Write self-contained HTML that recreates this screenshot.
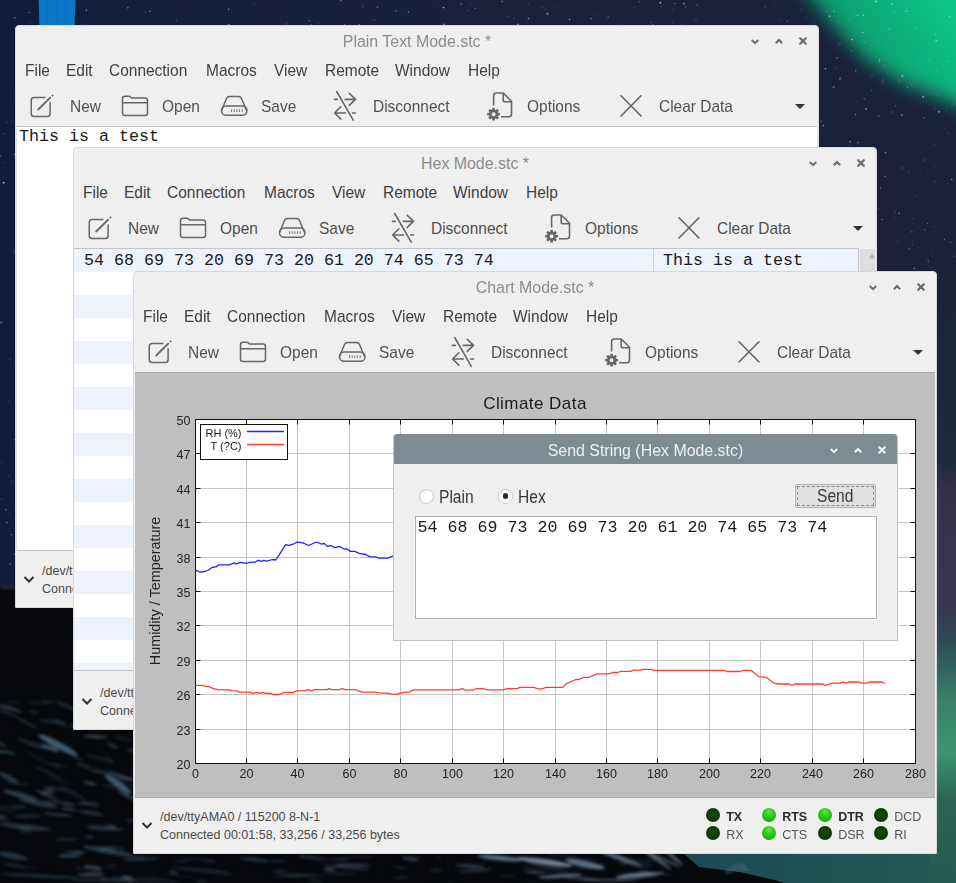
<!DOCTYPE html><html><head><meta charset="utf-8"><style>
*{margin:0;padding:0;box-sizing:border-box}
html,body{width:956px;height:883px;overflow:hidden}
body{position:relative;background:#151b33;font-family:"Liberation Sans",sans-serif}
.win{position:absolute;width:804px;height:583px;background:#efefef;border:1px solid #d8d8d8;border-radius:4px 4px 1px 1px;overflow:hidden}
.win .in{position:absolute;left:-1px;top:-1px;width:804px;height:583px}
.ov{position:absolute;left:0;top:0}
.title{position:absolute;left:0;width:804px;top:6.6px;text-align:center;font-size:16.7px;color:#8c8c8c;line-height:20px;transform:scaleX(.954)}
.menu{position:absolute;top:35.5px;font-size:17px;color:#404040;line-height:20px;white-space:pre;transform:scaleX(.91);transform-origin:0 0}
.tool{position:absolute;top:71.5px;margin-left:-1px;font-size:17px;color:#505050;line-height:20px;white-space:pre;transform:scaleX(.91);transform-origin:0 0}
.st{position:absolute;left:27px;font-size:12.5px;color:#4a4a4a;line-height:18px;white-space:pre;margin-top:1px}
.ledon,.ledoff{position:absolute;width:14px;height:14px;border-radius:50%}
.ledoff{background:radial-gradient(circle at 50% 40%,#124806 0%,#0d3c02 60%,#082a00 100%)}
.ledon{background:radial-gradient(circle at 50% 28%,#62e04c 0%,#2ccc18 38%,#1fb410 70%,#158a08 92%,#2a7a20 100%)}
.led{position:absolute;font-size:12.5px;line-height:16px;white-space:pre}
.dl{position:absolute;font-size:17.5px;line-height:20px;color:#383838;white-space:pre;transform:scaleX(.89);transform-origin:0 0;margin-top:1px}
.mono{font-family:"Liberation Mono",monospace;font-size:16.67px;color:#1a1a1a;white-space:pre}
</style></head><body><svg style="position:absolute;left:0;top:0" width="956" height="883" viewBox="0 0 956 883"><defs><linearGradient id="aur" gradientUnits="userSpaceOnUse" x1="806" y1="4" x2="847" y2="-64.5"><stop offset="0" stop-color="#1a2a40" stop-opacity="0"/><stop offset="0.1" stop-color="#17404a" stop-opacity="0.75"/><stop offset="0.3" stop-color="#0f7864"/><stop offset="0.6" stop-color="#0ea878"/><stop offset="1" stop-color="#0cc486"/></linearGradient><linearGradient id="rs" gradientUnits="userSpaceOnUse" x1="0" y1="260" x2="0" y2="883"><stop offset="0" stop-color="#1b2137"/><stop offset="0.32" stop-color="#1f2a3c"/><stop offset="0.37" stop-color="#35304a"/><stop offset="0.546" stop-color="#3a3450"/><stop offset="0.61" stop-color="#2e4a55"/><stop offset="0.706" stop-color="#3a8068"/><stop offset="0.787" stop-color="#3e9472"/><stop offset="0.867" stop-color="#2c6454"/><stop offset="1" stop-color="#235a50"/></linearGradient><linearGradient id="nav" gradientUnits="userSpaceOnUse" x1="0" y1="0" x2="500" y2="0"><stop offset="0" stop-color="#121a3b"/><stop offset="0.2" stop-color="#161d3b"/><stop offset="1" stop-color="#1b213b"/></linearGradient><linearGradient id="teal" gradientUnits="userSpaceOnUse" x1="700" y1="0" x2="956" y2="0"><stop offset="0" stop-color="#1e4a55"/><stop offset="1" stop-color="#225a55"/></linearGradient><linearGradient id="aur2" gradientUnits="userSpaceOnUse" x1="840" y1="60" x2="940" y2="-10"><stop offset="0" stop-color="#128a66"/><stop offset="0.35" stop-color="#0ea876"/><stop offset="1" stop-color="#0bc688"/></linearGradient><filter id="blr" x="-20%" y="-20%" width="140%" height="140%"><feGaussianBlur stdDeviation="9"/></filter><filter id="sb" x="-50%" y="-50%" width="200%" height="200%"><feGaussianBlur stdDeviation="1.8"/></filter></defs><rect width="956" height="883" fill="url(#nav)"/><path d="M790 -30 L812 0 L832 24 L860 55 L900 82 L956 104 L990 118 L990 -30 Z" fill="url(#aur2)" filter="url(#blr)"/><circle cx="309.6" cy="90.5" r="0.45" fill="#d0d8ff" fill-opacity="0.62"/><circle cx="785.1" cy="56.5" r="1.0" fill="#d0d8ff" fill-opacity="0.58"/><circle cx="205.3" cy="51.6" r="0.55" fill="#d0d8ff" fill-opacity="0.47"/><circle cx="86.7" cy="254.7" r="0.45" fill="#d0d8ff" fill-opacity="0.74"/><circle cx="905.8" cy="378.4" r="0.45" fill="#d0d8ff" fill-opacity="0.58"/><circle cx="551.7" cy="238.0" r="0.45" fill="#d0d8ff" fill-opacity="0.83"/><circle cx="532.2" cy="79.9" r="1.0" fill="#d0d8ff" fill-opacity="0.47"/><circle cx="112.6" cy="185.1" r="0.55" fill="#d0d8ff" fill-opacity="0.73"/><circle cx="98.5" cy="342.7" r="0.45" fill="#d0d8ff" fill-opacity="0.32"/><circle cx="523.6" cy="37.7" r="0.55" fill="#d0d8ff" fill-opacity="0.24"/><circle cx="474.6" cy="319.0" r="0.8" fill="#d0d8ff" fill-opacity="0.71"/><circle cx="559.8" cy="271.9" r="0.55" fill="#d0d8ff" fill-opacity="0.39"/><circle cx="668.2" cy="146.5" r="1.0" fill="#d0d8ff" fill-opacity="0.57"/><circle cx="473.3" cy="206.1" r="1.0" fill="#d0d8ff" fill-opacity="0.49"/><circle cx="937.0" cy="70.8" r="0.65" fill="#d0d8ff" fill-opacity="0.47"/><circle cx="145.3" cy="293.4" r="0.45" fill="#d0d8ff" fill-opacity="0.23"/><circle cx="730.9" cy="343.8" r="0.65" fill="#d0d8ff" fill-opacity="0.77"/><circle cx="325.2" cy="210.1" r="0.8" fill="#d0d8ff" fill-opacity="0.52"/><circle cx="65.7" cy="56.2" r="0.45" fill="#d0d8ff" fill-opacity="0.38"/><circle cx="58.0" cy="420.9" r="0.8" fill="#d0d8ff" fill-opacity="0.62"/><circle cx="272.1" cy="231.5" r="0.45" fill="#d0d8ff" fill-opacity="0.63"/><circle cx="899.3" cy="213.3" r="0.8" fill="#d0d8ff" fill-opacity="0.60"/><circle cx="56.4" cy="460.9" r="0.55" fill="#d0d8ff" fill-opacity="0.28"/><circle cx="380.4" cy="550.1" r="0.55" fill="#d0d8ff" fill-opacity="0.52"/><circle cx="429.4" cy="329.7" r="0.8" fill="#d0d8ff" fill-opacity="0.77"/><circle cx="826.0" cy="167.1" r="0.65" fill="#d0d8ff" fill-opacity="0.47"/><circle cx="652.7" cy="228.3" r="0.45" fill="#d0d8ff" fill-opacity="0.35"/><circle cx="168.5" cy="139.2" r="0.8" fill="#d0d8ff" fill-opacity="0.35"/><circle cx="794.5" cy="109.4" r="0.55" fill="#d0d8ff" fill-opacity="0.38"/><circle cx="400.5" cy="221.6" r="0.55" fill="#d0d8ff" fill-opacity="0.57"/><circle cx="660.1" cy="309.3" r="0.45" fill="#d0d8ff" fill-opacity="0.60"/><circle cx="436.6" cy="522.6" r="1.0" fill="#d0d8ff" fill-opacity="0.82"/><circle cx="375.1" cy="239.4" r="0.8" fill="#d0d8ff" fill-opacity="0.27"/><circle cx="59.5" cy="40.4" r="0.55" fill="#d0d8ff" fill-opacity="0.34"/><circle cx="105.1" cy="360.4" r="1.0" fill="#d0d8ff" fill-opacity="0.27"/><circle cx="144.6" cy="60.9" r="0.45" fill="#d0d8ff" fill-opacity="0.44"/><circle cx="67.2" cy="124.8" r="0.65" fill="#d0d8ff" fill-opacity="0.44"/><circle cx="913.4" cy="361.4" r="0.45" fill="#d0d8ff" fill-opacity="0.51"/><circle cx="811.6" cy="595.9" r="0.8" fill="#d0d8ff" fill-opacity="0.50"/><circle cx="298.1" cy="86.5" r="0.65" fill="#d0d8ff" fill-opacity="0.69"/><circle cx="457.6" cy="415.2" r="0.55" fill="#d0d8ff" fill-opacity="0.54"/><circle cx="909.1" cy="317.0" r="1.0" fill="#d0d8ff" fill-opacity="0.30"/><circle cx="873.9" cy="454.9" r="0.45" fill="#d0d8ff" fill-opacity="0.39"/><circle cx="665.6" cy="156.7" r="0.55" fill="#d0d8ff" fill-opacity="0.44"/><circle cx="340.0" cy="133.7" r="1.0" fill="#d0d8ff" fill-opacity="0.55"/><circle cx="315.2" cy="133.8" r="0.55" fill="#d0d8ff" fill-opacity="0.73"/><circle cx="770.6" cy="491.0" r="0.55" fill="#d0d8ff" fill-opacity="0.68"/><circle cx="191.1" cy="295.7" r="0.45" fill="#d0d8ff" fill-opacity="0.68"/><circle cx="755.3" cy="283.3" r="1.0" fill="#d0d8ff" fill-opacity="0.33"/><circle cx="914.4" cy="268.3" r="0.65" fill="#d0d8ff" fill-opacity="0.81"/><circle cx="913.0" cy="218.8" r="0.55" fill="#d0d8ff" fill-opacity="0.34"/><circle cx="449.4" cy="202.6" r="1.0" fill="#d0d8ff" fill-opacity="0.51"/><circle cx="803.5" cy="287.7" r="0.45" fill="#d0d8ff" fill-opacity="0.62"/><circle cx="797.9" cy="71.9" r="0.55" fill="#d0d8ff" fill-opacity="0.45"/><circle cx="457.0" cy="107.1" r="0.65" fill="#d0d8ff" fill-opacity="0.71"/><circle cx="82.9" cy="567.7" r="0.8" fill="#d0d8ff" fill-opacity="0.67"/><circle cx="383.7" cy="568.1" r="0.55" fill="#d0d8ff" fill-opacity="0.67"/><circle cx="949.4" cy="16.5" r="0.8" fill="#d0d8ff" fill-opacity="0.58"/><circle cx="771.0" cy="87.7" r="0.8" fill="#d0d8ff" fill-opacity="0.74"/><circle cx="628.3" cy="210.2" r="0.55" fill="#d0d8ff" fill-opacity="0.56"/><circle cx="20.5" cy="479.6" r="0.45" fill="#d0d8ff" fill-opacity="0.67"/><circle cx="503.4" cy="560.2" r="0.55" fill="#d0d8ff" fill-opacity="0.48"/><circle cx="789.8" cy="126.6" r="0.65" fill="#d0d8ff" fill-opacity="0.36"/><circle cx="479.1" cy="458.2" r="1.0" fill="#d0d8ff" fill-opacity="0.41"/><circle cx="400.6" cy="78.6" r="0.65" fill="#d0d8ff" fill-opacity="0.79"/><circle cx="858.2" cy="397.5" r="1.0" fill="#d0d8ff" fill-opacity="0.73"/><circle cx="402.1" cy="550.6" r="1.0" fill="#d0d8ff" fill-opacity="0.53"/><circle cx="145.2" cy="306.3" r="0.55" fill="#d0d8ff" fill-opacity="0.77"/><circle cx="581.8" cy="465.6" r="0.55" fill="#d0d8ff" fill-opacity="0.30"/><circle cx="452.7" cy="435.1" r="0.65" fill="#d0d8ff" fill-opacity="0.56"/><circle cx="652.3" cy="318.4" r="0.45" fill="#d0d8ff" fill-opacity="0.51"/><circle cx="844.4" cy="34.1" r="0.45" fill="#d0d8ff" fill-opacity="0.32"/><circle cx="738.3" cy="304.6" r="0.45" fill="#d0d8ff" fill-opacity="0.57"/><circle cx="423.7" cy="367.5" r="1.0" fill="#d0d8ff" fill-opacity="0.53"/><circle cx="190.6" cy="166.3" r="0.8" fill="#d0d8ff" fill-opacity="0.53"/><circle cx="485.4" cy="148.6" r="0.65" fill="#d0d8ff" fill-opacity="0.54"/><circle cx="882.2" cy="535.7" r="0.8" fill="#d0d8ff" fill-opacity="0.33"/><circle cx="131.1" cy="73.0" r="0.45" fill="#d0d8ff" fill-opacity="0.49"/><circle cx="641.6" cy="257.0" r="0.65" fill="#d0d8ff" fill-opacity="0.34"/><circle cx="749.4" cy="538.2" r="0.65" fill="#d0d8ff" fill-opacity="0.30"/><circle cx="136.7" cy="529.7" r="0.55" fill="#d0d8ff" fill-opacity="0.83"/><circle cx="713.8" cy="56.5" r="0.55" fill="#d0d8ff" fill-opacity="0.78"/><circle cx="946.3" cy="499.5" r="0.8" fill="#d0d8ff" fill-opacity="0.30"/><circle cx="950.3" cy="242.3" r="0.65" fill="#d0d8ff" fill-opacity="0.47"/><circle cx="304.5" cy="433.3" r="1.0" fill="#d0d8ff" fill-opacity="0.21"/><circle cx="438.5" cy="421.9" r="1.0" fill="#d0d8ff" fill-opacity="0.45"/><circle cx="596.5" cy="307.4" r="0.55" fill="#d0d8ff" fill-opacity="0.24"/><circle cx="928.9" cy="62.9" r="0.45" fill="#d0d8ff" fill-opacity="0.37"/><circle cx="866.0" cy="108.9" r="0.8" fill="#d0d8ff" fill-opacity="0.69"/><circle cx="812.2" cy="405.6" r="0.8" fill="#d0d8ff" fill-opacity="0.81"/><circle cx="142.8" cy="551.5" r="0.65" fill="#d0d8ff" fill-opacity="0.57"/><circle cx="85.5" cy="34.5" r="0.8" fill="#d0d8ff" fill-opacity="0.65"/><circle cx="855.9" cy="161.4" r="0.45" fill="#d0d8ff" fill-opacity="0.21"/><circle cx="766.4" cy="50.2" r="0.45" fill="#d0d8ff" fill-opacity="0.76"/><circle cx="252.8" cy="73.0" r="1.0" fill="#d0d8ff" fill-opacity="0.21"/><circle cx="399.4" cy="549.3" r="0.45" fill="#d0d8ff" fill-opacity="0.60"/><circle cx="503.7" cy="143.1" r="0.55" fill="#d0d8ff" fill-opacity="0.27"/><circle cx="250.4" cy="108.7" r="0.65" fill="#d0d8ff" fill-opacity="0.81"/><circle cx="507.7" cy="123.5" r="0.55" fill="#d0d8ff" fill-opacity="0.49"/><circle cx="258.6" cy="482.2" r="0.45" fill="#d0d8ff" fill-opacity="0.85"/><circle cx="14.7" cy="439.8" r="0.55" fill="#d0d8ff" fill-opacity="0.56"/><circle cx="491.6" cy="147.4" r="0.8" fill="#d0d8ff" fill-opacity="0.49"/><circle cx="627.6" cy="327.5" r="1.0" fill="#d0d8ff" fill-opacity="0.78"/><circle cx="294.2" cy="129.1" r="0.55" fill="#d0d8ff" fill-opacity="0.35"/><circle cx="795.7" cy="424.0" r="0.8" fill="#d0d8ff" fill-opacity="0.61"/><circle cx="945.9" cy="589.1" r="0.45" fill="#d0d8ff" fill-opacity="0.74"/><circle cx="67.6" cy="444.5" r="0.55" fill="#d0d8ff" fill-opacity="0.37"/><circle cx="53.0" cy="399.1" r="1.0" fill="#d0d8ff" fill-opacity="0.45"/><circle cx="641.0" cy="169.2" r="0.65" fill="#d0d8ff" fill-opacity="0.36"/><circle cx="43.2" cy="111.2" r="0.45" fill="#d0d8ff" fill-opacity="0.37"/><circle cx="251.7" cy="577.1" r="1.0" fill="#d0d8ff" fill-opacity="0.83"/><circle cx="309.3" cy="20.7" r="0.55" fill="#d0d8ff" fill-opacity="0.77"/><circle cx="340.9" cy="0.6" r="0.8" fill="#d0d8ff" fill-opacity="0.45"/><circle cx="266.7" cy="393.6" r="0.45" fill="#d0d8ff" fill-opacity="0.36"/><circle cx="86.9" cy="490.2" r="1.0" fill="#d0d8ff" fill-opacity="0.29"/><circle cx="39.8" cy="13.5" r="0.55" fill="#d0d8ff" fill-opacity="0.40"/><circle cx="80.8" cy="574.6" r="0.55" fill="#d0d8ff" fill-opacity="0.75"/><circle cx="628.6" cy="429.6" r="0.8" fill="#d0d8ff" fill-opacity="0.77"/><circle cx="730.7" cy="432.4" r="0.65" fill="#d0d8ff" fill-opacity="0.52"/><circle cx="692.3" cy="385.9" r="1.0" fill="#d0d8ff" fill-opacity="0.23"/><circle cx="599.7" cy="440.3" r="0.55" fill="#d0d8ff" fill-opacity="0.73"/><circle cx="869.9" cy="451.7" r="0.45" fill="#d0d8ff" fill-opacity="0.57"/><circle cx="790.0" cy="350.4" r="0.55" fill="#d0d8ff" fill-opacity="0.78"/><circle cx="81.3" cy="25.1" r="0.45" fill="#d0d8ff" fill-opacity="0.61"/><circle cx="360.0" cy="270.8" r="0.45" fill="#d0d8ff" fill-opacity="0.23"/><circle cx="598.7" cy="408.4" r="0.45" fill="#d0d8ff" fill-opacity="0.52"/><circle cx="436.8" cy="42.1" r="1.0" fill="#d0d8ff" fill-opacity="0.81"/><circle cx="87.9" cy="315.6" r="0.8" fill="#d0d8ff" fill-opacity="0.68"/><circle cx="241.1" cy="44.7" r="0.55" fill="#d0d8ff" fill-opacity="0.37"/><circle cx="220.6" cy="390.0" r="0.8" fill="#d0d8ff" fill-opacity="0.50"/><circle cx="73.4" cy="546.3" r="0.45" fill="#d0d8ff" fill-opacity="0.39"/><circle cx="589.8" cy="385.7" r="0.55" fill="#d0d8ff" fill-opacity="0.25"/><circle cx="317.2" cy="390.9" r="1.0" fill="#d0d8ff" fill-opacity="0.65"/><circle cx="542.8" cy="7.5" r="0.65" fill="#d0d8ff" fill-opacity="0.24"/><circle cx="929.7" cy="59.7" r="0.8" fill="#d0d8ff" fill-opacity="0.34"/><circle cx="278.1" cy="309.9" r="0.8" fill="#d0d8ff" fill-opacity="0.50"/><circle cx="733.4" cy="596.0" r="0.65" fill="#d0d8ff" fill-opacity="0.56"/><circle cx="935.1" cy="561.8" r="0.8" fill="#d0d8ff" fill-opacity="0.21"/><circle cx="73.1" cy="304.0" r="0.65" fill="#d0d8ff" fill-opacity="0.85"/><circle cx="369.8" cy="549.9" r="0.45" fill="#d0d8ff" fill-opacity="0.80"/><circle cx="555.9" cy="85.0" r="0.65" fill="#d0d8ff" fill-opacity="0.54"/><circle cx="126.8" cy="492.1" r="0.45" fill="#d0d8ff" fill-opacity="0.53"/><circle cx="672.4" cy="138.8" r="0.8" fill="#d0d8ff" fill-opacity="0.78"/><circle cx="376.7" cy="95.4" r="0.8" fill="#d0d8ff" fill-opacity="0.82"/><circle cx="387.6" cy="436.3" r="0.8" fill="#d0d8ff" fill-opacity="0.47"/><circle cx="302.2" cy="504.1" r="0.65" fill="#d0d8ff" fill-opacity="0.20"/><circle cx="802.2" cy="72.0" r="0.45" fill="#d0d8ff" fill-opacity="0.80"/><circle cx="861.9" cy="173.9" r="0.8" fill="#d0d8ff" fill-opacity="0.44"/><circle cx="373.0" cy="522.0" r="0.8" fill="#d0d8ff" fill-opacity="0.25"/><circle cx="722.4" cy="512.6" r="0.45" fill="#d0d8ff" fill-opacity="0.38"/><circle cx="798.0" cy="171.4" r="0.55" fill="#d0d8ff" fill-opacity="0.81"/><circle cx="928.3" cy="261.7" r="0.65" fill="#d0d8ff" fill-opacity="0.41"/><circle cx="750.6" cy="256.6" r="0.8" fill="#d0d8ff" fill-opacity="0.22"/><circle cx="873.2" cy="564.4" r="0.45" fill="#d0d8ff" fill-opacity="0.56"/><circle cx="47.3" cy="439.4" r="0.55" fill="#d0d8ff" fill-opacity="0.49"/><circle cx="616.1" cy="171.7" r="1.0" fill="#d0d8ff" fill-opacity="0.23"/><circle cx="121.7" cy="283.3" r="0.65" fill="#d0d8ff" fill-opacity="0.42"/><circle cx="244.5" cy="443.2" r="0.8" fill="#d0d8ff" fill-opacity="0.62"/><circle cx="627.1" cy="180.5" r="0.8" fill="#d0d8ff" fill-opacity="0.56"/><circle cx="114.5" cy="385.9" r="1.0" fill="#d0d8ff" fill-opacity="0.25"/><circle cx="866.1" cy="298.2" r="0.65" fill="#d0d8ff" fill-opacity="0.34"/><circle cx="952.6" cy="270.0" r="0.55" fill="#d0d8ff" fill-opacity="0.29"/><circle cx="233.3" cy="104.8" r="0.65" fill="#d0d8ff" fill-opacity="0.56"/><circle cx="228.6" cy="155.0" r="0.45" fill="#d0d8ff" fill-opacity="0.57"/><circle cx="716.7" cy="247.7" r="1.0" fill="#d0d8ff" fill-opacity="0.47"/><circle cx="200.8" cy="162.1" r="0.8" fill="#d0d8ff" fill-opacity="0.69"/><circle cx="265.3" cy="580.6" r="1.0" fill="#d0d8ff" fill-opacity="0.28"/><circle cx="505.9" cy="474.2" r="0.45" fill="#d0d8ff" fill-opacity="0.75"/><circle cx="259.1" cy="149.1" r="0.8" fill="#d0d8ff" fill-opacity="0.46"/><circle cx="412.8" cy="187.2" r="0.45" fill="#d0d8ff" fill-opacity="0.73"/><circle cx="121.6" cy="255.1" r="0.8" fill="#d0d8ff" fill-opacity="0.70"/><circle cx="925.7" cy="293.9" r="1.0" fill="#d0d8ff" fill-opacity="0.25"/><circle cx="817.8" cy="583.3" r="0.45" fill="#d0d8ff" fill-opacity="0.36"/><circle cx="214.0" cy="91.2" r="0.45" fill="#d0d8ff" fill-opacity="0.83"/><circle cx="900.1" cy="433.0" r="0.8" fill="#d0d8ff" fill-opacity="0.62"/><circle cx="81.3" cy="466.1" r="0.55" fill="#d0d8ff" fill-opacity="0.20"/><circle cx="222.3" cy="552.0" r="0.65" fill="#d0d8ff" fill-opacity="0.62"/><circle cx="920.1" cy="375.9" r="0.8" fill="#d0d8ff" fill-opacity="0.54"/><circle cx="667.8" cy="67.3" r="1.0" fill="#d0d8ff" fill-opacity="0.25"/><circle cx="902.0" cy="115.0" r="1.0" fill="#d0d8ff" fill-opacity="0.37"/><circle cx="1.1" cy="322.5" r="0.65" fill="#d0d8ff" fill-opacity="0.85"/><circle cx="916.7" cy="386.7" r="0.8" fill="#d0d8ff" fill-opacity="0.77"/><circle cx="503.1" cy="328.2" r="0.8" fill="#d0d8ff" fill-opacity="0.22"/><circle cx="673.6" cy="184.4" r="0.8" fill="#d0d8ff" fill-opacity="0.21"/><circle cx="845.9" cy="388.3" r="0.55" fill="#d0d8ff" fill-opacity="0.25"/><circle cx="638.0" cy="555.1" r="0.45" fill="#d0d8ff" fill-opacity="0.35"/><circle cx="665.2" cy="431.0" r="0.8" fill="#d0d8ff" fill-opacity="0.44"/><circle cx="189.4" cy="478.2" r="1.0" fill="#d0d8ff" fill-opacity="0.68"/><circle cx="64.5" cy="297.4" r="0.55" fill="#d0d8ff" fill-opacity="0.33"/><circle cx="220.7" cy="132.9" r="0.65" fill="#d0d8ff" fill-opacity="0.69"/><circle cx="104.2" cy="374.2" r="0.55" fill="#d0d8ff" fill-opacity="0.60"/><circle cx="463.7" cy="546.2" r="1.0" fill="#d0d8ff" fill-opacity="0.24"/><circle cx="139.9" cy="236.1" r="1.0" fill="#d0d8ff" fill-opacity="0.34"/><circle cx="135.7" cy="31.1" r="0.8" fill="#d0d8ff" fill-opacity="0.24"/><circle cx="429.9" cy="427.2" r="0.45" fill="#d0d8ff" fill-opacity="0.40"/><circle cx="953.6" cy="559.0" r="0.55" fill="#d0d8ff" fill-opacity="0.41"/><circle cx="623.8" cy="314.9" r="0.65" fill="#d0d8ff" fill-opacity="0.50"/><circle cx="635.2" cy="227.2" r="0.65" fill="#d0d8ff" fill-opacity="0.44"/><circle cx="423.0" cy="65.4" r="0.45" fill="#d0d8ff" fill-opacity="0.25"/><circle cx="336.0" cy="573.3" r="0.55" fill="#d0d8ff" fill-opacity="0.28"/><circle cx="363.4" cy="461.2" r="0.8" fill="#d0d8ff" fill-opacity="0.40"/><circle cx="83.9" cy="423.2" r="1.0" fill="#d0d8ff" fill-opacity="0.33"/><circle cx="879.0" cy="115.8" r="0.8" fill="#d0d8ff" fill-opacity="0.44"/><circle cx="28.9" cy="246.5" r="0.8" fill="#d0d8ff" fill-opacity="0.73"/><circle cx="38.9" cy="20.9" r="0.45" fill="#d0d8ff" fill-opacity="0.24"/><circle cx="245.7" cy="448.4" r="0.65" fill="#d0d8ff" fill-opacity="0.78"/><circle cx="347.0" cy="201.0" r="0.45" fill="#d0d8ff" fill-opacity="0.82"/><circle cx="250.6" cy="430.0" r="0.65" fill="#d0d8ff" fill-opacity="0.41"/><circle cx="284.3" cy="432.9" r="0.45" fill="#d0d8ff" fill-opacity="0.59"/><circle cx="23.2" cy="140.3" r="0.8" fill="#d0d8ff" fill-opacity="0.51"/><circle cx="911.9" cy="231.9" r="0.8" fill="#d0d8ff" fill-opacity="0.36"/><circle cx="778.9" cy="79.6" r="0.45" fill="#d0d8ff" fill-opacity="0.52"/><circle cx="767.3" cy="443.1" r="0.55" fill="#d0d8ff" fill-opacity="0.73"/><circle cx="580.5" cy="196.7" r="0.65" fill="#d0d8ff" fill-opacity="0.41"/><circle cx="749.3" cy="357.4" r="0.8" fill="#d0d8ff" fill-opacity="0.53"/><circle cx="719.8" cy="148.4" r="0.45" fill="#d0d8ff" fill-opacity="0.24"/><circle cx="460.5" cy="326.8" r="0.8" fill="#d0d8ff" fill-opacity="0.30"/><circle cx="844.6" cy="592.7" r="0.45" fill="#d0d8ff" fill-opacity="0.37"/><circle cx="199.2" cy="252.6" r="0.8" fill="#d0d8ff" fill-opacity="0.84"/><circle cx="165.6" cy="79.8" r="0.55" fill="#d0d8ff" fill-opacity="0.50"/><circle cx="715.1" cy="508.2" r="0.45" fill="#d0d8ff" fill-opacity="0.63"/><circle cx="745.4" cy="176.4" r="0.65" fill="#d0d8ff" fill-opacity="0.38"/><circle cx="356.6" cy="442.8" r="0.55" fill="#d0d8ff" fill-opacity="0.33"/><circle cx="177.6" cy="141.3" r="1.0" fill="#d0d8ff" fill-opacity="0.38"/><circle cx="180.0" cy="38.9" r="0.55" fill="#d0d8ff" fill-opacity="0.36"/><circle cx="485.0" cy="138.8" r="0.8" fill="#d0d8ff" fill-opacity="0.73"/><circle cx="947.4" cy="61.4" r="0.55" fill="#d0d8ff" fill-opacity="0.51"/><circle cx="803.6" cy="548.6" r="0.65" fill="#d0d8ff" fill-opacity="0.23"/><circle cx="222.6" cy="30.2" r="1.0" fill="#d0d8ff" fill-opacity="0.59"/><circle cx="185.6" cy="45.1" r="0.55" fill="#d0d8ff" fill-opacity="0.53"/><circle cx="429.4" cy="156.0" r="0.45" fill="#d0d8ff" fill-opacity="0.71"/><circle cx="101.1" cy="357.7" r="0.55" fill="#d0d8ff" fill-opacity="0.60"/><circle cx="35.8" cy="204.0" r="0.65" fill="#d0d8ff" fill-opacity="0.23"/><circle cx="36.6" cy="439.3" r="0.45" fill="#d0d8ff" fill-opacity="0.79"/><circle cx="782.8" cy="245.4" r="1.0" fill="#d0d8ff" fill-opacity="0.44"/><circle cx="298.5" cy="122.0" r="1.0" fill="#d0d8ff" fill-opacity="0.72"/><circle cx="462.2" cy="244.9" r="1.0" fill="#d0d8ff" fill-opacity="0.72"/><circle cx="147.8" cy="320.4" r="0.8" fill="#d0d8ff" fill-opacity="0.62"/><circle cx="664.8" cy="245.9" r="0.65" fill="#d0d8ff" fill-opacity="0.38"/><circle cx="399.5" cy="30.8" r="0.65" fill="#d0d8ff" fill-opacity="0.68"/><circle cx="395.9" cy="10.9" r="0.65" fill="#d0d8ff" fill-opacity="0.70"/><circle cx="616.1" cy="234.4" r="0.45" fill="#d0d8ff" fill-opacity="0.46"/><circle cx="415.1" cy="93.9" r="0.45" fill="#d0d8ff" fill-opacity="0.27"/><circle cx="388.3" cy="529.7" r="0.55" fill="#d0d8ff" fill-opacity="0.50"/><circle cx="124.3" cy="31.0" r="0.8" fill="#d0d8ff" fill-opacity="0.29"/><circle cx="85.1" cy="373.3" r="1.0" fill="#d0d8ff" fill-opacity="0.44"/><circle cx="164.1" cy="208.8" r="0.55" fill="#d0d8ff" fill-opacity="0.31"/><circle cx="884.8" cy="65.3" r="0.55" fill="#d0d8ff" fill-opacity="0.52"/><circle cx="288.3" cy="502.4" r="0.8" fill="#d0d8ff" fill-opacity="0.23"/><circle cx="300.7" cy="364.6" r="0.45" fill="#d0d8ff" fill-opacity="0.61"/><circle cx="864.4" cy="372.2" r="0.55" fill="#d0d8ff" fill-opacity="0.74"/><circle cx="612.2" cy="514.0" r="1.0" fill="#d0d8ff" fill-opacity="0.60"/><circle cx="809.1" cy="497.5" r="0.55" fill="#d0d8ff" fill-opacity="0.32"/><circle cx="39.9" cy="563.1" r="0.65" fill="#d0d8ff" fill-opacity="0.30"/><circle cx="117.6" cy="148.2" r="0.55" fill="#d0d8ff" fill-opacity="0.67"/><circle cx="39.3" cy="337.4" r="0.45" fill="#d0d8ff" fill-opacity="0.69"/><circle cx="638.5" cy="194.5" r="0.8" fill="#d0d8ff" fill-opacity="0.45"/><circle cx="525.8" cy="376.2" r="0.8" fill="#d0d8ff" fill-opacity="0.40"/><circle cx="294.7" cy="149.6" r="0.65" fill="#d0d8ff" fill-opacity="0.45"/><circle cx="427.1" cy="263.0" r="1.0" fill="#d0d8ff" fill-opacity="0.22"/><circle cx="942.7" cy="279.2" r="1.0" fill="#d0d8ff" fill-opacity="0.49"/><circle cx="745.7" cy="275.0" r="0.8" fill="#d0d8ff" fill-opacity="0.32"/><circle cx="382.7" cy="40.3" r="0.65" fill="#d0d8ff" fill-opacity="0.43"/><circle cx="87.7" cy="265.2" r="0.45" fill="#d0d8ff" fill-opacity="0.53"/><circle cx="38.9" cy="78.2" r="0.65" fill="#d0d8ff" fill-opacity="0.80"/><circle cx="743.4" cy="306.9" r="1.0" fill="#d0d8ff" fill-opacity="0.24"/><circle cx="855.5" cy="391.6" r="0.45" fill="#d0d8ff" fill-opacity="0.71"/><circle cx="819.4" cy="597.7" r="0.45" fill="#d0d8ff" fill-opacity="0.68"/><circle cx="185.2" cy="589.0" r="0.55" fill="#d0d8ff" fill-opacity="0.52"/><circle cx="655.9" cy="432.6" r="0.65" fill="#d0d8ff" fill-opacity="0.34"/><circle cx="583.6" cy="151.3" r="1.0" fill="#d0d8ff" fill-opacity="0.41"/><circle cx="262.9" cy="489.4" r="1.0" fill="#d0d8ff" fill-opacity="0.29"/><circle cx="921.9" cy="288.1" r="1.0" fill="#d0d8ff" fill-opacity="0.58"/><circle cx="483.7" cy="191.4" r="0.55" fill="#d0d8ff" fill-opacity="0.22"/><circle cx="385.7" cy="381.9" r="0.65" fill="#d0d8ff" fill-opacity="0.38"/><circle cx="856.0" cy="101.2" r="0.45" fill="#d0d8ff" fill-opacity="0.71"/><circle cx="734.5" cy="29.1" r="0.8" fill="#d0d8ff" fill-opacity="0.76"/><circle cx="530.8" cy="348.0" r="0.45" fill="#d0d8ff" fill-opacity="0.77"/><circle cx="240.9" cy="321.4" r="0.65" fill="#d0d8ff" fill-opacity="0.76"/><circle cx="253.1" cy="594.3" r="0.65" fill="#d0d8ff" fill-opacity="0.58"/><circle cx="316.3" cy="48.8" r="1.0" fill="#d0d8ff" fill-opacity="0.35"/><circle cx="710.9" cy="29.0" r="0.65" fill="#d0d8ff" fill-opacity="0.73"/><circle cx="296.4" cy="579.6" r="0.65" fill="#d0d8ff" fill-opacity="0.77"/><circle cx="700.8" cy="448.3" r="0.65" fill="#d0d8ff" fill-opacity="0.34"/><circle cx="588.9" cy="259.3" r="0.45" fill="#d0d8ff" fill-opacity="0.53"/><circle cx="126.2" cy="136.4" r="0.45" fill="#d0d8ff" fill-opacity="0.62"/><circle cx="52.0" cy="340.3" r="1.0" fill="#d0d8ff" fill-opacity="0.40"/><circle cx="341.4" cy="134.6" r="1.0" fill="#d0d8ff" fill-opacity="0.58"/><circle cx="127.8" cy="219.7" r="0.55" fill="#d0d8ff" fill-opacity="0.74"/><circle cx="128.8" cy="562.0" r="0.55" fill="#d0d8ff" fill-opacity="0.36"/><circle cx="431.0" cy="38.2" r="0.65" fill="#d0d8ff" fill-opacity="0.29"/><circle cx="384.3" cy="158.5" r="1.0" fill="#d0d8ff" fill-opacity="0.21"/><circle cx="853.4" cy="356.8" r="1.0" fill="#d0d8ff" fill-opacity="0.58"/><circle cx="895.9" cy="440.1" r="0.45" fill="#d0d8ff" fill-opacity="0.36"/><circle cx="42.1" cy="318.9" r="0.55" fill="#d0d8ff" fill-opacity="0.46"/><circle cx="152.2" cy="547.0" r="1.0" fill="#d0d8ff" fill-opacity="0.27"/><circle cx="526.7" cy="564.6" r="0.55" fill="#d0d8ff" fill-opacity="0.29"/><circle cx="495.5" cy="385.6" r="0.8" fill="#d0d8ff" fill-opacity="0.62"/><circle cx="777.6" cy="104.8" r="0.65" fill="#d0d8ff" fill-opacity="0.40"/><circle cx="598.4" cy="596.4" r="0.8" fill="#d0d8ff" fill-opacity="0.67"/><circle cx="683.9" cy="3.8" r="0.8" fill="#d0d8ff" fill-opacity="0.75"/><circle cx="76.9" cy="393.3" r="0.45" fill="#d0d8ff" fill-opacity="0.31"/><circle cx="249.9" cy="386.4" r="0.65" fill="#d0d8ff" fill-opacity="0.28"/><circle cx="680.4" cy="159.6" r="0.8" fill="#d0d8ff" fill-opacity="0.56"/><circle cx="655.6" cy="550.4" r="0.65" fill="#d0d8ff" fill-opacity="0.83"/><circle cx="613.8" cy="579.1" r="1.0" fill="#d0d8ff" fill-opacity="0.34"/><circle cx="14.6" cy="156.2" r="0.55" fill="#d0d8ff" fill-opacity="0.35"/><circle cx="903.1" cy="447.7" r="0.8" fill="#d0d8ff" fill-opacity="0.41"/><circle cx="314.1" cy="143.5" r="1.0" fill="#d0d8ff" fill-opacity="0.79"/><circle cx="448.8" cy="503.8" r="0.45" fill="#d0d8ff" fill-opacity="0.65"/><circle cx="418.0" cy="434.8" r="0.65" fill="#d0d8ff" fill-opacity="0.57"/><circle cx="754.5" cy="234.9" r="1.0" fill="#d0d8ff" fill-opacity="0.58"/><circle cx="870.7" cy="86.8" r="0.45" fill="#d0d8ff" fill-opacity="0.22"/><circle cx="594.6" cy="97.1" r="0.45" fill="#d0d8ff" fill-opacity="0.84"/><circle cx="29.5" cy="83.0" r="0.45" fill="#d0d8ff" fill-opacity="0.62"/><circle cx="666.3" cy="442.1" r="1.0" fill="#d0d8ff" fill-opacity="0.24"/><circle cx="728.3" cy="119.6" r="1.0" fill="#d0d8ff" fill-opacity="0.82"/><circle cx="852.1" cy="39.6" r="0.8" fill="#d0d8ff" fill-opacity="0.76"/><circle cx="102.4" cy="123.4" r="0.45" fill="#d0d8ff" fill-opacity="0.27"/><circle cx="907.5" cy="546.7" r="0.45" fill="#d0d8ff" fill-opacity="0.69"/><circle cx="788.8" cy="378.9" r="0.45" fill="#d0d8ff" fill-opacity="0.39"/><circle cx="126.8" cy="475.2" r="0.65" fill="#d0d8ff" fill-opacity="0.62"/><circle cx="305.1" cy="254.3" r="0.65" fill="#d0d8ff" fill-opacity="0.21"/><circle cx="889.2" cy="29.0" r="0.65" fill="#d0d8ff" fill-opacity="0.69"/><circle cx="735.4" cy="361.2" r="0.65" fill="#d0d8ff" fill-opacity="0.51"/><circle cx="591.1" cy="18.6" r="0.8" fill="#d0d8ff" fill-opacity="0.47"/><circle cx="495.8" cy="59.0" r="0.45" fill="#d0d8ff" fill-opacity="0.50"/><circle cx="514.2" cy="129.9" r="0.45" fill="#d0d8ff" fill-opacity="0.76"/><circle cx="549.3" cy="172.3" r="1.0" fill="#d0d8ff" fill-opacity="0.48"/><circle cx="193.1" cy="457.3" r="0.45" fill="#d0d8ff" fill-opacity="0.84"/><circle cx="332.5" cy="57.4" r="0.55" fill="#d0d8ff" fill-opacity="0.65"/><circle cx="924.6" cy="355.5" r="1.0" fill="#d0d8ff" fill-opacity="0.82"/><circle cx="249.1" cy="566.3" r="0.55" fill="#d0d8ff" fill-opacity="0.38"/><circle cx="897.0" cy="138.9" r="0.45" fill="#d0d8ff" fill-opacity="0.31"/><circle cx="468.7" cy="594.7" r="0.45" fill="#d0d8ff" fill-opacity="0.56"/><circle cx="600.3" cy="213.4" r="0.8" fill="#d0d8ff" fill-opacity="0.46"/><circle cx="852.6" cy="447.1" r="0.45" fill="#d0d8ff" fill-opacity="0.47"/><circle cx="355.6" cy="181.9" r="1.0" fill="#d0d8ff" fill-opacity="0.48"/><circle cx="479.1" cy="227.6" r="0.55" fill="#d0d8ff" fill-opacity="0.77"/><circle cx="902.4" cy="76.1" r="1.0" fill="#d0d8ff" fill-opacity="0.59"/><circle cx="617.9" cy="209.1" r="0.55" fill="#d0d8ff" fill-opacity="0.41"/><circle cx="829.8" cy="270.2" r="0.65" fill="#d0d8ff" fill-opacity="0.56"/><circle cx="162.1" cy="263.3" r="1.0" fill="#d0d8ff" fill-opacity="0.70"/><circle cx="220.9" cy="200.4" r="0.55" fill="#d0d8ff" fill-opacity="0.62"/><circle cx="485.4" cy="160.5" r="1.0" fill="#d0d8ff" fill-opacity="0.69"/><circle cx="147.8" cy="93.6" r="0.65" fill="#d0d8ff" fill-opacity="0.36"/><circle cx="576.4" cy="209.2" r="0.55" fill="#d0d8ff" fill-opacity="0.35"/><circle cx="247.3" cy="573.0" r="0.55" fill="#d0d8ff" fill-opacity="0.85"/><circle cx="920.0" cy="61.0" r="0.55" fill="#d0d8ff" fill-opacity="0.45"/><circle cx="759.9" cy="440.0" r="0.55" fill="#d0d8ff" fill-opacity="0.48"/><circle cx="104.5" cy="546.8" r="0.8" fill="#d0d8ff" fill-opacity="0.38"/><circle cx="443.5" cy="7.6" r="0.8" fill="#d0d8ff" fill-opacity="0.76"/><circle cx="662.9" cy="300.3" r="0.8" fill="#d0d8ff" fill-opacity="0.61"/><circle cx="21.1" cy="154.3" r="0.45" fill="#d0d8ff" fill-opacity="0.68"/><circle cx="708.3" cy="544.8" r="1.0" fill="#d0d8ff" fill-opacity="0.48"/><circle cx="561.6" cy="388.3" r="1.0" fill="#d0d8ff" fill-opacity="0.75"/><circle cx="814.9" cy="407.8" r="0.8" fill="#d0d8ff" fill-opacity="0.62"/><circle cx="413.5" cy="155.9" r="0.8" fill="#d0d8ff" fill-opacity="0.66"/><circle cx="231.7" cy="240.1" r="0.55" fill="#d0d8ff" fill-opacity="0.66"/><circle cx="239.1" cy="254.1" r="1.0" fill="#d0d8ff" fill-opacity="0.50"/><circle cx="820.8" cy="311.0" r="0.55" fill="#d0d8ff" fill-opacity="0.63"/><circle cx="855.1" cy="196.8" r="0.8" fill="#d0d8ff" fill-opacity="0.21"/><circle cx="868.2" cy="63.8" r="0.55" fill="#d0d8ff" fill-opacity="0.36"/><circle cx="153.8" cy="469.1" r="1.0" fill="#d0d8ff" fill-opacity="0.81"/><circle cx="332.9" cy="508.3" r="0.55" fill="#d0d8ff" fill-opacity="0.50"/><circle cx="685.7" cy="307.3" r="0.65" fill="#d0d8ff" fill-opacity="0.62"/><circle cx="498.7" cy="246.2" r="0.55" fill="#d0d8ff" fill-opacity="0.82"/><circle cx="946.7" cy="110.3" r="0.45" fill="#d0d8ff" fill-opacity="0.53"/><circle cx="697.0" cy="368.4" r="0.65" fill="#d0d8ff" fill-opacity="0.61"/><circle cx="262.3" cy="239.8" r="0.8" fill="#d0d8ff" fill-opacity="0.21"/><circle cx="875.2" cy="377.1" r="1.0" fill="#d0d8ff" fill-opacity="0.64"/><circle cx="253.5" cy="134.7" r="1.0" fill="#d0d8ff" fill-opacity="0.68"/><circle cx="928.8" cy="596.5" r="0.8" fill="#d0d8ff" fill-opacity="0.82"/><circle cx="202.7" cy="77.6" r="0.55" fill="#d0d8ff" fill-opacity="0.70"/><circle cx="448.5" cy="337.2" r="0.55" fill="#d0d8ff" fill-opacity="0.35"/><circle cx="337.6" cy="383.3" r="0.8" fill="#d0d8ff" fill-opacity="0.73"/><circle cx="447.5" cy="176.6" r="0.55" fill="#d0d8ff" fill-opacity="0.56"/><circle cx="745.5" cy="281.6" r="0.55" fill="#d0d8ff" fill-opacity="0.71"/><circle cx="255.7" cy="225.7" r="0.8" fill="#d0d8ff" fill-opacity="0.36"/><circle cx="649.0" cy="288.9" r="0.65" fill="#d0d8ff" fill-opacity="0.72"/><circle cx="342.2" cy="392.6" r="0.8" fill="#d0d8ff" fill-opacity="0.41"/><circle cx="409.6" cy="382.4" r="0.65" fill="#d0d8ff" fill-opacity="0.63"/><circle cx="146.0" cy="181.9" r="0.45" fill="#d0d8ff" fill-opacity="0.45"/><circle cx="791.5" cy="543.5" r="0.55" fill="#d0d8ff" fill-opacity="0.71"/><circle cx="507.3" cy="207.1" r="0.45" fill="#d0d8ff" fill-opacity="0.58"/><circle cx="200.5" cy="43.2" r="1.0" fill="#d0d8ff" fill-opacity="0.39"/><circle cx="97.0" cy="85.6" r="0.8" fill="#d0d8ff" fill-opacity="0.35"/><circle cx="331.2" cy="91.6" r="1.0" fill="#d0d8ff" fill-opacity="0.79"/><circle cx="160.5" cy="534.7" r="0.45" fill="#d0d8ff" fill-opacity="0.60"/><circle cx="639.0" cy="536.3" r="0.65" fill="#d0d8ff" fill-opacity="0.71"/><circle cx="188.7" cy="415.7" r="0.8" fill="#d0d8ff" fill-opacity="0.55"/><circle cx="641.7" cy="70.2" r="0.8" fill="#d0d8ff" fill-opacity="0.28"/><circle cx="223.9" cy="83.6" r="0.45" fill="#d0d8ff" fill-opacity="0.52"/><circle cx="463.1" cy="543.3" r="0.55" fill="#d0d8ff" fill-opacity="0.66"/><circle cx="476.3" cy="323.7" r="0.45" fill="#d0d8ff" fill-opacity="0.76"/><circle cx="153.3" cy="192.4" r="0.8" fill="#d0d8ff" fill-opacity="0.65"/><circle cx="636.0" cy="504.3" r="0.8" fill="#d0d8ff" fill-opacity="0.44"/><circle cx="956.0" cy="405.6" r="0.65" fill="#d0d8ff" fill-opacity="0.32"/><circle cx="608.1" cy="17.1" r="0.65" fill="#d0d8ff" fill-opacity="0.60"/><circle cx="773.0" cy="56.4" r="0.55" fill="#d0d8ff" fill-opacity="0.51"/><circle cx="32.4" cy="430.9" r="0.65" fill="#d0d8ff" fill-opacity="0.61"/><circle cx="90.3" cy="395.4" r="1.0" fill="#d0d8ff" fill-opacity="0.42"/><circle cx="529.7" cy="547.4" r="0.65" fill="#d0d8ff" fill-opacity="0.38"/><circle cx="403.8" cy="332.4" r="0.65" fill="#d0d8ff" fill-opacity="0.74"/><circle cx="339.6" cy="296.2" r="0.65" fill="#d0d8ff" fill-opacity="0.42"/><circle cx="834.6" cy="206.9" r="0.8" fill="#d0d8ff" fill-opacity="0.33"/><circle cx="757.1" cy="198.5" r="0.65" fill="#d0d8ff" fill-opacity="0.41"/><circle cx="122.0" cy="583.6" r="0.45" fill="#d0d8ff" fill-opacity="0.26"/><circle cx="381.3" cy="332.6" r="1.0" fill="#d0d8ff" fill-opacity="0.46"/><circle cx="47.5" cy="180.2" r="0.55" fill="#d0d8ff" fill-opacity="0.20"/><circle cx="785.8" cy="285.0" r="0.45" fill="#d0d8ff" fill-opacity="0.70"/><circle cx="754.3" cy="545.9" r="1.0" fill="#d0d8ff" fill-opacity="0.60"/><circle cx="140.6" cy="404.2" r="0.45" fill="#d0d8ff" fill-opacity="0.65"/><circle cx="203.2" cy="400.2" r="0.55" fill="#d0d8ff" fill-opacity="0.50"/><circle cx="96.9" cy="108.8" r="0.45" fill="#d0d8ff" fill-opacity="0.22"/><circle cx="873.9" cy="393.4" r="0.55" fill="#d0d8ff" fill-opacity="0.44"/><circle cx="751.9" cy="337.3" r="0.65" fill="#d0d8ff" fill-opacity="0.37"/><circle cx="176.6" cy="20.5" r="1.0" fill="#d0d8ff" fill-opacity="0.21"/><circle cx="613.5" cy="560.3" r="1.0" fill="#d0d8ff" fill-opacity="0.24"/><circle cx="499.2" cy="494.9" r="0.8" fill="#d0d8ff" fill-opacity="0.70"/><circle cx="550.0" cy="551.2" r="0.45" fill="#d0d8ff" fill-opacity="0.49"/><circle cx="650.0" cy="356.3" r="0.55" fill="#d0d8ff" fill-opacity="0.85"/><circle cx="454.5" cy="247.5" r="0.8" fill="#d0d8ff" fill-opacity="0.27"/><circle cx="202.9" cy="91.1" r="0.45" fill="#d0d8ff" fill-opacity="0.21"/><circle cx="8.9" cy="401.6" r="0.45" fill="#d0d8ff" fill-opacity="0.84"/><circle cx="208.6" cy="72.8" r="0.65" fill="#d0d8ff" fill-opacity="0.51"/><circle cx="687.7" cy="145.4" r="0.55" fill="#d0d8ff" fill-opacity="0.68"/><circle cx="882.2" cy="219.5" r="0.55" fill="#d0d8ff" fill-opacity="0.69"/><circle cx="697.6" cy="50.6" r="0.8" fill="#d0d8ff" fill-opacity="0.61"/><circle cx="440.3" cy="559.4" r="0.45" fill="#d0d8ff" fill-opacity="0.37"/><circle cx="685.7" cy="6.8" r="1.0" fill="#d0d8ff" fill-opacity="0.21"/><circle cx="76.2" cy="186.6" r="0.55" fill="#d0d8ff" fill-opacity="0.67"/><circle cx="915.6" cy="500.9" r="0.65" fill="#d0d8ff" fill-opacity="0.60"/><circle cx="351.4" cy="345.0" r="0.55" fill="#d0d8ff" fill-opacity="0.49"/><circle cx="138.5" cy="478.4" r="0.55" fill="#d0d8ff" fill-opacity="0.44"/><circle cx="602.0" cy="250.8" r="0.8" fill="#d0d8ff" fill-opacity="0.45"/><circle cx="903.3" cy="470.8" r="0.65" fill="#d0d8ff" fill-opacity="0.57"/><circle cx="267.6" cy="373.1" r="1.0" fill="#d0d8ff" fill-opacity="0.62"/><circle cx="317.4" cy="363.5" r="0.55" fill="#d0d8ff" fill-opacity="0.84"/><circle cx="574.7" cy="185.2" r="0.55" fill="#d0d8ff" fill-opacity="0.48"/><circle cx="360.1" cy="410.9" r="0.55" fill="#d0d8ff" fill-opacity="0.59"/><circle cx="772.0" cy="170.0" r="0.65" fill="#d0d8ff" fill-opacity="0.20"/><circle cx="256.2" cy="94.4" r="0.45" fill="#d0d8ff" fill-opacity="0.80"/><circle cx="275.8" cy="84.4" r="1.0" fill="#d0d8ff" fill-opacity="0.78"/><circle cx="140.5" cy="585.2" r="1.0" fill="#d0d8ff" fill-opacity="0.72"/><circle cx="654.5" cy="548.2" r="0.45" fill="#d0d8ff" fill-opacity="0.43"/><circle cx="516.2" cy="290.9" r="0.55" fill="#d0d8ff" fill-opacity="0.45"/><circle cx="295.9" cy="34.5" r="0.55" fill="#d0d8ff" fill-opacity="0.46"/><circle cx="885.3" cy="351.8" r="0.8" fill="#d0d8ff" fill-opacity="0.21"/><circle cx="439.5" cy="52.6" r="0.45" fill="#d0d8ff" fill-opacity="0.72"/><circle cx="222.6" cy="347.8" r="1.0" fill="#d0d8ff" fill-opacity="0.78"/><circle cx="306.9" cy="303.7" r="0.55" fill="#d0d8ff" fill-opacity="0.33"/><circle cx="183.9" cy="108.4" r="0.65" fill="#d0d8ff" fill-opacity="0.66"/><circle cx="552.4" cy="215.3" r="0.55" fill="#d0d8ff" fill-opacity="0.71"/><circle cx="235.5" cy="553.6" r="0.45" fill="#d0d8ff" fill-opacity="0.52"/><circle cx="355.3" cy="278.1" r="0.65" fill="#d0d8ff" fill-opacity="0.25"/><circle cx="570.9" cy="207.0" r="0.45" fill="#d0d8ff" fill-opacity="0.54"/><circle cx="89.9" cy="122.8" r="1.0" fill="#d0d8ff" fill-opacity="0.77"/><circle cx="464.9" cy="340.3" r="0.65" fill="#d0d8ff" fill-opacity="0.37"/><circle cx="407.2" cy="567.9" r="1.0" fill="#d0d8ff" fill-opacity="0.70"/><circle cx="921.1" cy="152.4" r="0.55" fill="#d0d8ff" fill-opacity="0.22"/><circle cx="950.9" cy="226.9" r="0.45" fill="#d0d8ff" fill-opacity="0.22"/><circle cx="532.9" cy="522.4" r="0.45" fill="#d0d8ff" fill-opacity="0.50"/><circle cx="825.0" cy="383.9" r="0.45" fill="#d0d8ff" fill-opacity="0.80"/><circle cx="245.9" cy="338.7" r="1.0" fill="#d0d8ff" fill-opacity="0.62"/><circle cx="375.8" cy="269.0" r="0.55" fill="#d0d8ff" fill-opacity="0.30"/><circle cx="948.1" cy="133.0" r="0.65" fill="#d0d8ff" fill-opacity="0.23"/><circle cx="899.8" cy="35.6" r="0.45" fill="#d0d8ff" fill-opacity="0.56"/><circle cx="800.4" cy="28.2" r="0.8" fill="#d0d8ff" fill-opacity="0.71"/><circle cx="53.3" cy="86.9" r="0.55" fill="#d0d8ff" fill-opacity="0.69"/><circle cx="647.1" cy="179.3" r="0.45" fill="#d0d8ff" fill-opacity="0.58"/><circle cx="450.0" cy="223.0" r="0.65" fill="#d0d8ff" fill-opacity="0.45"/><circle cx="460.1" cy="101.1" r="0.55" fill="#d0d8ff" fill-opacity="0.35"/><circle cx="874.1" cy="535.3" r="0.55" fill="#d0d8ff" fill-opacity="0.50"/><circle cx="763.7" cy="94.2" r="0.45" fill="#d0d8ff" fill-opacity="0.74"/><circle cx="892.9" cy="520.1" r="0.55" fill="#d0d8ff" fill-opacity="0.78"/><circle cx="744.1" cy="574.8" r="0.8" fill="#d0d8ff" fill-opacity="0.80"/><circle cx="805.2" cy="377.0" r="0.65" fill="#d0d8ff" fill-opacity="0.49"/><circle cx="308.4" cy="140.3" r="0.65" fill="#d0d8ff" fill-opacity="0.28"/><circle cx="136.5" cy="133.0" r="0.8" fill="#d0d8ff" fill-opacity="0.24"/><circle cx="529.0" cy="86.8" r="0.65" fill="#d0d8ff" fill-opacity="0.77"/><circle cx="399.9" cy="148.1" r="1.0" fill="#d0d8ff" fill-opacity="0.22"/><circle cx="802.6" cy="200.7" r="0.8" fill="#d0d8ff" fill-opacity="0.31"/><circle cx="104.4" cy="273.7" r="0.55" fill="#d0d8ff" fill-opacity="0.51"/><circle cx="935.6" cy="34.1" r="0.55" fill="#d0d8ff" fill-opacity="0.78"/><circle cx="535.3" cy="501.2" r="0.55" fill="#d0d8ff" fill-opacity="0.28"/><circle cx="928.0" cy="259.2" r="0.55" fill="#d0d8ff" fill-opacity="0.37"/><circle cx="884.4" cy="58.5" r="0.55" fill="#d0d8ff" fill-opacity="0.39"/><circle cx="55.0" cy="435.9" r="0.45" fill="#d0d8ff" fill-opacity="0.39"/><circle cx="422.7" cy="304.7" r="0.8" fill="#d0d8ff" fill-opacity="0.53"/><circle cx="1.8" cy="499.3" r="0.55" fill="#d0d8ff" fill-opacity="0.54"/><circle cx="344.3" cy="24.3" r="0.65" fill="#d0d8ff" fill-opacity="0.47"/><circle cx="546.2" cy="82.8" r="0.55" fill="#d0d8ff" fill-opacity="0.32"/><circle cx="680.3" cy="118.0" r="0.45" fill="#d0d8ff" fill-opacity="0.25"/><circle cx="850.2" cy="438.5" r="0.55" fill="#d0d8ff" fill-opacity="0.69"/><circle cx="197.0" cy="367.5" r="0.55" fill="#d0d8ff" fill-opacity="0.66"/><circle cx="557.3" cy="121.4" r="1.0" fill="#d0d8ff" fill-opacity="0.24"/><circle cx="390.2" cy="433.0" r="0.65" fill="#d0d8ff" fill-opacity="0.24"/><circle cx="320.5" cy="505.1" r="0.8" fill="#d0d8ff" fill-opacity="0.76"/><circle cx="86.4" cy="245.7" r="0.55" fill="#d0d8ff" fill-opacity="0.70"/><circle cx="833.6" cy="159.8" r="0.65" fill="#d0d8ff" fill-opacity="0.32"/><circle cx="35.1" cy="421.4" r="0.45" fill="#d0d8ff" fill-opacity="0.57"/><circle cx="340.5" cy="559.3" r="0.45" fill="#d0d8ff" fill-opacity="0.83"/><circle cx="115.5" cy="428.8" r="0.65" fill="#d0d8ff" fill-opacity="0.73"/><circle cx="744.8" cy="520.9" r="0.45" fill="#d0d8ff" fill-opacity="0.57"/><circle cx="278.7" cy="64.6" r="0.8" fill="#d0d8ff" fill-opacity="0.68"/><circle cx="490.7" cy="318.3" r="0.45" fill="#d0d8ff" fill-opacity="0.55"/><circle cx="232.8" cy="53.2" r="0.55" fill="#d0d8ff" fill-opacity="0.60"/><circle cx="98.2" cy="150.3" r="0.45" fill="#d0d8ff" fill-opacity="0.73"/><circle cx="18.6" cy="555.8" r="0.65" fill="#d0d8ff" fill-opacity="0.68"/><circle cx="16.9" cy="359.6" r="1.0" fill="#d0d8ff" fill-opacity="0.57"/><circle cx="227.9" cy="266.5" r="0.45" fill="#d0d8ff" fill-opacity="0.43"/><circle cx="685.5" cy="27.1" r="0.8" fill="#d0d8ff" fill-opacity="0.28"/><circle cx="560.1" cy="456.9" r="0.45" fill="#d0d8ff" fill-opacity="0.27"/><circle cx="387.8" cy="82.2" r="0.55" fill="#d0d8ff" fill-opacity="0.58"/><circle cx="140.7" cy="343.7" r="0.55" fill="#d0d8ff" fill-opacity="0.69"/><circle cx="906.5" cy="11.1" r="0.8" fill="#d0d8ff" fill-opacity="0.61"/><circle cx="570.8" cy="361.7" r="0.45" fill="#d0d8ff" fill-opacity="0.22"/><circle cx="742.7" cy="203.1" r="0.65" fill="#d0d8ff" fill-opacity="0.36"/><circle cx="684.0" cy="505.8" r="0.65" fill="#d0d8ff" fill-opacity="0.57"/><circle cx="779.2" cy="508.6" r="1.0" fill="#d0d8ff" fill-opacity="0.23"/><circle cx="140.2" cy="408.1" r="0.8" fill="#d0d8ff" fill-opacity="0.43"/><circle cx="633.9" cy="6.9" r="0.55" fill="#d0d8ff" fill-opacity="0.27"/><circle cx="66.2" cy="259.8" r="0.45" fill="#d0d8ff" fill-opacity="0.53"/><circle cx="215.6" cy="252.4" r="0.8" fill="#d0d8ff" fill-opacity="0.46"/><circle cx="605.4" cy="485.6" r="0.45" fill="#d0d8ff" fill-opacity="0.77"/><circle cx="32.9" cy="384.9" r="1.0" fill="#d0d8ff" fill-opacity="0.37"/><circle cx="261.4" cy="325.4" r="1.0" fill="#d0d8ff" fill-opacity="0.80"/><circle cx="96.1" cy="73.0" r="0.55" fill="#d0d8ff" fill-opacity="0.21"/><circle cx="909.0" cy="172.5" r="0.55" fill="#d0d8ff" fill-opacity="0.40"/><circle cx="115.1" cy="356.6" r="1.0" fill="#d0d8ff" fill-opacity="0.82"/><circle cx="861.8" cy="50.7" r="0.55" fill="#d0d8ff" fill-opacity="0.58"/><circle cx="420.6" cy="307.0" r="0.8" fill="#d0d8ff" fill-opacity="0.78"/><circle cx="551.9" cy="164.5" r="1.0" fill="#d0d8ff" fill-opacity="0.68"/><circle cx="274.5" cy="272.5" r="0.55" fill="#d0d8ff" fill-opacity="0.65"/><circle cx="621.7" cy="120.7" r="0.8" fill="#d0d8ff" fill-opacity="0.66"/><circle cx="852.6" cy="182.2" r="0.65" fill="#d0d8ff" fill-opacity="0.51"/><circle cx="29.6" cy="200.2" r="1.0" fill="#d0d8ff" fill-opacity="0.32"/><circle cx="366.3" cy="351.4" r="0.65" fill="#d0d8ff" fill-opacity="0.21"/><circle cx="155.2" cy="571.2" r="0.65" fill="#d0d8ff" fill-opacity="0.41"/><circle cx="469.8" cy="170.9" r="0.65" fill="#d0d8ff" fill-opacity="0.84"/><circle cx="54.4" cy="13.1" r="1.0" fill="#d0d8ff" fill-opacity="0.56"/><circle cx="832.9" cy="264.0" r="0.8" fill="#d0d8ff" fill-opacity="0.24"/><circle cx="797.6" cy="212.5" r="1.0" fill="#d0d8ff" fill-opacity="0.70"/><circle cx="215.3" cy="575.6" r="0.55" fill="#d0d8ff" fill-opacity="0.68"/><circle cx="398.4" cy="400.9" r="0.55" fill="#d0d8ff" fill-opacity="0.29"/><circle cx="589.2" cy="510.0" r="1.0" fill="#d0d8ff" fill-opacity="0.73"/><circle cx="90.9" cy="513.8" r="0.8" fill="#d0d8ff" fill-opacity="0.80"/><circle cx="256.9" cy="378.4" r="0.55" fill="#d0d8ff" fill-opacity="0.61"/><circle cx="394.9" cy="62.0" r="1.0" fill="#d0d8ff" fill-opacity="0.47"/><circle cx="560.1" cy="298.7" r="1.0" fill="#d0d8ff" fill-opacity="0.83"/><circle cx="143.0" cy="510.0" r="1.0" fill="#d0d8ff" fill-opacity="0.38"/><circle cx="580.6" cy="227.7" r="0.8" fill="#d0d8ff" fill-opacity="0.49"/><circle cx="275.4" cy="211.6" r="1.0" fill="#d0d8ff" fill-opacity="0.43"/><circle cx="530.9" cy="230.7" r="0.8" fill="#d0d8ff" fill-opacity="0.41"/><circle cx="363.9" cy="180.0" r="0.55" fill="#d0d8ff" fill-opacity="0.55"/><circle cx="416.5" cy="226.2" r="0.65" fill="#d0d8ff" fill-opacity="0.35"/><circle cx="309.6" cy="506.0" r="0.65" fill="#d0d8ff" fill-opacity="0.74"/><circle cx="195.3" cy="255.9" r="0.45" fill="#d0d8ff" fill-opacity="0.79"/><circle cx="24.4" cy="153.9" r="0.65" fill="#d0d8ff" fill-opacity="0.78"/><circle cx="879.8" cy="464.1" r="0.8" fill="#d0d8ff" fill-opacity="0.55"/><circle cx="494.7" cy="310.4" r="0.8" fill="#d0d8ff" fill-opacity="0.65"/><circle cx="443.8" cy="24.4" r="0.8" fill="#d0d8ff" fill-opacity="0.64"/><circle cx="906.2" cy="405.9" r="0.45" fill="#d0d8ff" fill-opacity="0.54"/><circle cx="391.5" cy="300.5" r="1.0" fill="#d0d8ff" fill-opacity="0.62"/><circle cx="147.4" cy="112.9" r="0.8" fill="#d0d8ff" fill-opacity="0.47"/><circle cx="420.8" cy="374.8" r="0.65" fill="#d0d8ff" fill-opacity="0.85"/><circle cx="661.1" cy="447.9" r="0.65" fill="#d0d8ff" fill-opacity="0.26"/><circle cx="304.1" cy="587.1" r="1.0" fill="#d0d8ff" fill-opacity="0.74"/><circle cx="167.9" cy="393.6" r="0.65" fill="#d0d8ff" fill-opacity="0.39"/><circle cx="784.5" cy="594.1" r="0.8" fill="#d0d8ff" fill-opacity="0.78"/><circle cx="603.3" cy="314.4" r="0.55" fill="#d0d8ff" fill-opacity="0.73"/><circle cx="482.7" cy="112.9" r="1.0" fill="#d0d8ff" fill-opacity="0.32"/><circle cx="576.6" cy="211.9" r="0.45" fill="#d0d8ff" fill-opacity="0.85"/><circle cx="661.3" cy="6.4" r="1.0" fill="#d0d8ff" fill-opacity="0.20"/><circle cx="3.7" cy="182.7" r="1.0" fill="#d0d8ff" fill-opacity="0.75"/><circle cx="14.8" cy="17.7" r="1.0" fill="#d0d8ff" fill-opacity="0.31"/><circle cx="542.1" cy="522.7" r="1.0" fill="#d0d8ff" fill-opacity="0.78"/><circle cx="953.2" cy="344.7" r="0.45" fill="#d0d8ff" fill-opacity="0.47"/><circle cx="139.0" cy="311.1" r="0.45" fill="#d0d8ff" fill-opacity="0.53"/><circle cx="95.7" cy="102.3" r="0.8" fill="#d0d8ff" fill-opacity="0.54"/><circle cx="586.0" cy="484.0" r="0.45" fill="#d0d8ff" fill-opacity="0.24"/><circle cx="654.4" cy="347.3" r="0.55" fill="#d0d8ff" fill-opacity="0.29"/><circle cx="338.3" cy="101.6" r="0.45" fill="#d0d8ff" fill-opacity="0.37"/><circle cx="821.5" cy="568.6" r="0.55" fill="#d0d8ff" fill-opacity="0.24"/><circle cx="430.0" cy="231.4" r="0.8" fill="#d0d8ff" fill-opacity="0.24"/><circle cx="557.0" cy="575.8" r="1.0" fill="#d0d8ff" fill-opacity="0.49"/><circle cx="227.8" cy="133.7" r="1.0" fill="#d0d8ff" fill-opacity="0.30"/><circle cx="817.1" cy="188.9" r="0.8" fill="#d0d8ff" fill-opacity="0.78"/><circle cx="290.3" cy="361.5" r="0.8" fill="#d0d8ff" fill-opacity="0.82"/><circle cx="936.4" cy="40.5" r="1.0" fill="#d0d8ff" fill-opacity="0.64"/><circle cx="211.7" cy="185.5" r="0.8" fill="#d0d8ff" fill-opacity="0.77"/><circle cx="21.4" cy="520.9" r="0.55" fill="#d0d8ff" fill-opacity="0.26"/><circle cx="342.6" cy="111.9" r="0.65" fill="#d0d8ff" fill-opacity="0.83"/><circle cx="378.6" cy="217.8" r="0.8" fill="#d0d8ff" fill-opacity="0.42"/><circle cx="321.1" cy="390.8" r="0.8" fill="#d0d8ff" fill-opacity="0.82"/><circle cx="789.5" cy="210.7" r="0.55" fill="#d0d8ff" fill-opacity="0.36"/><circle cx="446.5" cy="206.7" r="0.65" fill="#d0d8ff" fill-opacity="0.48"/><circle cx="635.0" cy="204.9" r="0.55" fill="#d0d8ff" fill-opacity="0.30"/><circle cx="88.6" cy="161.8" r="0.55" fill="#d0d8ff" fill-opacity="0.74"/><circle cx="530.6" cy="280.2" r="0.55" fill="#d0d8ff" fill-opacity="0.72"/><circle cx="152.2" cy="211.8" r="0.8" fill="#d0d8ff" fill-opacity="0.67"/><circle cx="601.7" cy="348.4" r="0.8" fill="#d0d8ff" fill-opacity="0.39"/><circle cx="482.6" cy="136.4" r="0.55" fill="#d0d8ff" fill-opacity="0.49"/><circle cx="900.6" cy="598.8" r="0.8" fill="#d0d8ff" fill-opacity="0.59"/><circle cx="561.7" cy="220.8" r="1.0" fill="#d0d8ff" fill-opacity="0.36"/><circle cx="487.7" cy="75.3" r="1.0" fill="#d0d8ff" fill-opacity="0.69"/><circle cx="87.4" cy="511.1" r="0.8" fill="#d0d8ff" fill-opacity="0.68"/><circle cx="27.5" cy="430.9" r="0.45" fill="#d0d8ff" fill-opacity="0.29"/><circle cx="372.8" cy="51.6" r="0.55" fill="#d0d8ff" fill-opacity="0.32"/><circle cx="306.9" cy="397.6" r="1.0" fill="#d0d8ff" fill-opacity="0.27"/><circle cx="873.6" cy="483.1" r="0.55" fill="#d0d8ff" fill-opacity="0.69"/><circle cx="63.0" cy="186.8" r="0.55" fill="#d0d8ff" fill-opacity="0.35"/><circle cx="780.9" cy="239.4" r="0.8" fill="#d0d8ff" fill-opacity="0.43"/><circle cx="740.9" cy="529.7" r="0.55" fill="#d0d8ff" fill-opacity="0.76"/><circle cx="895.5" cy="105.8" r="0.65" fill="#d0d8ff" fill-opacity="0.44"/><circle cx="857.5" cy="15.2" r="0.8" fill="#d0d8ff" fill-opacity="0.66"/><circle cx="237.5" cy="508.0" r="0.45" fill="#d0d8ff" fill-opacity="0.43"/><circle cx="173.7" cy="69.1" r="0.55" fill="#d0d8ff" fill-opacity="0.79"/><circle cx="681.2" cy="24.3" r="0.55" fill="#d0d8ff" fill-opacity="0.23"/><circle cx="411.8" cy="454.2" r="0.45" fill="#d0d8ff" fill-opacity="0.30"/><circle cx="528.0" cy="377.7" r="1.0" fill="#d0d8ff" fill-opacity="0.81"/><circle cx="802.5" cy="342.1" r="0.65" fill="#d0d8ff" fill-opacity="0.67"/><circle cx="885.0" cy="402.1" r="0.45" fill="#d0d8ff" fill-opacity="0.57"/><circle cx="106.9" cy="458.2" r="0.45" fill="#d0d8ff" fill-opacity="0.63"/><circle cx="836.6" cy="351.1" r="0.55" fill="#d0d8ff" fill-opacity="0.65"/><circle cx="651.1" cy="22.3" r="0.65" fill="#d0d8ff" fill-opacity="0.41"/><circle cx="716.5" cy="51.7" r="0.8" fill="#d0d8ff" fill-opacity="0.65"/><circle cx="954.2" cy="369.2" r="1.0" fill="#d0d8ff" fill-opacity="0.34"/><circle cx="86.0" cy="567.8" r="0.65" fill="#d0d8ff" fill-opacity="0.48"/><circle cx="661.2" cy="443.2" r="0.8" fill="#d0d8ff" fill-opacity="0.74"/><circle cx="486.3" cy="406.0" r="1.0" fill="#d0d8ff" fill-opacity="0.33"/><circle cx="809.3" cy="467.0" r="0.55" fill="#d0d8ff" fill-opacity="0.52"/><circle cx="41.8" cy="421.6" r="0.65" fill="#d0d8ff" fill-opacity="0.72"/><circle cx="166.9" cy="98.2" r="0.55" fill="#d0d8ff" fill-opacity="0.71"/><circle cx="520.0" cy="149.8" r="0.65" fill="#d0d8ff" fill-opacity="0.24"/><circle cx="332.0" cy="55.5" r="0.55" fill="#d0d8ff" fill-opacity="0.61"/><circle cx="130.5" cy="424.2" r="0.55" fill="#d0d8ff" fill-opacity="0.64"/><circle cx="674.6" cy="3.5" r="0.55" fill="#d0d8ff" fill-opacity="0.65"/><circle cx="894.7" cy="210.9" r="0.55" fill="#d0d8ff" fill-opacity="0.39"/><circle cx="561.7" cy="144.5" r="0.45" fill="#d0d8ff" fill-opacity="0.61"/><circle cx="524.1" cy="456.3" r="0.55" fill="#d0d8ff" fill-opacity="0.31"/><circle cx="572.3" cy="276.7" r="0.55" fill="#d0d8ff" fill-opacity="0.70"/><circle cx="109.4" cy="173.6" r="0.55" fill="#d0d8ff" fill-opacity="0.43"/><circle cx="41.5" cy="537.5" r="0.45" fill="#d0d8ff" fill-opacity="0.40"/><circle cx="670.8" cy="268.8" r="0.65" fill="#d0d8ff" fill-opacity="0.27"/><circle cx="425.5" cy="341.5" r="1.0" fill="#d0d8ff" fill-opacity="0.39"/><circle cx="68.7" cy="6.5" r="0.8" fill="#d0d8ff" fill-opacity="0.84"/><circle cx="80.3" cy="430.3" r="1.0" fill="#d0d8ff" fill-opacity="0.84"/><circle cx="252.8" cy="387.1" r="0.8" fill="#d0d8ff" fill-opacity="0.82"/><circle cx="181.5" cy="325.8" r="0.45" fill="#d0d8ff" fill-opacity="0.21"/><circle cx="616.1" cy="376.6" r="0.65" fill="#d0d8ff" fill-opacity="0.81"/><circle cx="624.3" cy="46.9" r="0.45" fill="#d0d8ff" fill-opacity="0.69"/><circle cx="740.4" cy="503.7" r="0.55" fill="#d0d8ff" fill-opacity="0.39"/><circle cx="919.7" cy="315.3" r="0.55" fill="#d0d8ff" fill-opacity="0.78"/><circle cx="97.7" cy="431.3" r="1.0" fill="#d0d8ff" fill-opacity="0.40"/><circle cx="312.3" cy="110.7" r="0.65" fill="#d0d8ff" fill-opacity="0.74"/><circle cx="220.1" cy="81.8" r="0.65" fill="#d0d8ff" fill-opacity="0.80"/><circle cx="228.8" cy="24.8" r="0.8" fill="#d0d8ff" fill-opacity="0.57"/><circle cx="865.4" cy="567.0" r="0.8" fill="#d0d8ff" fill-opacity="0.52"/><circle cx="698.6" cy="597.4" r="0.45" fill="#d0d8ff" fill-opacity="0.59"/><circle cx="135.6" cy="136.5" r="0.8" fill="#d0d8ff" fill-opacity="0.29"/><circle cx="85.7" cy="24.0" r="0.55" fill="#d0d8ff" fill-opacity="0.49"/><circle cx="208.7" cy="223.5" r="1.0" fill="#d0d8ff" fill-opacity="0.22"/><circle cx="817.7" cy="472.2" r="0.65" fill="#d0d8ff" fill-opacity="0.48"/><circle cx="68.8" cy="33.2" r="0.65" fill="#d0d8ff" fill-opacity="0.66"/><circle cx="60.0" cy="5.3" r="0.55" fill="#d0d8ff" fill-opacity="0.82"/><circle cx="864.2" cy="98.7" r="0.8" fill="#d0d8ff" fill-opacity="0.39"/><circle cx="768.8" cy="405.2" r="0.8" fill="#d0d8ff" fill-opacity="0.57"/><circle cx="81.3" cy="194.2" r="1.0" fill="#d0d8ff" fill-opacity="0.50"/><circle cx="868.7" cy="519.3" r="1.0" fill="#d0d8ff" fill-opacity="0.83"/><circle cx="592.6" cy="486.7" r="0.65" fill="#d0d8ff" fill-opacity="0.24"/><circle cx="582.3" cy="178.2" r="0.65" fill="#d0d8ff" fill-opacity="0.57"/><circle cx="459.6" cy="388.4" r="0.65" fill="#d0d8ff" fill-opacity="0.39"/><circle cx="507.1" cy="380.2" r="0.55" fill="#d0d8ff" fill-opacity="0.75"/><circle cx="648.8" cy="268.4" r="1.0" fill="#d0d8ff" fill-opacity="0.26"/><circle cx="355.6" cy="348.5" r="1.0" fill="#d0d8ff" fill-opacity="0.47"/><circle cx="229.7" cy="264.8" r="0.55" fill="#d0d8ff" fill-opacity="0.37"/><circle cx="172.6" cy="534.0" r="0.45" fill="#d0d8ff" fill-opacity="0.56"/><circle cx="211.5" cy="502.4" r="0.55" fill="#d0d8ff" fill-opacity="0.62"/><circle cx="507.4" cy="150.9" r="1.0" fill="#d0d8ff" fill-opacity="0.52"/><circle cx="438.0" cy="324.7" r="1.0" fill="#d0d8ff" fill-opacity="0.65"/><circle cx="869.2" cy="340.1" r="0.45" fill="#d0d8ff" fill-opacity="0.75"/><circle cx="765.1" cy="80.6" r="1.0" fill="#d0d8ff" fill-opacity="0.53"/><circle cx="683.2" cy="454.1" r="1.0" fill="#d0d8ff" fill-opacity="0.27"/><circle cx="97.6" cy="498.1" r="0.55" fill="#d0d8ff" fill-opacity="0.45"/><circle cx="925.4" cy="115.0" r="0.45" fill="#d0d8ff" fill-opacity="0.51"/><circle cx="130.8" cy="465.7" r="0.55" fill="#d0d8ff" fill-opacity="0.24"/><circle cx="45.1" cy="25.0" r="0.55" fill="#d0d8ff" fill-opacity="0.66"/><circle cx="439.5" cy="72.3" r="0.45" fill="#d0d8ff" fill-opacity="0.29"/><circle cx="593.8" cy="523.3" r="0.65" fill="#d0d8ff" fill-opacity="0.57"/><circle cx="160.6" cy="447.3" r="0.45" fill="#d0d8ff" fill-opacity="0.42"/><circle cx="789.3" cy="73.6" r="1.0" fill="#d0d8ff" fill-opacity="0.44"/><circle cx="906.3" cy="433.1" r="1.0" fill="#d0d8ff" fill-opacity="0.23"/><circle cx="337.9" cy="213.4" r="1.0" fill="#d0d8ff" fill-opacity="0.41"/><circle cx="108.0" cy="555.2" r="0.65" fill="#d0d8ff" fill-opacity="0.64"/><circle cx="338.8" cy="416.4" r="1.0" fill="#d0d8ff" fill-opacity="0.21"/><circle cx="420.5" cy="474.7" r="0.45" fill="#d0d8ff" fill-opacity="0.52"/><circle cx="765.5" cy="111.2" r="0.65" fill="#d0d8ff" fill-opacity="0.56"/><circle cx="835.3" cy="401.7" r="1.0" fill="#d0d8ff" fill-opacity="0.74"/><circle cx="836.9" cy="323.1" r="0.65" fill="#d0d8ff" fill-opacity="0.65"/><circle cx="907.0" cy="8.3" r="0.55" fill="#d0d8ff" fill-opacity="0.42"/><circle cx="465.7" cy="290.4" r="0.45" fill="#d0d8ff" fill-opacity="0.22"/><circle cx="71.3" cy="372.3" r="1.0" fill="#d0d8ff" fill-opacity="0.62"/><circle cx="375.3" cy="285.5" r="0.8" fill="#d0d8ff" fill-opacity="0.30"/><circle cx="376.1" cy="523.8" r="0.45" fill="#d0d8ff" fill-opacity="0.60"/><circle cx="345.1" cy="317.0" r="0.55" fill="#d0d8ff" fill-opacity="0.40"/><circle cx="563.3" cy="26.2" r="0.65" fill="#d0d8ff" fill-opacity="0.31"/><circle cx="695.2" cy="198.8" r="0.65" fill="#d0d8ff" fill-opacity="0.50"/><circle cx="300.5" cy="201.3" r="0.55" fill="#d0d8ff" fill-opacity="0.51"/><circle cx="19.6" cy="275.6" r="0.45" fill="#d0d8ff" fill-opacity="0.84"/><circle cx="603.1" cy="436.2" r="0.8" fill="#d0d8ff" fill-opacity="0.29"/><circle cx="261.3" cy="300.0" r="1.0" fill="#d0d8ff" fill-opacity="0.37"/><circle cx="548.3" cy="350.6" r="0.45" fill="#d0d8ff" fill-opacity="0.29"/><circle cx="874.8" cy="541.6" r="0.55" fill="#d0d8ff" fill-opacity="0.26"/><circle cx="740.2" cy="379.9" r="0.65" fill="#d0d8ff" fill-opacity="0.61"/><circle cx="757.1" cy="475.8" r="0.55" fill="#d0d8ff" fill-opacity="0.35"/><circle cx="651.4" cy="182.4" r="0.65" fill="#d0d8ff" fill-opacity="0.70"/><circle cx="486.5" cy="381.1" r="1.0" fill="#d0d8ff" fill-opacity="0.43"/><circle cx="684.2" cy="200.7" r="0.65" fill="#d0d8ff" fill-opacity="0.66"/><circle cx="844.8" cy="469.5" r="0.55" fill="#d0d8ff" fill-opacity="0.53"/><circle cx="773.6" cy="598.0" r="0.55" fill="#d0d8ff" fill-opacity="0.30"/><circle cx="6.9" cy="522.6" r="0.8" fill="#d0d8ff" fill-opacity="0.49"/><circle cx="378.6" cy="463.4" r="1.0" fill="#d0d8ff" fill-opacity="0.80"/><circle cx="63.4" cy="180.9" r="1.0" fill="#d0d8ff" fill-opacity="0.40"/><circle cx="527.0" cy="562.5" r="0.55" fill="#d0d8ff" fill-opacity="0.42"/><circle cx="557.7" cy="48.0" r="1.0" fill="#d0d8ff" fill-opacity="0.32"/><circle cx="337.9" cy="280.7" r="0.8" fill="#d0d8ff" fill-opacity="0.83"/><circle cx="689.5" cy="553.2" r="0.65" fill="#d0d8ff" fill-opacity="0.75"/><circle cx="859.5" cy="165.5" r="0.45" fill="#d0d8ff" fill-opacity="0.37"/><circle cx="725.1" cy="375.9" r="0.45" fill="#d0d8ff" fill-opacity="0.35"/><circle cx="208.7" cy="239.7" r="1.0" fill="#d0d8ff" fill-opacity="0.33"/><circle cx="270.2" cy="301.1" r="0.55" fill="#d0d8ff" fill-opacity="0.26"/><circle cx="701.6" cy="577.9" r="0.45" fill="#d0d8ff" fill-opacity="0.59"/><circle cx="70.2" cy="489.8" r="0.55" fill="#d0d8ff" fill-opacity="0.57"/><circle cx="4.8" cy="162.4" r="0.45" fill="#d0d8ff" fill-opacity="0.62"/><circle cx="611.7" cy="553.7" r="0.65" fill="#d0d8ff" fill-opacity="0.34"/><circle cx="829.6" cy="16.3" r="1.0" fill="#d0d8ff" fill-opacity="0.52"/><circle cx="649.1" cy="202.7" r="0.8" fill="#d0d8ff" fill-opacity="0.24"/><circle cx="761.2" cy="52.3" r="0.8" fill="#d0d8ff" fill-opacity="0.60"/><circle cx="944.4" cy="239.7" r="0.45" fill="#d0d8ff" fill-opacity="0.81"/><circle cx="24.6" cy="190.1" r="0.65" fill="#d0d8ff" fill-opacity="0.63"/><circle cx="53.6" cy="368.4" r="0.65" fill="#d0d8ff" fill-opacity="0.67"/><circle cx="149.8" cy="11.2" r="1.0" fill="#d0d8ff" fill-opacity="0.34"/><circle cx="733.4" cy="53.9" r="0.8" fill="#d0d8ff" fill-opacity="0.73"/><circle cx="329.0" cy="408.1" r="0.55" fill="#d0d8ff" fill-opacity="0.76"/><circle cx="628.4" cy="360.9" r="1.0" fill="#d0d8ff" fill-opacity="0.42"/><circle cx="246.5" cy="426.9" r="0.65" fill="#d0d8ff" fill-opacity="0.70"/><circle cx="623.0" cy="329.7" r="1.0" fill="#d0d8ff" fill-opacity="0.66"/><circle cx="266.0" cy="314.0" r="0.55" fill="#d0d8ff" fill-opacity="0.81"/><circle cx="241.8" cy="334.9" r="0.65" fill="#d0d8ff" fill-opacity="0.26"/><circle cx="144.0" cy="377.3" r="0.45" fill="#d0d8ff" fill-opacity="0.46"/><circle cx="895.7" cy="374.8" r="1.0" fill="#d0d8ff" fill-opacity="0.28"/><circle cx="479.8" cy="333.1" r="1.0" fill="#d0d8ff" fill-opacity="0.32"/><circle cx="349.5" cy="89.6" r="0.55" fill="#d0d8ff" fill-opacity="0.32"/><circle cx="505.2" cy="210.5" r="0.8" fill="#d0d8ff" fill-opacity="0.66"/><circle cx="939.1" cy="299.4" r="0.65" fill="#d0d8ff" fill-opacity="0.61"/><circle cx="861.4" cy="233.4" r="0.45" fill="#d0d8ff" fill-opacity="0.34"/><circle cx="103.1" cy="440.0" r="0.8" fill="#d0d8ff" fill-opacity="0.24"/><circle cx="644.5" cy="210.4" r="0.8" fill="#d0d8ff" fill-opacity="0.35"/><circle cx="391.9" cy="551.5" r="0.55" fill="#d0d8ff" fill-opacity="0.81"/><circle cx="29.4" cy="12.5" r="0.55" fill="#d0d8ff" fill-opacity="0.66"/><circle cx="221.2" cy="121.9" r="0.65" fill="#d0d8ff" fill-opacity="0.69"/><circle cx="285.3" cy="596.6" r="1.0" fill="#d0d8ff" fill-opacity="0.34"/><circle cx="756.0" cy="286.4" r="0.65" fill="#d0d8ff" fill-opacity="0.81"/><circle cx="912.3" cy="81.9" r="0.45" fill="#d0d8ff" fill-opacity="0.40"/><circle cx="316.9" cy="291.3" r="0.55" fill="#d0d8ff" fill-opacity="0.78"/><circle cx="305.7" cy="366.2" r="0.55" fill="#d0d8ff" fill-opacity="0.82"/><circle cx="553.7" cy="529.7" r="0.65" fill="#d0d8ff" fill-opacity="0.34"/><circle cx="44.2" cy="464.4" r="0.8" fill="#d0d8ff" fill-opacity="0.49"/><circle cx="826.0" cy="596.9" r="0.45" fill="#d0d8ff" fill-opacity="0.39"/><circle cx="769.6" cy="91.2" r="0.55" fill="#d0d8ff" fill-opacity="0.79"/><circle cx="871.5" cy="90.5" r="0.45" fill="#d0d8ff" fill-opacity="0.68"/><circle cx="718.2" cy="278.7" r="0.8" fill="#d0d8ff" fill-opacity="0.46"/><circle cx="324.6" cy="551.1" r="0.65" fill="#d0d8ff" fill-opacity="0.67"/><circle cx="936.5" cy="19.7" r="0.45" fill="#d0d8ff" fill-opacity="0.35"/><circle cx="36.2" cy="302.9" r="0.8" fill="#d0d8ff" fill-opacity="0.35"/><circle cx="667.7" cy="437.1" r="0.65" fill="#d0d8ff" fill-opacity="0.23"/><circle cx="61.7" cy="66.2" r="0.55" fill="#d0d8ff" fill-opacity="0.82"/><circle cx="502.3" cy="1.5" r="1.0" fill="#d0d8ff" fill-opacity="0.35"/><circle cx="141.4" cy="442.9" r="0.45" fill="#d0d8ff" fill-opacity="0.53"/><circle cx="506.6" cy="503.7" r="0.45" fill="#d0d8ff" fill-opacity="0.82"/><circle cx="334.1" cy="129.1" r="0.55" fill="#d0d8ff" fill-opacity="0.83"/><circle cx="699.2" cy="163.8" r="0.65" fill="#d0d8ff" fill-opacity="0.32"/><circle cx="257.2" cy="579.8" r="0.45" fill="#d0d8ff" fill-opacity="0.33"/><circle cx="390.2" cy="334.0" r="0.45" fill="#d0d8ff" fill-opacity="0.44"/><circle cx="311.4" cy="24.8" r="0.65" fill="#d0d8ff" fill-opacity="0.49"/><circle cx="524.7" cy="414.2" r="0.65" fill="#d0d8ff" fill-opacity="0.84"/><circle cx="381.7" cy="191.0" r="0.55" fill="#d0d8ff" fill-opacity="0.47"/><circle cx="370.0" cy="231.2" r="0.55" fill="#d0d8ff" fill-opacity="0.47"/><circle cx="858.6" cy="381.0" r="1.0" fill="#d0d8ff" fill-opacity="0.36"/><circle cx="885.5" cy="152.8" r="0.8" fill="#d0d8ff" fill-opacity="0.60"/><circle cx="947.4" cy="495.3" r="0.45" fill="#d0d8ff" fill-opacity="0.63"/><circle cx="806.0" cy="470.4" r="0.45" fill="#d0d8ff" fill-opacity="0.79"/><circle cx="388.0" cy="335.1" r="0.8" fill="#d0d8ff" fill-opacity="0.65"/><circle cx="524.8" cy="189.4" r="0.45" fill="#d0d8ff" fill-opacity="0.83"/><circle cx="452.6" cy="388.4" r="0.65" fill="#d0d8ff" fill-opacity="0.51"/><circle cx="566.2" cy="596.8" r="0.8" fill="#d0d8ff" fill-opacity="0.35"/><circle cx="339.6" cy="38.5" r="0.65" fill="#d0d8ff" fill-opacity="0.83"/><circle cx="585.8" cy="406.3" r="1.0" fill="#d0d8ff" fill-opacity="0.41"/><circle cx="635.0" cy="554.4" r="0.65" fill="#d0d8ff" fill-opacity="0.70"/><circle cx="868.8" cy="284.0" r="1.0" fill="#d0d8ff" fill-opacity="0.67"/><circle cx="563.6" cy="342.4" r="0.45" fill="#d0d8ff" fill-opacity="0.85"/><circle cx="886.5" cy="317.2" r="1.0" fill="#d0d8ff" fill-opacity="0.54"/><circle cx="161.7" cy="219.5" r="0.55" fill="#d0d8ff" fill-opacity="0.64"/><circle cx="785.7" cy="276.2" r="0.45" fill="#d0d8ff" fill-opacity="0.62"/><circle cx="307.8" cy="217.1" r="0.8" fill="#d0d8ff" fill-opacity="0.76"/><circle cx="117.6" cy="92.3" r="0.45" fill="#d0d8ff" fill-opacity="0.36"/><circle cx="348.7" cy="397.8" r="0.65" fill="#d0d8ff" fill-opacity="0.54"/><circle cx="432.9" cy="52.8" r="0.8" fill="#d0d8ff" fill-opacity="0.46"/><circle cx="664.4" cy="269.6" r="0.55" fill="#d0d8ff" fill-opacity="0.51"/><circle cx="725.4" cy="89.9" r="0.65" fill="#d0d8ff" fill-opacity="0.64"/><circle cx="467.3" cy="396.2" r="1.0" fill="#d0d8ff" fill-opacity="0.60"/><circle cx="325.1" cy="228.7" r="0.55" fill="#d0d8ff" fill-opacity="0.21"/><circle cx="0.8" cy="155.8" r="0.65" fill="#d0d8ff" fill-opacity="0.58"/><circle cx="686.6" cy="164.8" r="0.55" fill="#d0d8ff" fill-opacity="0.41"/><circle cx="253.7" cy="262.8" r="0.8" fill="#d0d8ff" fill-opacity="0.54"/><circle cx="821.1" cy="121.0" r="0.65" fill="#d0d8ff" fill-opacity="0.48"/><circle cx="590.7" cy="223.0" r="0.8" fill="#d0d8ff" fill-opacity="0.23"/><circle cx="359.2" cy="25.1" r="0.8" fill="#d0d8ff" fill-opacity="0.69"/><circle cx="412.0" cy="364.5" r="0.55" fill="#d0d8ff" fill-opacity="0.37"/><circle cx="368.4" cy="347.2" r="0.55" fill="#d0d8ff" fill-opacity="0.80"/><circle cx="934.7" cy="511.0" r="0.45" fill="#d0d8ff" fill-opacity="0.58"/><circle cx="636.3" cy="197.7" r="0.8" fill="#d0d8ff" fill-opacity="0.25"/><circle cx="362.7" cy="315.5" r="0.45" fill="#d0d8ff" fill-opacity="0.52"/><circle cx="103.1" cy="338.1" r="0.8" fill="#d0d8ff" fill-opacity="0.81"/><circle cx="396.6" cy="284.2" r="0.8" fill="#d0d8ff" fill-opacity="0.78"/><circle cx="380.1" cy="81.2" r="0.45" fill="#d0d8ff" fill-opacity="0.69"/><circle cx="640.9" cy="444.3" r="0.45" fill="#d0d8ff" fill-opacity="0.46"/><circle cx="885.0" cy="176.4" r="0.8" fill="#d0d8ff" fill-opacity="0.41"/><circle cx="736.0" cy="70.9" r="0.45" fill="#d0d8ff" fill-opacity="0.34"/><circle cx="545.9" cy="9.3" r="0.55" fill="#d0d8ff" fill-opacity="0.52"/><circle cx="539.6" cy="33.0" r="0.65" fill="#d0d8ff" fill-opacity="0.64"/><circle cx="461.5" cy="32.9" r="0.8" fill="#d0d8ff" fill-opacity="0.65"/><circle cx="806.5" cy="84.1" r="0.45" fill="#d0d8ff" fill-opacity="0.46"/><circle cx="833.6" cy="87.3" r="1.0" fill="#d0d8ff" fill-opacity="0.42"/><circle cx="939.0" cy="111.7" r="1.0" fill="#d0d8ff" fill-opacity="0.55"/><circle cx="250.8" cy="187.8" r="0.65" fill="#d0d8ff" fill-opacity="0.37"/><circle cx="531.2" cy="306.6" r="0.45" fill="#d0d8ff" fill-opacity="0.47"/><circle cx="293.3" cy="149.1" r="0.8" fill="#d0d8ff" fill-opacity="0.45"/><circle cx="818.9" cy="154.3" r="0.45" fill="#d0d8ff" fill-opacity="0.33"/><circle cx="198.4" cy="391.4" r="0.8" fill="#d0d8ff" fill-opacity="0.81"/><circle cx="678.6" cy="84.8" r="0.65" fill="#d0d8ff" fill-opacity="0.80"/><circle cx="191.5" cy="551.6" r="0.45" fill="#d0d8ff" fill-opacity="0.56"/><circle cx="697.2" cy="5.1" r="1.0" fill="#d0d8ff" fill-opacity="0.24"/><circle cx="787.2" cy="21.2" r="0.8" fill="#d0d8ff" fill-opacity="0.34"/><circle cx="278.7" cy="426.3" r="1.0" fill="#d0d8ff" fill-opacity="0.72"/><circle cx="583.9" cy="243.6" r="0.55" fill="#d0d8ff" fill-opacity="0.67"/><circle cx="839.4" cy="34.6" r="0.45" fill="#d0d8ff" fill-opacity="0.48"/><circle cx="46.8" cy="517.6" r="1.0" fill="#d0d8ff" fill-opacity="0.25"/><circle cx="475.3" cy="8.5" r="0.55" fill="#d0d8ff" fill-opacity="0.67"/><circle cx="476.3" cy="404.3" r="0.65" fill="#d0d8ff" fill-opacity="0.64"/><circle cx="766.6" cy="320.7" r="0.55" fill="#d0d8ff" fill-opacity="0.30"/><circle cx="493.5" cy="279.4" r="0.45" fill="#d0d8ff" fill-opacity="0.33"/><circle cx="909.0" cy="248.8" r="0.65" fill="#d0d8ff" fill-opacity="0.63"/><circle cx="675.1" cy="265.4" r="0.45" fill="#d0d8ff" fill-opacity="0.48"/><circle cx="883.2" cy="80.0" r="0.8" fill="#d0d8ff" fill-opacity="0.30"/><circle cx="280.7" cy="139.6" r="0.65" fill="#d0d8ff" fill-opacity="0.58"/><circle cx="675.8" cy="431.6" r="0.65" fill="#d0d8ff" fill-opacity="0.40"/><circle cx="310.1" cy="504.8" r="0.55" fill="#d0d8ff" fill-opacity="0.30"/><circle cx="374.3" cy="19.8" r="0.65" fill="#d0d8ff" fill-opacity="0.45"/><circle cx="213.5" cy="327.4" r="0.8" fill="#d0d8ff" fill-opacity="0.26"/><circle cx="142.4" cy="110.4" r="0.8" fill="#d0d8ff" fill-opacity="0.42"/><circle cx="109.3" cy="497.1" r="0.55" fill="#d0d8ff" fill-opacity="0.28"/><circle cx="952.3" cy="563.7" r="0.65" fill="#d0d8ff" fill-opacity="0.54"/><circle cx="468.4" cy="10.7" r="0.45" fill="#d0d8ff" fill-opacity="0.71"/><circle cx="191.7" cy="168.0" r="1.0" fill="#d0d8ff" fill-opacity="0.40"/><circle cx="516.9" cy="53.1" r="0.65" fill="#d0d8ff" fill-opacity="0.29"/><circle cx="734.0" cy="459.0" r="1.0" fill="#d0d8ff" fill-opacity="0.79"/><circle cx="883.9" cy="19.4" r="0.45" fill="#d0d8ff" fill-opacity="0.59"/><circle cx="329.1" cy="566.6" r="0.45" fill="#d0d8ff" fill-opacity="0.63"/><circle cx="164.4" cy="210.1" r="0.65" fill="#d0d8ff" fill-opacity="0.51"/><circle cx="709.7" cy="107.3" r="0.65" fill="#d0d8ff" fill-opacity="0.71"/><circle cx="773.4" cy="434.2" r="1.0" fill="#d0d8ff" fill-opacity="0.50"/><circle cx="108.0" cy="96.8" r="0.45" fill="#d0d8ff" fill-opacity="0.46"/><circle cx="32.2" cy="308.0" r="0.55" fill="#d0d8ff" fill-opacity="0.26"/><circle cx="397.1" cy="502.3" r="0.55" fill="#d0d8ff" fill-opacity="0.25"/><circle cx="343.6" cy="397.6" r="0.45" fill="#d0d8ff" fill-opacity="0.26"/><circle cx="805.2" cy="524.1" r="0.55" fill="#d0d8ff" fill-opacity="0.51"/><circle cx="249.8" cy="63.9" r="0.55" fill="#d0d8ff" fill-opacity="0.36"/><circle cx="474.3" cy="321.6" r="0.8" fill="#d0d8ff" fill-opacity="0.28"/><circle cx="235.1" cy="341.0" r="0.65" fill="#d0d8ff" fill-opacity="0.23"/><circle cx="350.8" cy="118.6" r="0.55" fill="#d0d8ff" fill-opacity="0.46"/><circle cx="944.6" cy="545.0" r="1.0" fill="#d0d8ff" fill-opacity="0.67"/><circle cx="479.7" cy="534.4" r="0.45" fill="#d0d8ff" fill-opacity="0.21"/><circle cx="466.9" cy="474.6" r="0.55" fill="#d0d8ff" fill-opacity="0.57"/><circle cx="83.2" cy="102.8" r="0.45" fill="#d0d8ff" fill-opacity="0.75"/><circle cx="405.3" cy="374.5" r="1.0" fill="#d0d8ff" fill-opacity="0.27"/><circle cx="851.3" cy="50.6" r="0.55" fill="#d0d8ff" fill-opacity="0.58"/><circle cx="232.8" cy="465.0" r="0.45" fill="#d0d8ff" fill-opacity="0.53"/><circle cx="785.2" cy="43.8" r="0.45" fill="#d0d8ff" fill-opacity="0.42"/><circle cx="39.4" cy="370.9" r="0.65" fill="#d0d8ff" fill-opacity="0.65"/><circle cx="327.0" cy="486.3" r="0.55" fill="#d0d8ff" fill-opacity="0.50"/><circle cx="10.3" cy="564.2" r="0.8" fill="#d0d8ff" fill-opacity="0.47"/><circle cx="30.8" cy="473.2" r="1.0" fill="#d0d8ff" fill-opacity="0.30"/><circle cx="648.9" cy="90.7" r="0.55" fill="#d0d8ff" fill-opacity="0.42"/><circle cx="194.8" cy="554.9" r="0.45" fill="#d0d8ff" fill-opacity="0.65"/><circle cx="953.4" cy="475.0" r="0.8" fill="#d0d8ff" fill-opacity="0.51"/><circle cx="502.4" cy="198.0" r="1.0" fill="#d0d8ff" fill-opacity="0.24"/><circle cx="608.4" cy="119.4" r="0.65" fill="#d0d8ff" fill-opacity="0.61"/><circle cx="752.0" cy="55.4" r="0.65" fill="#d0d8ff" fill-opacity="0.67"/><circle cx="557.1" cy="482.0" r="0.8" fill="#d0d8ff" fill-opacity="0.52"/><circle cx="129.0" cy="497.1" r="0.45" fill="#d0d8ff" fill-opacity="0.81"/><circle cx="712.2" cy="499.5" r="1.0" fill="#d0d8ff" fill-opacity="0.72"/><circle cx="157.5" cy="231.5" r="1.0" fill="#d0d8ff" fill-opacity="0.62"/><circle cx="285.8" cy="576.6" r="0.45" fill="#d0d8ff" fill-opacity="0.55"/><circle cx="65.0" cy="469.9" r="0.55" fill="#d0d8ff" fill-opacity="0.72"/><circle cx="229.5" cy="352.6" r="0.8" fill="#d0d8ff" fill-opacity="0.57"/><circle cx="549.7" cy="560.0" r="0.45" fill="#d0d8ff" fill-opacity="0.78"/><circle cx="374.8" cy="470.3" r="0.65" fill="#d0d8ff" fill-opacity="0.72"/><circle cx="789.4" cy="243.7" r="0.65" fill="#d0d8ff" fill-opacity="0.26"/><circle cx="634.1" cy="542.5" r="0.65" fill="#d0d8ff" fill-opacity="0.48"/><circle cx="4.3" cy="293.4" r="0.45" fill="#d0d8ff" fill-opacity="0.21"/><circle cx="839.6" cy="285.2" r="0.65" fill="#d0d8ff" fill-opacity="0.47"/><circle cx="437.4" cy="201.3" r="0.65" fill="#d0d8ff" fill-opacity="0.34"/><circle cx="376.5" cy="279.6" r="0.65" fill="#d0d8ff" fill-opacity="0.22"/><circle cx="84.1" cy="162.6" r="0.8" fill="#d0d8ff" fill-opacity="0.66"/><circle cx="389.5" cy="322.9" r="0.55" fill="#d0d8ff" fill-opacity="0.36"/><circle cx="652.9" cy="24.9" r="0.55" fill="#d0d8ff" fill-opacity="0.73"/><circle cx="372.5" cy="199.6" r="0.55" fill="#d0d8ff" fill-opacity="0.30"/><circle cx="214.3" cy="533.9" r="0.8" fill="#d0d8ff" fill-opacity="0.60"/><circle cx="295.0" cy="191.1" r="1.0" fill="#d0d8ff" fill-opacity="0.77"/><circle cx="181.1" cy="498.4" r="1.0" fill="#d0d8ff" fill-opacity="0.31"/><circle cx="8.7" cy="512.1" r="0.55" fill="#d0d8ff" fill-opacity="0.27"/><circle cx="434.6" cy="485.6" r="0.65" fill="#d0d8ff" fill-opacity="0.36"/><circle cx="646.5" cy="590.7" r="1.0" fill="#d0d8ff" fill-opacity="0.68"/><circle cx="636.8" cy="81.0" r="0.65" fill="#d0d8ff" fill-opacity="0.69"/><circle cx="637.0" cy="45.5" r="0.8" fill="#d0d8ff" fill-opacity="0.61"/><circle cx="254.6" cy="177.5" r="0.8" fill="#d0d8ff" fill-opacity="0.40"/><circle cx="896.6" cy="485.2" r="0.8" fill="#d0d8ff" fill-opacity="0.24"/><circle cx="471.6" cy="414.9" r="0.45" fill="#d0d8ff" fill-opacity="0.21"/><circle cx="532.9" cy="268.6" r="0.55" fill="#d0d8ff" fill-opacity="0.69"/><circle cx="696.8" cy="449.9" r="0.65" fill="#d0d8ff" fill-opacity="0.22"/><circle cx="461.2" cy="4.2" r="0.65" fill="#d0d8ff" fill-opacity="0.81"/><circle cx="138.2" cy="352.5" r="0.45" fill="#d0d8ff" fill-opacity="0.57"/><circle cx="953.8" cy="104.1" r="0.65" fill="#d0d8ff" fill-opacity="0.58"/><circle cx="599.7" cy="145.0" r="0.45" fill="#d0d8ff" fill-opacity="0.70"/><circle cx="402.2" cy="586.9" r="0.8" fill="#d0d8ff" fill-opacity="0.62"/><circle cx="471.3" cy="584.8" r="0.65" fill="#d0d8ff" fill-opacity="0.43"/><circle cx="309.9" cy="500.1" r="0.45" fill="#d0d8ff" fill-opacity="0.52"/><circle cx="758.7" cy="208.3" r="1.0" fill="#d0d8ff" fill-opacity="0.29"/><circle cx="771.9" cy="37.0" r="1.0" fill="#d0d8ff" fill-opacity="0.40"/><circle cx="163.2" cy="187.2" r="0.65" fill="#d0d8ff" fill-opacity="0.23"/><circle cx="928.7" cy="466.2" r="0.55" fill="#d0d8ff" fill-opacity="0.43"/><circle cx="260.4" cy="534.7" r="1.0" fill="#d0d8ff" fill-opacity="0.51"/><circle cx="306.8" cy="263.0" r="0.65" fill="#d0d8ff" fill-opacity="0.27"/><circle cx="345.9" cy="191.8" r="0.8" fill="#d0d8ff" fill-opacity="0.72"/><circle cx="255.1" cy="122.4" r="0.8" fill="#d0d8ff" fill-opacity="0.79"/><circle cx="479.2" cy="245.0" r="0.65" fill="#d0d8ff" fill-opacity="0.30"/><circle cx="42.0" cy="167.3" r="1.0" fill="#d0d8ff" fill-opacity="0.55"/><circle cx="810.8" cy="247.0" r="0.8" fill="#d0d8ff" fill-opacity="0.25"/><circle cx="346.8" cy="550.5" r="0.65" fill="#d0d8ff" fill-opacity="0.54"/><circle cx="814.0" cy="72.7" r="0.45" fill="#d0d8ff" fill-opacity="0.49"/><circle cx="39.5" cy="496.0" r="0.65" fill="#d0d8ff" fill-opacity="0.57"/><circle cx="575.7" cy="215.9" r="0.45" fill="#d0d8ff" fill-opacity="0.84"/><circle cx="837.1" cy="57.8" r="0.8" fill="#d0d8ff" fill-opacity="0.59"/><circle cx="797.7" cy="427.1" r="0.55" fill="#d0d8ff" fill-opacity="0.80"/><circle cx="616.4" cy="580.4" r="0.45" fill="#d0d8ff" fill-opacity="0.61"/><circle cx="740.5" cy="236.7" r="0.65" fill="#d0d8ff" fill-opacity="0.81"/><circle cx="382.4" cy="299.9" r="0.55" fill="#d0d8ff" fill-opacity="0.42"/><circle cx="680.8" cy="86.1" r="0.8" fill="#d0d8ff" fill-opacity="0.68"/><circle cx="640.0" cy="540.9" r="0.65" fill="#d0d8ff" fill-opacity="0.29"/><circle cx="651.9" cy="554.7" r="0.45" fill="#d0d8ff" fill-opacity="0.24"/><circle cx="814.4" cy="400.7" r="0.8" fill="#d0d8ff" fill-opacity="0.58"/><circle cx="204.5" cy="437.3" r="0.55" fill="#d0d8ff" fill-opacity="0.71"/><circle cx="144.5" cy="402.9" r="1.0" fill="#d0d8ff" fill-opacity="0.69"/><circle cx="119.4" cy="169.6" r="0.8" fill="#d0d8ff" fill-opacity="0.22"/><circle cx="840.0" cy="78.8" r="0.8" fill="#d0d8ff" fill-opacity="0.66"/><circle cx="585.4" cy="165.0" r="1.0" fill="#d0d8ff" fill-opacity="0.24"/><circle cx="578.2" cy="305.4" r="0.55" fill="#d0d8ff" fill-opacity="0.59"/><circle cx="295.6" cy="215.8" r="0.45" fill="#d0d8ff" fill-opacity="0.57"/><circle cx="343.9" cy="419.7" r="0.65" fill="#d0d8ff" fill-opacity="0.25"/><circle cx="208.8" cy="274.6" r="0.8" fill="#d0d8ff" fill-opacity="0.70"/><circle cx="263.0" cy="35.5" r="1.0" fill="#d0d8ff" fill-opacity="0.49"/><circle cx="569.5" cy="19.4" r="0.8" fill="#d0d8ff" fill-opacity="0.55"/><circle cx="105.7" cy="134.7" r="0.65" fill="#d0d8ff" fill-opacity="0.61"/><circle cx="922.3" cy="318.4" r="1.0" fill="#d0d8ff" fill-opacity="0.35"/><circle cx="758.6" cy="125.4" r="1.0" fill="#d0d8ff" fill-opacity="0.75"/><circle cx="513.4" cy="18.3" r="0.45" fill="#d0d8ff" fill-opacity="0.71"/><circle cx="775.1" cy="160.8" r="0.65" fill="#d0d8ff" fill-opacity="0.44"/><circle cx="692.7" cy="351.0" r="1.0" fill="#d0d8ff" fill-opacity="0.46"/><circle cx="912.5" cy="245.4" r="0.45" fill="#d0d8ff" fill-opacity="0.63"/><circle cx="768.8" cy="576.8" r="0.65" fill="#d0d8ff" fill-opacity="0.41"/><circle cx="68.2" cy="286.7" r="0.8" fill="#d0d8ff" fill-opacity="0.29"/><circle cx="926.5" cy="528.2" r="0.55" fill="#d0d8ff" fill-opacity="0.60"/><circle cx="326.6" cy="113.9" r="0.65" fill="#d0d8ff" fill-opacity="0.46"/><circle cx="726.1" cy="45.9" r="0.45" fill="#d0d8ff" fill-opacity="0.78"/><circle cx="419.3" cy="118.6" r="0.55" fill="#d0d8ff" fill-opacity="0.66"/><circle cx="739.3" cy="120.7" r="0.65" fill="#d0d8ff" fill-opacity="0.69"/><circle cx="714.8" cy="569.0" r="1.0" fill="#d0d8ff" fill-opacity="0.80"/><circle cx="687.9" cy="37.6" r="0.45" fill="#d0d8ff" fill-opacity="0.33"/><circle cx="798.7" cy="384.9" r="1.0" fill="#d0d8ff" fill-opacity="0.69"/><circle cx="252.2" cy="213.2" r="0.65" fill="#d0d8ff" fill-opacity="0.31"/><circle cx="947.8" cy="183.4" r="0.55" fill="#d0d8ff" fill-opacity="0.23"/><circle cx="660.9" cy="252.6" r="0.8" fill="#d0d8ff" fill-opacity="0.22"/><circle cx="738.7" cy="205.8" r="0.65" fill="#d0d8ff" fill-opacity="0.76"/><circle cx="743.3" cy="282.8" r="0.65" fill="#d0d8ff" fill-opacity="0.84"/><circle cx="759.8" cy="285.7" r="0.55" fill="#d0d8ff" fill-opacity="0.73"/><circle cx="812.6" cy="317.0" r="0.8" fill="#d0d8ff" fill-opacity="0.36"/><circle cx="200.1" cy="151.2" r="0.55" fill="#d0d8ff" fill-opacity="0.21"/><circle cx="679.0" cy="567.2" r="0.8" fill="#d0d8ff" fill-opacity="0.84"/><circle cx="740.3" cy="435.4" r="0.8" fill="#d0d8ff" fill-opacity="0.30"/><circle cx="127.9" cy="7.7" r="1.0" fill="#d0d8ff" fill-opacity="0.34"/><circle cx="507.9" cy="16.6" r="0.45" fill="#d0d8ff" fill-opacity="0.73"/><circle cx="443.3" cy="26.0" r="1.0" fill="#d0d8ff" fill-opacity="0.78"/><circle cx="873.7" cy="515.1" r="1.0" fill="#d0d8ff" fill-opacity="0.42"/><circle cx="846.4" cy="290.7" r="0.55" fill="#d0d8ff" fill-opacity="0.62"/><circle cx="7.0" cy="122.7" r="0.45" fill="#d0d8ff" fill-opacity="0.43"/><circle cx="93.7" cy="526.6" r="0.8" fill="#d0d8ff" fill-opacity="0.81"/><circle cx="436.3" cy="351.3" r="0.8" fill="#d0d8ff" fill-opacity="0.61"/><circle cx="728.2" cy="342.1" r="0.8" fill="#d0d8ff" fill-opacity="0.67"/><circle cx="161.5" cy="391.1" r="0.55" fill="#d0d8ff" fill-opacity="0.76"/><circle cx="685.3" cy="281.7" r="1.0" fill="#d0d8ff" fill-opacity="0.77"/><circle cx="135.5" cy="545.4" r="0.45" fill="#d0d8ff" fill-opacity="0.59"/><circle cx="668.9" cy="480.0" r="0.45" fill="#d0d8ff" fill-opacity="0.78"/><circle cx="375.0" cy="472.8" r="0.45" fill="#d0d8ff" fill-opacity="0.74"/><circle cx="231.9" cy="544.8" r="0.45" fill="#d0d8ff" fill-opacity="0.33"/><circle cx="36.4" cy="29.2" r="0.55" fill="#d0d8ff" fill-opacity="0.36"/><circle cx="741.2" cy="26.5" r="1.0" fill="#d0d8ff" fill-opacity="0.56"/><circle cx="878.8" cy="157.8" r="0.45" fill="#d0d8ff" fill-opacity="0.30"/><circle cx="457.8" cy="573.9" r="0.45" fill="#d0d8ff" fill-opacity="0.69"/><circle cx="178.7" cy="484.2" r="1.0" fill="#d0d8ff" fill-opacity="0.31"/><circle cx="309.0" cy="305.9" r="0.8" fill="#d0d8ff" fill-opacity="0.82"/><circle cx="876.0" cy="1.4" r="1.0" fill="#d0d8ff" fill-opacity="0.75"/><circle cx="619.7" cy="51.4" r="1.0" fill="#d0d8ff" fill-opacity="0.57"/><circle cx="568.4" cy="479.7" r="0.45" fill="#d0d8ff" fill-opacity="0.25"/><circle cx="632.3" cy="369.1" r="0.45" fill="#d0d8ff" fill-opacity="0.50"/><circle cx="535.3" cy="125.1" r="1.0" fill="#d0d8ff" fill-opacity="0.32"/><circle cx="775.8" cy="274.8" r="0.55" fill="#d0d8ff" fill-opacity="0.28"/><circle cx="642.2" cy="590.0" r="0.45" fill="#d0d8ff" fill-opacity="0.60"/><circle cx="522.1" cy="211.5" r="0.55" fill="#d0d8ff" fill-opacity="0.26"/><circle cx="812.3" cy="509.0" r="0.65" fill="#d0d8ff" fill-opacity="0.27"/><circle cx="261.9" cy="185.5" r="0.8" fill="#d0d8ff" fill-opacity="0.39"/><circle cx="579.7" cy="587.1" r="0.45" fill="#d0d8ff" fill-opacity="0.70"/><circle cx="75.4" cy="26.1" r="1.0" fill="#d0d8ff" fill-opacity="0.64"/><circle cx="204.5" cy="231.2" r="1.0" fill="#d0d8ff" fill-opacity="0.84"/><circle cx="549.2" cy="126.5" r="0.45" fill="#d0d8ff" fill-opacity="0.69"/><circle cx="872.7" cy="502.3" r="0.45" fill="#d0d8ff" fill-opacity="0.67"/><circle cx="640.6" cy="81.0" r="0.45" fill="#d0d8ff" fill-opacity="0.79"/><circle cx="171.9" cy="565.6" r="0.55" fill="#d0d8ff" fill-opacity="0.49"/><circle cx="241.5" cy="180.3" r="0.65" fill="#d0d8ff" fill-opacity="0.43"/><circle cx="365.5" cy="97.3" r="0.8" fill="#d0d8ff" fill-opacity="0.31"/><circle cx="728.8" cy="502.1" r="0.65" fill="#d0d8ff" fill-opacity="0.85"/><circle cx="262.1" cy="149.8" r="0.45" fill="#d0d8ff" fill-opacity="0.47"/><circle cx="325.7" cy="326.4" r="0.65" fill="#d0d8ff" fill-opacity="0.43"/><circle cx="1.7" cy="462.6" r="0.65" fill="#d0d8ff" fill-opacity="0.36"/><circle cx="759.6" cy="319.2" r="0.65" fill="#d0d8ff" fill-opacity="0.27"/><circle cx="406.3" cy="202.2" r="0.45" fill="#d0d8ff" fill-opacity="0.24"/><circle cx="923.2" cy="96.7" r="1.0" fill="#d0d8ff" fill-opacity="0.55"/><circle cx="234.2" cy="550.4" r="1.0" fill="#d0d8ff" fill-opacity="0.81"/><circle cx="659.4" cy="580.5" r="0.55" fill="#d0d8ff" fill-opacity="0.26"/><circle cx="208.5" cy="453.0" r="0.65" fill="#d0d8ff" fill-opacity="0.78"/><circle cx="412.4" cy="71.0" r="1.0" fill="#d0d8ff" fill-opacity="0.82"/><circle cx="418.7" cy="412.1" r="0.65" fill="#d0d8ff" fill-opacity="0.65"/><circle cx="720.0" cy="149.1" r="0.45" fill="#d0d8ff" fill-opacity="0.37"/><circle cx="87.7" cy="519.7" r="1.0" fill="#d0d8ff" fill-opacity="0.62"/><circle cx="921.9" cy="386.0" r="0.45" fill="#d0d8ff" fill-opacity="0.58"/><circle cx="571.6" cy="416.9" r="0.45" fill="#d0d8ff" fill-opacity="0.40"/><circle cx="697.5" cy="321.4" r="0.45" fill="#d0d8ff" fill-opacity="0.25"/><circle cx="136.0" cy="67.7" r="1.0" fill="#d0d8ff" fill-opacity="0.52"/><circle cx="657.3" cy="164.1" r="0.55" fill="#d0d8ff" fill-opacity="0.70"/><circle cx="860.3" cy="153.0" r="0.55" fill="#d0d8ff" fill-opacity="0.46"/><circle cx="425.4" cy="437.0" r="0.8" fill="#d0d8ff" fill-opacity="0.26"/><circle cx="327.3" cy="499.4" r="0.55" fill="#d0d8ff" fill-opacity="0.22"/><circle cx="101.9" cy="125.3" r="0.65" fill="#d0d8ff" fill-opacity="0.43"/><circle cx="265.4" cy="5.9" r="0.45" fill="#d0d8ff" fill-opacity="0.32"/><circle cx="151.1" cy="395.5" r="0.65" fill="#d0d8ff" fill-opacity="0.58"/><circle cx="172.7" cy="86.2" r="0.45" fill="#d0d8ff" fill-opacity="0.26"/><circle cx="366.2" cy="391.3" r="0.55" fill="#d0d8ff" fill-opacity="0.57"/><circle cx="59.3" cy="177.5" r="0.55" fill="#d0d8ff" fill-opacity="0.37"/><circle cx="894.9" cy="213.2" r="0.55" fill="#d0d8ff" fill-opacity="0.55"/><circle cx="132.3" cy="472.8" r="0.65" fill="#d0d8ff" fill-opacity="0.36"/><circle cx="158.9" cy="397.9" r="0.55" fill="#d0d8ff" fill-opacity="0.77"/><circle cx="272.7" cy="228.5" r="0.55" fill="#d0d8ff" fill-opacity="0.70"/><circle cx="620.1" cy="532.0" r="0.65" fill="#d0d8ff" fill-opacity="0.70"/><circle cx="230.3" cy="535.7" r="0.45" fill="#d0d8ff" fill-opacity="0.37"/><circle cx="48.3" cy="398.2" r="0.55" fill="#d0d8ff" fill-opacity="0.74"/><circle cx="269.4" cy="283.6" r="0.45" fill="#d0d8ff" fill-opacity="0.52"/><circle cx="439.7" cy="426.9" r="0.45" fill="#d0d8ff" fill-opacity="0.26"/><circle cx="463.6" cy="553.9" r="0.8" fill="#d0d8ff" fill-opacity="0.79"/><circle cx="420.9" cy="71.0" r="0.65" fill="#d0d8ff" fill-opacity="0.24"/><circle cx="424.4" cy="143.4" r="0.45" fill="#d0d8ff" fill-opacity="0.42"/><circle cx="68.4" cy="133.4" r="1.0" fill="#d0d8ff" fill-opacity="0.68"/><circle cx="584.3" cy="599.9" r="0.8" fill="#d0d8ff" fill-opacity="0.80"/><circle cx="105.2" cy="566.2" r="0.55" fill="#d0d8ff" fill-opacity="0.54"/><circle cx="498.6" cy="306.3" r="0.45" fill="#d0d8ff" fill-opacity="0.41"/><circle cx="79.4" cy="159.2" r="0.8" fill="#d0d8ff" fill-opacity="0.80"/><circle cx="750.5" cy="79.0" r="0.65" fill="#d0d8ff" fill-opacity="0.72"/><circle cx="93.6" cy="168.4" r="0.45" fill="#d0d8ff" fill-opacity="0.71"/><circle cx="114.4" cy="590.5" r="0.55" fill="#d0d8ff" fill-opacity="0.51"/><circle cx="487.1" cy="376.5" r="0.45" fill="#d0d8ff" fill-opacity="0.73"/><circle cx="615.2" cy="412.1" r="0.55" fill="#d0d8ff" fill-opacity="0.22"/><circle cx="738.6" cy="398.7" r="0.65" fill="#d0d8ff" fill-opacity="0.29"/><circle cx="138.7" cy="482.2" r="0.45" fill="#d0d8ff" fill-opacity="0.81"/><circle cx="819.6" cy="220.6" r="0.55" fill="#d0d8ff" fill-opacity="0.79"/><circle cx="669.0" cy="9.4" r="0.45" fill="#d0d8ff" fill-opacity="0.50"/><circle cx="429.6" cy="510.1" r="0.55" fill="#d0d8ff" fill-opacity="0.39"/><circle cx="802.3" cy="182.7" r="0.55" fill="#d0d8ff" fill-opacity="0.40"/><circle cx="898.1" cy="241.2" r="0.45" fill="#d0d8ff" fill-opacity="0.64"/><circle cx="344.1" cy="290.5" r="0.65" fill="#d0d8ff" fill-opacity="0.24"/><circle cx="489.1" cy="569.0" r="0.55" fill="#d0d8ff" fill-opacity="0.52"/><circle cx="593.9" cy="129.8" r="0.55" fill="#d0d8ff" fill-opacity="0.74"/><circle cx="296.3" cy="470.6" r="0.65" fill="#d0d8ff" fill-opacity="0.38"/><circle cx="30.4" cy="106.5" r="0.45" fill="#d0d8ff" fill-opacity="0.47"/><circle cx="543.6" cy="462.0" r="0.45" fill="#d0d8ff" fill-opacity="0.35"/><circle cx="148.0" cy="487.0" r="0.8" fill="#d0d8ff" fill-opacity="0.59"/><circle cx="537.2" cy="427.0" r="0.55" fill="#d0d8ff" fill-opacity="0.29"/><circle cx="537.4" cy="164.3" r="0.55" fill="#d0d8ff" fill-opacity="0.47"/><circle cx="954.5" cy="81.2" r="0.45" fill="#d0d8ff" fill-opacity="0.41"/><circle cx="160.4" cy="253.7" r="0.8" fill="#d0d8ff" fill-opacity="0.25"/><circle cx="755.3" cy="151.9" r="0.55" fill="#d0d8ff" fill-opacity="0.57"/><circle cx="822.4" cy="574.2" r="0.8" fill="#d0d8ff" fill-opacity="0.37"/><circle cx="90.7" cy="261.3" r="0.45" fill="#d0d8ff" fill-opacity="0.73"/><circle cx="864.2" cy="42.3" r="0.55" fill="#d0d8ff" fill-opacity="0.69"/><circle cx="832.2" cy="252.1" r="0.65" fill="#d0d8ff" fill-opacity="0.54"/><circle cx="771.5" cy="392.0" r="0.45" fill="#d0d8ff" fill-opacity="0.53"/><circle cx="426.6" cy="299.8" r="0.65" fill="#d0d8ff" fill-opacity="0.54"/><circle cx="859.2" cy="577.4" r="0.45" fill="#d0d8ff" fill-opacity="0.33"/><circle cx="566.1" cy="152.0" r="0.65" fill="#d0d8ff" fill-opacity="0.45"/><circle cx="615.2" cy="247.2" r="0.65" fill="#d0d8ff" fill-opacity="0.82"/><circle cx="647.6" cy="44.1" r="1.0" fill="#d0d8ff" fill-opacity="0.68"/><circle cx="652.4" cy="127.4" r="0.45" fill="#d0d8ff" fill-opacity="0.41"/><circle cx="425.3" cy="204.0" r="0.55" fill="#d0d8ff" fill-opacity="0.69"/><circle cx="445.0" cy="194.6" r="0.8" fill="#d0d8ff" fill-opacity="0.83"/><circle cx="85.0" cy="582.6" r="0.8" fill="#d0d8ff" fill-opacity="0.55"/><circle cx="919.3" cy="540.1" r="0.65" fill="#d0d8ff" fill-opacity="0.35"/><circle cx="363.4" cy="296.6" r="0.55" fill="#d0d8ff" fill-opacity="0.44"/><circle cx="611.6" cy="527.3" r="1.0" fill="#d0d8ff" fill-opacity="0.27"/><circle cx="130.0" cy="243.7" r="0.45" fill="#d0d8ff" fill-opacity="0.47"/><circle cx="448.9" cy="272.5" r="1.0" fill="#d0d8ff" fill-opacity="0.42"/><circle cx="340.0" cy="422.7" r="0.55" fill="#d0d8ff" fill-opacity="0.48"/><circle cx="775.7" cy="415.9" r="0.55" fill="#d0d8ff" fill-opacity="0.64"/><circle cx="376.7" cy="70.3" r="0.65" fill="#d0d8ff" fill-opacity="0.61"/><circle cx="798.8" cy="385.3" r="1.0" fill="#d0d8ff" fill-opacity="0.61"/><circle cx="923.8" cy="117.8" r="0.65" fill="#d0d8ff" fill-opacity="0.70"/><circle cx="620.2" cy="98.0" r="0.8" fill="#d0d8ff" fill-opacity="0.24"/><circle cx="812.3" cy="525.1" r="0.55" fill="#d0d8ff" fill-opacity="0.58"/><circle cx="857.6" cy="357.3" r="1.0" fill="#d0d8ff" fill-opacity="0.47"/><circle cx="260.5" cy="42.0" r="0.55" fill="#d0d8ff" fill-opacity="0.20"/><circle cx="82.0" cy="149.4" r="0.55" fill="#d0d8ff" fill-opacity="0.31"/><circle cx="253.5" cy="426.7" r="0.45" fill="#d0d8ff" fill-opacity="0.84"/><circle cx="22.9" cy="49.5" r="0.55" fill="#d0d8ff" fill-opacity="0.26"/><circle cx="142.1" cy="201.2" r="0.65" fill="#d0d8ff" fill-opacity="0.54"/><circle cx="278.9" cy="448.5" r="0.65" fill="#d0d8ff" fill-opacity="0.77"/><circle cx="52.6" cy="50.4" r="0.45" fill="#d0d8ff" fill-opacity="0.31"/><circle cx="60.6" cy="31.4" r="0.55" fill="#d0d8ff" fill-opacity="0.83"/><circle cx="756.9" cy="437.3" r="0.8" fill="#d0d8ff" fill-opacity="0.42"/><circle cx="134.9" cy="363.1" r="0.45" fill="#d0d8ff" fill-opacity="0.84"/><circle cx="718.2" cy="503.4" r="0.65" fill="#d0d8ff" fill-opacity="0.47"/><circle cx="685.5" cy="137.6" r="0.8" fill="#d0d8ff" fill-opacity="0.72"/><circle cx="90.1" cy="351.7" r="0.8" fill="#d0d8ff" fill-opacity="0.32"/><circle cx="768.6" cy="474.8" r="0.45" fill="#d0d8ff" fill-opacity="0.35"/><circle cx="788.6" cy="283.1" r="0.45" fill="#d0d8ff" fill-opacity="0.48"/><circle cx="184.2" cy="349.5" r="0.8" fill="#d0d8ff" fill-opacity="0.27"/><circle cx="230.3" cy="155.1" r="1.0" fill="#d0d8ff" fill-opacity="0.48"/><circle cx="317.2" cy="34.2" r="0.45" fill="#d0d8ff" fill-opacity="0.35"/><circle cx="211.3" cy="174.5" r="0.8" fill="#d0d8ff" fill-opacity="0.62"/><circle cx="587.7" cy="541.1" r="0.65" fill="#d0d8ff" fill-opacity="0.33"/><circle cx="951.5" cy="539.1" r="0.45" fill="#d0d8ff" fill-opacity="0.29"/><circle cx="216.4" cy="462.8" r="0.65" fill="#d0d8ff" fill-opacity="0.74"/><circle cx="379.1" cy="313.7" r="1.0" fill="#d0d8ff" fill-opacity="0.40"/><circle cx="301.6" cy="176.1" r="0.55" fill="#d0d8ff" fill-opacity="0.41"/><circle cx="144.6" cy="559.0" r="0.8" fill="#d0d8ff" fill-opacity="0.77"/><circle cx="28.9" cy="192.3" r="1.0" fill="#d0d8ff" fill-opacity="0.71"/><circle cx="831.6" cy="411.5" r="0.65" fill="#d0d8ff" fill-opacity="0.51"/><circle cx="741.3" cy="63.7" r="0.8" fill="#d0d8ff" fill-opacity="0.25"/><circle cx="418.1" cy="40.0" r="1.0" fill="#d0d8ff" fill-opacity="0.72"/><circle cx="212.1" cy="190.9" r="0.8" fill="#d0d8ff" fill-opacity="0.51"/><circle cx="736.4" cy="223.0" r="0.65" fill="#d0d8ff" fill-opacity="0.49"/><circle cx="591.5" cy="63.0" r="0.65" fill="#d0d8ff" fill-opacity="0.50"/><circle cx="127.2" cy="514.9" r="1.0" fill="#d0d8ff" fill-opacity="0.81"/><circle cx="123.3" cy="279.5" r="0.65" fill="#d0d8ff" fill-opacity="0.60"/><circle cx="628.7" cy="511.5" r="0.65" fill="#d0d8ff" fill-opacity="0.63"/><circle cx="418.1" cy="51.4" r="0.45" fill="#d0d8ff" fill-opacity="0.46"/><circle cx="684.4" cy="441.6" r="0.55" fill="#d0d8ff" fill-opacity="0.22"/><circle cx="506.7" cy="420.1" r="1.0" fill="#d0d8ff" fill-opacity="0.41"/><circle cx="577.1" cy="243.8" r="0.8" fill="#d0d8ff" fill-opacity="0.36"/><circle cx="731.3" cy="255.5" r="0.45" fill="#d0d8ff" fill-opacity="0.42"/><circle cx="851.9" cy="274.8" r="0.45" fill="#d0d8ff" fill-opacity="0.56"/><circle cx="248.1" cy="444.4" r="0.8" fill="#d0d8ff" fill-opacity="0.78"/><circle cx="452.0" cy="573.8" r="0.65" fill="#d0d8ff" fill-opacity="0.59"/><circle cx="725.4" cy="235.9" r="0.55" fill="#d0d8ff" fill-opacity="0.33"/><circle cx="716.0" cy="549.3" r="1.0" fill="#d0d8ff" fill-opacity="0.52"/><circle cx="323.9" cy="148.8" r="0.8" fill="#d0d8ff" fill-opacity="0.37"/><circle cx="778.3" cy="417.2" r="1.0" fill="#d0d8ff" fill-opacity="0.83"/><circle cx="307.1" cy="103.7" r="0.65" fill="#d0d8ff" fill-opacity="0.68"/><circle cx="652.6" cy="395.8" r="0.45" fill="#d0d8ff" fill-opacity="0.24"/><circle cx="825.1" cy="344.9" r="0.65" fill="#d0d8ff" fill-opacity="0.21"/><circle cx="579.8" cy="539.6" r="0.65" fill="#d0d8ff" fill-opacity="0.82"/><circle cx="217.9" cy="190.7" r="0.65" fill="#d0d8ff" fill-opacity="0.77"/><circle cx="288.3" cy="370.7" r="0.65" fill="#d0d8ff" fill-opacity="0.46"/><circle cx="105.4" cy="136.3" r="0.8" fill="#d0d8ff" fill-opacity="0.79"/><circle cx="723.0" cy="461.8" r="0.55" fill="#d0d8ff" fill-opacity="0.57"/><circle cx="781.0" cy="386.5" r="0.55" fill="#d0d8ff" fill-opacity="0.23"/><circle cx="721.6" cy="487.8" r="0.65" fill="#d0d8ff" fill-opacity="0.36"/><circle cx="363.9" cy="503.8" r="1.0" fill="#d0d8ff" fill-opacity="0.29"/><circle cx="681.9" cy="402.5" r="0.55" fill="#d0d8ff" fill-opacity="0.24"/><circle cx="810.6" cy="527.3" r="1.0" fill="#d0d8ff" fill-opacity="0.29"/><circle cx="623.7" cy="28.8" r="1.0" fill="#d0d8ff" fill-opacity="0.77"/><circle cx="936.1" cy="567.7" r="0.8" fill="#d0d8ff" fill-opacity="0.51"/><circle cx="747.8" cy="521.9" r="0.65" fill="#d0d8ff" fill-opacity="0.34"/><circle cx="345.0" cy="38.4" r="0.45" fill="#d0d8ff" fill-opacity="0.28"/><circle cx="863.3" cy="15.3" r="1.0" fill="#d0d8ff" fill-opacity="0.44"/><circle cx="64.7" cy="444.7" r="0.8" fill="#d0d8ff" fill-opacity="0.33"/><circle cx="611.9" cy="186.7" r="0.8" fill="#d0d8ff" fill-opacity="0.51"/><circle cx="296.2" cy="379.4" r="0.8" fill="#d0d8ff" fill-opacity="0.78"/><circle cx="304.5" cy="207.0" r="0.65" fill="#d0d8ff" fill-opacity="0.75"/><circle cx="548.0" cy="63.5" r="1.0" fill="#d0d8ff" fill-opacity="0.58"/><circle cx="65.4" cy="267.7" r="0.55" fill="#d0d8ff" fill-opacity="0.21"/><circle cx="198.8" cy="217.4" r="0.45" fill="#d0d8ff" fill-opacity="0.44"/><circle cx="626.0" cy="341.0" r="1.0" fill="#d0d8ff" fill-opacity="0.50"/><circle cx="413.3" cy="430.5" r="0.45" fill="#d0d8ff" fill-opacity="0.48"/><circle cx="175.7" cy="174.6" r="0.65" fill="#d0d8ff" fill-opacity="0.53"/><circle cx="97.1" cy="476.3" r="0.45" fill="#d0d8ff" fill-opacity="0.59"/><circle cx="209.4" cy="529.9" r="0.8" fill="#d0d8ff" fill-opacity="0.85"/><circle cx="150.8" cy="382.2" r="0.8" fill="#d0d8ff" fill-opacity="0.25"/><circle cx="192.8" cy="181.1" r="0.55" fill="#d0d8ff" fill-opacity="0.41"/><circle cx="469.7" cy="451.3" r="0.55" fill="#d0d8ff" fill-opacity="0.21"/><circle cx="578.2" cy="226.8" r="0.55" fill="#d0d8ff" fill-opacity="0.74"/><circle cx="175.3" cy="546.1" r="0.45" fill="#d0d8ff" fill-opacity="0.56"/><circle cx="830.3" cy="217.0" r="0.55" fill="#d0d8ff" fill-opacity="0.80"/><circle cx="482.7" cy="540.8" r="0.55" fill="#d0d8ff" fill-opacity="0.75"/><circle cx="488.3" cy="559.6" r="0.55" fill="#d0d8ff" fill-opacity="0.56"/><circle cx="146.5" cy="263.0" r="0.55" fill="#d0d8ff" fill-opacity="0.22"/><circle cx="575.6" cy="155.5" r="0.8" fill="#d0d8ff" fill-opacity="0.38"/><circle cx="206.9" cy="377.1" r="0.45" fill="#d0d8ff" fill-opacity="0.24"/><circle cx="767.4" cy="541.9" r="0.55" fill="#d0d8ff" fill-opacity="0.31"/><circle cx="514.9" cy="139.3" r="0.55" fill="#d0d8ff" fill-opacity="0.73"/><circle cx="576.4" cy="542.5" r="1.0" fill="#d0d8ff" fill-opacity="0.33"/><circle cx="689.8" cy="65.9" r="1.0" fill="#d0d8ff" fill-opacity="0.50"/><circle cx="679.3" cy="163.5" r="1.0" fill="#d0d8ff" fill-opacity="0.74"/><circle cx="50.2" cy="566.5" r="0.45" fill="#d0d8ff" fill-opacity="0.49"/><circle cx="830.3" cy="538.6" r="0.8" fill="#d0d8ff" fill-opacity="0.56"/><circle cx="135.9" cy="276.0" r="1.0" fill="#d0d8ff" fill-opacity="0.62"/><circle cx="321.3" cy="460.0" r="0.55" fill="#d0d8ff" fill-opacity="0.36"/><circle cx="217.7" cy="521.6" r="0.8" fill="#d0d8ff" fill-opacity="0.43"/><circle cx="289.8" cy="97.2" r="0.45" fill="#d0d8ff" fill-opacity="0.34"/><circle cx="136.3" cy="353.8" r="0.65" fill="#d0d8ff" fill-opacity="0.28"/><circle cx="175.5" cy="287.8" r="1.0" fill="#d0d8ff" fill-opacity="0.49"/><circle cx="464.9" cy="566.9" r="0.55" fill="#d0d8ff" fill-opacity="0.51"/><circle cx="451.1" cy="305.4" r="0.55" fill="#d0d8ff" fill-opacity="0.53"/><circle cx="70.1" cy="420.8" r="0.8" fill="#d0d8ff" fill-opacity="0.83"/><circle cx="96.0" cy="440.4" r="0.8" fill="#d0d8ff" fill-opacity="0.42"/><circle cx="617.1" cy="279.2" r="1.0" fill="#d0d8ff" fill-opacity="0.74"/><circle cx="6.1" cy="509.7" r="0.65" fill="#d0d8ff" fill-opacity="0.67"/><circle cx="486.5" cy="427.4" r="0.8" fill="#d0d8ff" fill-opacity="0.64"/><circle cx="592.5" cy="93.9" r="0.45" fill="#d0d8ff" fill-opacity="0.62"/><circle cx="907.5" cy="87.2" r="0.8" fill="#d0d8ff" fill-opacity="0.44"/><circle cx="756.2" cy="354.0" r="0.65" fill="#d0d8ff" fill-opacity="0.64"/><circle cx="765.8" cy="93.8" r="0.55" fill="#d0d8ff" fill-opacity="0.56"/><circle cx="273.1" cy="81.6" r="0.45" fill="#d0d8ff" fill-opacity="0.79"/><circle cx="589.3" cy="483.9" r="0.65" fill="#d0d8ff" fill-opacity="0.49"/><circle cx="347.5" cy="537.1" r="1.0" fill="#d0d8ff" fill-opacity="0.43"/><circle cx="756.9" cy="195.1" r="0.45" fill="#d0d8ff" fill-opacity="0.81"/><circle cx="318.0" cy="232.3" r="0.65" fill="#d0d8ff" fill-opacity="0.60"/><circle cx="16.0" cy="480.0" r="1.0" fill="#d0d8ff" fill-opacity="0.24"/><circle cx="11.5" cy="534.8" r="0.8" fill="#d0d8ff" fill-opacity="0.39"/><circle cx="153.2" cy="414.0" r="0.55" fill="#d0d8ff" fill-opacity="0.21"/><circle cx="200.5" cy="442.0" r="0.65" fill="#d0d8ff" fill-opacity="0.29"/><circle cx="218.0" cy="34.6" r="0.45" fill="#d0d8ff" fill-opacity="0.37"/><circle cx="905.3" cy="330.5" r="0.45" fill="#d0d8ff" fill-opacity="0.80"/><circle cx="738.9" cy="89.1" r="0.45" fill="#d0d8ff" fill-opacity="0.74"/><circle cx="715.1" cy="515.2" r="0.45" fill="#d0d8ff" fill-opacity="0.45"/><circle cx="601.9" cy="425.3" r="0.55" fill="#d0d8ff" fill-opacity="0.32"/><circle cx="933.8" cy="22.9" r="0.45" fill="#d0d8ff" fill-opacity="0.24"/><circle cx="37.3" cy="196.7" r="0.55" fill="#d0d8ff" fill-opacity="0.65"/><circle cx="107.4" cy="97.2" r="1.0" fill="#d0d8ff" fill-opacity="0.32"/><circle cx="342.2" cy="564.7" r="0.45" fill="#d0d8ff" fill-opacity="0.33"/><circle cx="935.9" cy="260.7" r="0.65" fill="#d0d8ff" fill-opacity="0.45"/><circle cx="426.5" cy="289.8" r="0.55" fill="#d0d8ff" fill-opacity="0.22"/><circle cx="158.3" cy="535.7" r="0.45" fill="#d0d8ff" fill-opacity="0.72"/><circle cx="425.9" cy="373.3" r="0.8" fill="#d0d8ff" fill-opacity="0.79"/><circle cx="523.2" cy="530.6" r="0.8" fill="#d0d8ff" fill-opacity="0.21"/><circle cx="842.6" cy="360.6" r="0.8" fill="#d0d8ff" fill-opacity="0.42"/><circle cx="488.9" cy="88.5" r="1.0" fill="#d0d8ff" fill-opacity="0.23"/><circle cx="493.8" cy="298.1" r="0.55" fill="#d0d8ff" fill-opacity="0.65"/><circle cx="660.3" cy="2.8" r="1.0" fill="#d0d8ff" fill-opacity="0.72"/><circle cx="897.4" cy="506.7" r="0.55" fill="#d0d8ff" fill-opacity="0.44"/><circle cx="544.8" cy="437.0" r="0.8" fill="#d0d8ff" fill-opacity="0.47"/><circle cx="913.5" cy="557.4" r="0.65" fill="#d0d8ff" fill-opacity="0.60"/><circle cx="855.7" cy="114.5" r="0.55" fill="#d0d8ff" fill-opacity="0.85"/><circle cx="757.3" cy="472.9" r="1.0" fill="#d0d8ff" fill-opacity="0.73"/><circle cx="657.7" cy="191.0" r="0.65" fill="#d0d8ff" fill-opacity="0.69"/><circle cx="765.8" cy="202.1" r="1.0" fill="#d0d8ff" fill-opacity="0.57"/><circle cx="467.2" cy="165.1" r="0.45" fill="#d0d8ff" fill-opacity="0.80"/><circle cx="470.4" cy="497.2" r="0.8" fill="#d0d8ff" fill-opacity="0.23"/><circle cx="727.6" cy="344.0" r="1.0" fill="#d0d8ff" fill-opacity="0.79"/><circle cx="485.3" cy="423.0" r="1.0" fill="#d0d8ff" fill-opacity="0.20"/><circle cx="742.9" cy="61.7" r="0.45" fill="#d0d8ff" fill-opacity="0.38"/><circle cx="579.5" cy="261.2" r="0.65" fill="#d0d8ff" fill-opacity="0.77"/><circle cx="77.8" cy="269.3" r="0.45" fill="#d0d8ff" fill-opacity="0.44"/><circle cx="472.1" cy="433.1" r="0.65" fill="#d0d8ff" fill-opacity="0.34"/><circle cx="265.7" cy="222.3" r="1.0" fill="#d0d8ff" fill-opacity="0.80"/><circle cx="954.0" cy="256.1" r="0.65" fill="#d0d8ff" fill-opacity="0.57"/><circle cx="436.1" cy="518.2" r="0.8" fill="#d0d8ff" fill-opacity="0.46"/><circle cx="916.1" cy="27.8" r="0.65" fill="#d0d8ff" fill-opacity="0.74"/><circle cx="51.2" cy="593.0" r="0.55" fill="#d0d8ff" fill-opacity="0.55"/><circle cx="336.2" cy="510.8" r="0.65" fill="#d0d8ff" fill-opacity="0.76"/><circle cx="779.1" cy="20.0" r="0.45" fill="#d0d8ff" fill-opacity="0.51"/><circle cx="78.2" cy="474.6" r="0.55" fill="#d0d8ff" fill-opacity="0.77"/><circle cx="444.1" cy="281.4" r="0.65" fill="#d0d8ff" fill-opacity="0.67"/><circle cx="328.1" cy="559.7" r="0.55" fill="#d0d8ff" fill-opacity="0.32"/><circle cx="616.8" cy="454.7" r="1.0" fill="#d0d8ff" fill-opacity="0.62"/><circle cx="248.8" cy="98.5" r="0.55" fill="#d0d8ff" fill-opacity="0.79"/><circle cx="453.0" cy="471.5" r="0.45" fill="#d0d8ff" fill-opacity="0.36"/><circle cx="211.4" cy="543.9" r="0.45" fill="#d0d8ff" fill-opacity="0.60"/><circle cx="603.1" cy="319.8" r="0.8" fill="#d0d8ff" fill-opacity="0.76"/><circle cx="202.9" cy="249.8" r="0.65" fill="#d0d8ff" fill-opacity="0.51"/><circle cx="652.0" cy="446.8" r="0.8" fill="#d0d8ff" fill-opacity="0.35"/><circle cx="459.7" cy="318.0" r="0.65" fill="#d0d8ff" fill-opacity="0.33"/><circle cx="153.4" cy="410.3" r="0.8" fill="#d0d8ff" fill-opacity="0.56"/><circle cx="850.3" cy="549.0" r="0.8" fill="#d0d8ff" fill-opacity="0.78"/><circle cx="471.5" cy="160.7" r="1.0" fill="#d0d8ff" fill-opacity="0.44"/><circle cx="475.6" cy="584.5" r="0.65" fill="#d0d8ff" fill-opacity="0.41"/><circle cx="847.1" cy="220.6" r="0.55" fill="#d0d8ff" fill-opacity="0.82"/><circle cx="476.7" cy="169.6" r="1.0" fill="#d0d8ff" fill-opacity="0.41"/><circle cx="523.4" cy="188.3" r="0.55" fill="#d0d8ff" fill-opacity="0.22"/><circle cx="438.1" cy="574.1" r="0.65" fill="#d0d8ff" fill-opacity="0.50"/><circle cx="538.2" cy="568.9" r="0.65" fill="#d0d8ff" fill-opacity="0.65"/><circle cx="459.6" cy="557.7" r="0.55" fill="#d0d8ff" fill-opacity="0.33"/><circle cx="344.5" cy="362.9" r="0.55" fill="#d0d8ff" fill-opacity="0.40"/><circle cx="678.1" cy="351.9" r="0.55" fill="#d0d8ff" fill-opacity="0.47"/><circle cx="528.8" cy="123.5" r="0.45" fill="#d0d8ff" fill-opacity="0.53"/><circle cx="720.1" cy="142.4" r="0.65" fill="#d0d8ff" fill-opacity="0.27"/><circle cx="885.9" cy="595.3" r="0.45" fill="#d0d8ff" fill-opacity="0.64"/><circle cx="254.8" cy="585.0" r="0.65" fill="#d0d8ff" fill-opacity="0.26"/><circle cx="299.2" cy="341.1" r="0.8" fill="#d0d8ff" fill-opacity="0.21"/><circle cx="334.6" cy="426.1" r="0.55" fill="#d0d8ff" fill-opacity="0.55"/><circle cx="12.5" cy="121.6" r="0.55" fill="#d0d8ff" fill-opacity="0.32"/><circle cx="97.2" cy="559.2" r="1.0" fill="#d0d8ff" fill-opacity="0.37"/><circle cx="914.3" cy="404.9" r="0.45" fill="#d0d8ff" fill-opacity="0.45"/><circle cx="64.3" cy="498.2" r="0.45" fill="#d0d8ff" fill-opacity="0.84"/><circle cx="793.1" cy="535.4" r="0.8" fill="#d0d8ff" fill-opacity="0.53"/><circle cx="348.2" cy="397.1" r="0.45" fill="#d0d8ff" fill-opacity="0.82"/><circle cx="949.9" cy="374.0" r="0.55" fill="#d0d8ff" fill-opacity="0.62"/><circle cx="355.4" cy="219.3" r="0.65" fill="#d0d8ff" fill-opacity="0.29"/><circle cx="243.8" cy="85.0" r="0.55" fill="#d0d8ff" fill-opacity="0.30"/><circle cx="105.5" cy="478.1" r="0.65" fill="#d0d8ff" fill-opacity="0.28"/><circle cx="480.7" cy="344.7" r="0.8" fill="#d0d8ff" fill-opacity="0.56"/><circle cx="442.9" cy="450.0" r="0.55" fill="#d0d8ff" fill-opacity="0.67"/><circle cx="404.1" cy="142.1" r="0.55" fill="#d0d8ff" fill-opacity="0.69"/><circle cx="856.0" cy="214.4" r="0.8" fill="#d0d8ff" fill-opacity="0.70"/><circle cx="563.1" cy="257.6" r="0.45" fill="#d0d8ff" fill-opacity="0.51"/><circle cx="212.5" cy="402.0" r="0.8" fill="#d0d8ff" fill-opacity="0.74"/><circle cx="944.3" cy="143.3" r="0.55" fill="#d0d8ff" fill-opacity="0.22"/><circle cx="189.5" cy="155.9" r="0.45" fill="#d0d8ff" fill-opacity="0.70"/><circle cx="323.9" cy="47.3" r="0.45" fill="#d0d8ff" fill-opacity="0.69"/><circle cx="489.6" cy="562.0" r="0.55" fill="#d0d8ff" fill-opacity="0.36"/><circle cx="164.5" cy="259.2" r="0.45" fill="#d0d8ff" fill-opacity="0.81"/><circle cx="675.1" cy="257.3" r="0.45" fill="#d0d8ff" fill-opacity="0.31"/><circle cx="475.9" cy="593.9" r="0.55" fill="#d0d8ff" fill-opacity="0.68"/><circle cx="782.7" cy="474.1" r="0.45" fill="#d0d8ff" fill-opacity="0.39"/><circle cx="320.6" cy="61.5" r="0.55" fill="#d0d8ff" fill-opacity="0.68"/><circle cx="488.2" cy="100.9" r="0.8" fill="#d0d8ff" fill-opacity="0.64"/><circle cx="247.6" cy="272.3" r="0.8" fill="#d0d8ff" fill-opacity="0.36"/><circle cx="3.4" cy="133.6" r="0.55" fill="#d0d8ff" fill-opacity="0.46"/><circle cx="390.0" cy="321.7" r="0.65" fill="#d0d8ff" fill-opacity="0.39"/><circle cx="320.2" cy="159.7" r="0.55" fill="#d0d8ff" fill-opacity="0.64"/><circle cx="36.2" cy="249.9" r="0.45" fill="#d0d8ff" fill-opacity="0.75"/><circle cx="148.9" cy="42.3" r="0.65" fill="#d0d8ff" fill-opacity="0.55"/><circle cx="879.5" cy="59.9" r="0.8" fill="#d0d8ff" fill-opacity="0.53"/><circle cx="241.9" cy="59.5" r="1.0" fill="#d0d8ff" fill-opacity="0.80"/><circle cx="773.2" cy="175.2" r="0.8" fill="#d0d8ff" fill-opacity="0.81"/><circle cx="121.3" cy="40.3" r="0.45" fill="#d0d8ff" fill-opacity="0.48"/><circle cx="666.8" cy="346.9" r="0.45" fill="#d0d8ff" fill-opacity="0.83"/><circle cx="754.7" cy="474.2" r="0.65" fill="#d0d8ff" fill-opacity="0.25"/><circle cx="229.5" cy="132.6" r="0.65" fill="#d0d8ff" fill-opacity="0.82"/><circle cx="332.7" cy="417.3" r="0.65" fill="#d0d8ff" fill-opacity="0.44"/><circle cx="154.7" cy="262.7" r="0.55" fill="#d0d8ff" fill-opacity="0.32"/><circle cx="87.4" cy="435.7" r="0.55" fill="#d0d8ff" fill-opacity="0.76"/><circle cx="630.0" cy="156.4" r="0.8" fill="#d0d8ff" fill-opacity="0.28"/><circle cx="87.9" cy="132.6" r="0.65" fill="#d0d8ff" fill-opacity="0.30"/><circle cx="80.5" cy="183.6" r="1.0" fill="#d0d8ff" fill-opacity="0.58"/><circle cx="827.0" cy="352.9" r="1.0" fill="#d0d8ff" fill-opacity="0.83"/><circle cx="509.7" cy="186.7" r="0.65" fill="#d0d8ff" fill-opacity="0.33"/><circle cx="120.8" cy="212.8" r="0.55" fill="#d0d8ff" fill-opacity="0.56"/><circle cx="592.3" cy="395.7" r="0.45" fill="#d0d8ff" fill-opacity="0.28"/><circle cx="400.4" cy="398.5" r="1.0" fill="#d0d8ff" fill-opacity="0.32"/><circle cx="280.3" cy="71.3" r="0.8" fill="#d0d8ff" fill-opacity="0.61"/><circle cx="746.7" cy="310.4" r="1.0" fill="#d0d8ff" fill-opacity="0.36"/><circle cx="518.7" cy="326.4" r="0.45" fill="#d0d8ff" fill-opacity="0.39"/><circle cx="782.5" cy="289.5" r="0.55" fill="#d0d8ff" fill-opacity="0.68"/><circle cx="697.2" cy="517.3" r="0.8" fill="#d0d8ff" fill-opacity="0.66"/><circle cx="343.6" cy="452.8" r="0.55" fill="#d0d8ff" fill-opacity="0.68"/><circle cx="789.7" cy="590.0" r="0.65" fill="#d0d8ff" fill-opacity="0.48"/><circle cx="607.3" cy="416.1" r="0.45" fill="#d0d8ff" fill-opacity="0.38"/><circle cx="326.7" cy="245.8" r="1.0" fill="#d0d8ff" fill-opacity="0.48"/><circle cx="501.7" cy="402.1" r="0.55" fill="#d0d8ff" fill-opacity="0.83"/><circle cx="325.4" cy="283.3" r="0.55" fill="#d0d8ff" fill-opacity="0.67"/><circle cx="466.2" cy="221.6" r="0.8" fill="#d0d8ff" fill-opacity="0.38"/><circle cx="41.3" cy="78.7" r="0.8" fill="#d0d8ff" fill-opacity="0.42"/><circle cx="829.5" cy="263.6" r="0.65" fill="#d0d8ff" fill-opacity="0.47"/><circle cx="147.1" cy="384.8" r="0.65" fill="#d0d8ff" fill-opacity="0.66"/><circle cx="268.6" cy="553.2" r="0.65" fill="#d0d8ff" fill-opacity="0.75"/><circle cx="35.1" cy="103.8" r="0.8" fill="#d0d8ff" fill-opacity="0.24"/><circle cx="183.8" cy="463.6" r="0.45" fill="#d0d8ff" fill-opacity="0.44"/><circle cx="106.5" cy="163.0" r="1.0" fill="#d0d8ff" fill-opacity="0.53"/><circle cx="944.9" cy="592.1" r="0.55" fill="#d0d8ff" fill-opacity="0.45"/><circle cx="362.6" cy="6.6" r="0.65" fill="#d0d8ff" fill-opacity="0.44"/><circle cx="318.3" cy="407.7" r="0.55" fill="#d0d8ff" fill-opacity="0.61"/><circle cx="197.8" cy="347.6" r="0.55" fill="#d0d8ff" fill-opacity="0.57"/><circle cx="280.9" cy="120.1" r="0.55" fill="#d0d8ff" fill-opacity="0.76"/><circle cx="223.1" cy="351.6" r="0.65" fill="#d0d8ff" fill-opacity="0.57"/><circle cx="115.9" cy="343.0" r="1.0" fill="#d0d8ff" fill-opacity="0.54"/><circle cx="86.0" cy="276.1" r="0.8" fill="#d0d8ff" fill-opacity="0.35"/><circle cx="297.6" cy="249.9" r="0.55" fill="#d0d8ff" fill-opacity="0.44"/><circle cx="110.9" cy="591.8" r="0.8" fill="#d0d8ff" fill-opacity="0.36"/><circle cx="232.9" cy="352.3" r="0.45" fill="#d0d8ff" fill-opacity="0.45"/><circle cx="496.8" cy="330.1" r="0.8" fill="#d0d8ff" fill-opacity="0.40"/><circle cx="742.0" cy="287.5" r="0.45" fill="#d0d8ff" fill-opacity="0.84"/><circle cx="634.2" cy="277.2" r="0.55" fill="#d0d8ff" fill-opacity="0.59"/><circle cx="743.7" cy="505.3" r="0.8" fill="#d0d8ff" fill-opacity="0.56"/><circle cx="152.8" cy="573.7" r="0.8" fill="#d0d8ff" fill-opacity="0.84"/><circle cx="897.5" cy="526.8" r="0.55" fill="#d0d8ff" fill-opacity="0.40"/><circle cx="662.7" cy="40.5" r="0.55" fill="#d0d8ff" fill-opacity="0.79"/><circle cx="352.7" cy="259.6" r="0.65" fill="#d0d8ff" fill-opacity="0.53"/><circle cx="878.7" cy="208.7" r="0.55" fill="#d0d8ff" fill-opacity="0.44"/><circle cx="95.8" cy="316.7" r="0.65" fill="#d0d8ff" fill-opacity="0.27"/><circle cx="823.3" cy="125.7" r="0.65" fill="#d0d8ff" fill-opacity="0.77"/><circle cx="810.6" cy="361.2" r="0.65" fill="#d0d8ff" fill-opacity="0.56"/><circle cx="271.5" cy="50.7" r="0.65" fill="#d0d8ff" fill-opacity="0.82"/><circle cx="806.3" cy="219.6" r="0.65" fill="#d0d8ff" fill-opacity="0.84"/><circle cx="131.5" cy="404.4" r="0.55" fill="#d0d8ff" fill-opacity="0.27"/><circle cx="399.0" cy="574.1" r="0.8" fill="#d0d8ff" fill-opacity="0.43"/><circle cx="3.5" cy="599.1" r="1.0" fill="#d0d8ff" fill-opacity="0.33"/><circle cx="426.7" cy="243.5" r="0.8" fill="#d0d8ff" fill-opacity="0.35"/><circle cx="157.4" cy="550.1" r="0.45" fill="#d0d8ff" fill-opacity="0.73"/><circle cx="27.5" cy="131.8" r="0.8" fill="#d0d8ff" fill-opacity="0.82"/><circle cx="646.0" cy="298.2" r="0.55" fill="#d0d8ff" fill-opacity="0.51"/><circle cx="517.7" cy="40.5" r="0.55" fill="#d0d8ff" fill-opacity="0.31"/><circle cx="247.3" cy="386.7" r="1.0" fill="#d0d8ff" fill-opacity="0.29"/><circle cx="736.5" cy="395.2" r="0.65" fill="#d0d8ff" fill-opacity="0.77"/><circle cx="526.4" cy="80.4" r="1.0" fill="#d0d8ff" fill-opacity="0.51"/><circle cx="106.4" cy="164.2" r="0.55" fill="#d0d8ff" fill-opacity="0.40"/><circle cx="522.2" cy="370.0" r="1.0" fill="#d0d8ff" fill-opacity="0.71"/><circle cx="796.8" cy="403.1" r="0.65" fill="#d0d8ff" fill-opacity="0.68"/><circle cx="541.8" cy="451.9" r="0.8" fill="#d0d8ff" fill-opacity="0.44"/><circle cx="525.6" cy="98.5" r="0.45" fill="#d0d8ff" fill-opacity="0.24"/><circle cx="77.2" cy="374.8" r="1.0" fill="#d0d8ff" fill-opacity="0.58"/><circle cx="696.1" cy="160.5" r="0.55" fill="#d0d8ff" fill-opacity="0.75"/><circle cx="865.9" cy="569.7" r="1.0" fill="#d0d8ff" fill-opacity="0.22"/><circle cx="851.1" cy="264.0" r="0.8" fill="#d0d8ff" fill-opacity="0.74"/><circle cx="509.3" cy="517.5" r="0.65" fill="#d0d8ff" fill-opacity="0.33"/><circle cx="576.7" cy="79.0" r="0.45" fill="#d0d8ff" fill-opacity="0.44"/><circle cx="21.5" cy="431.7" r="0.65" fill="#d0d8ff" fill-opacity="0.23"/><circle cx="642.0" cy="180.4" r="0.45" fill="#d0d8ff" fill-opacity="0.68"/><circle cx="831.8" cy="593.9" r="0.65" fill="#d0d8ff" fill-opacity="0.49"/><circle cx="528.7" cy="3.3" r="0.65" fill="#d0d8ff" fill-opacity="0.24"/><circle cx="217.6" cy="54.9" r="1.0" fill="#d0d8ff" fill-opacity="0.80"/><circle cx="462.7" cy="360.4" r="0.8" fill="#d0d8ff" fill-opacity="0.77"/><circle cx="668.5" cy="278.4" r="0.8" fill="#d0d8ff" fill-opacity="0.71"/><circle cx="793.0" cy="563.6" r="0.65" fill="#d0d8ff" fill-opacity="0.34"/><circle cx="712.1" cy="498.7" r="0.65" fill="#d0d8ff" fill-opacity="0.36"/><circle cx="378.7" cy="134.4" r="0.65" fill="#d0d8ff" fill-opacity="0.34"/><circle cx="441.2" cy="208.8" r="1.0" fill="#d0d8ff" fill-opacity="0.52"/><circle cx="720.4" cy="447.1" r="0.65" fill="#d0d8ff" fill-opacity="0.77"/><circle cx="383.6" cy="96.0" r="0.8" fill="#d0d8ff" fill-opacity="0.52"/><circle cx="149.4" cy="458.6" r="0.55" fill="#d0d8ff" fill-opacity="0.48"/><circle cx="451.1" cy="304.1" r="0.55" fill="#d0d8ff" fill-opacity="0.71"/><circle cx="624.9" cy="149.2" r="0.45" fill="#d0d8ff" fill-opacity="0.57"/><circle cx="252.1" cy="209.2" r="0.65" fill="#d0d8ff" fill-opacity="0.28"/><circle cx="360.3" cy="347.2" r="0.8" fill="#d0d8ff" fill-opacity="0.34"/><circle cx="772.0" cy="523.4" r="0.55" fill="#d0d8ff" fill-opacity="0.40"/><circle cx="527.9" cy="360.9" r="0.55" fill="#d0d8ff" fill-opacity="0.61"/><circle cx="669.9" cy="102.0" r="0.45" fill="#d0d8ff" fill-opacity="0.64"/><circle cx="751.8" cy="406.9" r="0.8" fill="#d0d8ff" fill-opacity="0.73"/><circle cx="797.7" cy="428.1" r="0.45" fill="#d0d8ff" fill-opacity="0.48"/><circle cx="149.3" cy="103.4" r="0.65" fill="#d0d8ff" fill-opacity="0.78"/><circle cx="211.5" cy="519.9" r="0.55" fill="#d0d8ff" fill-opacity="0.45"/><circle cx="95.4" cy="433.1" r="0.55" fill="#d0d8ff" fill-opacity="0.75"/><circle cx="454.1" cy="322.6" r="1.0" fill="#d0d8ff" fill-opacity="0.49"/><circle cx="464.8" cy="59.5" r="0.55" fill="#d0d8ff" fill-opacity="0.84"/><circle cx="424.8" cy="533.7" r="0.45" fill="#d0d8ff" fill-opacity="0.62"/><circle cx="514.2" cy="130.6" r="0.65" fill="#d0d8ff" fill-opacity="0.71"/><circle cx="602.7" cy="356.7" r="0.55" fill="#d0d8ff" fill-opacity="0.81"/><circle cx="619.7" cy="223.0" r="0.45" fill="#d0d8ff" fill-opacity="0.51"/><circle cx="937.7" cy="94.6" r="0.65" fill="#d0d8ff" fill-opacity="0.40"/><circle cx="526.5" cy="439.8" r="1.0" fill="#d0d8ff" fill-opacity="0.27"/><circle cx="832.1" cy="30.3" r="0.45" fill="#d0d8ff" fill-opacity="0.36"/><circle cx="244.4" cy="500.1" r="0.55" fill="#d0d8ff" fill-opacity="0.37"/><circle cx="239.4" cy="180.1" r="0.65" fill="#d0d8ff" fill-opacity="0.50"/><circle cx="232.0" cy="527.0" r="0.55" fill="#d0d8ff" fill-opacity="0.47"/><circle cx="825.4" cy="68.7" r="0.8" fill="#d0d8ff" fill-opacity="0.69"/><circle cx="666.5" cy="468.2" r="0.55" fill="#d0d8ff" fill-opacity="0.85"/><circle cx="335.3" cy="188.0" r="1.0" fill="#d0d8ff" fill-opacity="0.45"/><circle cx="375.2" cy="187.5" r="1.0" fill="#d0d8ff" fill-opacity="0.25"/><circle cx="715.2" cy="406.1" r="1.0" fill="#d0d8ff" fill-opacity="0.58"/><circle cx="794.3" cy="285.6" r="0.8" fill="#d0d8ff" fill-opacity="0.32"/><circle cx="865.8" cy="492.5" r="0.45" fill="#d0d8ff" fill-opacity="0.34"/><circle cx="535.1" cy="276.8" r="0.55" fill="#d0d8ff" fill-opacity="0.57"/><circle cx="951.5" cy="305.2" r="0.65" fill="#d0d8ff" fill-opacity="0.28"/><circle cx="859.6" cy="258.5" r="0.65" fill="#d0d8ff" fill-opacity="0.21"/><circle cx="599.4" cy="379.2" r="0.8" fill="#d0d8ff" fill-opacity="0.75"/><circle cx="781.9" cy="524.8" r="0.55" fill="#d0d8ff" fill-opacity="0.48"/><circle cx="136.4" cy="235.9" r="0.65" fill="#d0d8ff" fill-opacity="0.20"/><circle cx="20.9" cy="265.0" r="1.0" fill="#d0d8ff" fill-opacity="0.41"/><circle cx="221.3" cy="40.7" r="0.45" fill="#d0d8ff" fill-opacity="0.23"/><circle cx="274.3" cy="474.4" r="1.0" fill="#d0d8ff" fill-opacity="0.40"/><circle cx="658.1" cy="97.4" r="0.45" fill="#d0d8ff" fill-opacity="0.26"/><circle cx="951.8" cy="179.4" r="0.65" fill="#d0d8ff" fill-opacity="0.71"/><circle cx="673.8" cy="369.7" r="0.8" fill="#d0d8ff" fill-opacity="0.61"/><circle cx="855.8" cy="70.7" r="0.8" fill="#d0d8ff" fill-opacity="0.50"/><circle cx="924.7" cy="229.9" r="0.55" fill="#d0d8ff" fill-opacity="0.48"/><circle cx="363.3" cy="119.9" r="0.8" fill="#d0d8ff" fill-opacity="0.51"/><circle cx="375.9" cy="453.2" r="0.45" fill="#d0d8ff" fill-opacity="0.38"/><circle cx="560.5" cy="391.0" r="0.55" fill="#d0d8ff" fill-opacity="0.37"/><circle cx="146.7" cy="233.9" r="0.65" fill="#d0d8ff" fill-opacity="0.60"/><circle cx="145.9" cy="311.5" r="0.65" fill="#d0d8ff" fill-opacity="0.48"/><circle cx="857.9" cy="142.8" r="0.8" fill="#d0d8ff" fill-opacity="0.56"/><circle cx="78.1" cy="368.3" r="0.65" fill="#d0d8ff" fill-opacity="0.63"/><circle cx="870.8" cy="263.9" r="0.45" fill="#d0d8ff" fill-opacity="0.70"/><circle cx="883.5" cy="65.5" r="0.45" fill="#d0d8ff" fill-opacity="0.40"/><circle cx="774.9" cy="218.5" r="0.45" fill="#d0d8ff" fill-opacity="0.72"/><circle cx="15.1" cy="90.7" r="0.45" fill="#d0d8ff" fill-opacity="0.34"/><circle cx="779.2" cy="331.7" r="0.45" fill="#d0d8ff" fill-opacity="0.59"/><circle cx="130.9" cy="492.7" r="0.65" fill="#d0d8ff" fill-opacity="0.47"/><circle cx="560.2" cy="187.7" r="1.0" fill="#d0d8ff" fill-opacity="0.83"/><circle cx="709.5" cy="58.6" r="0.8" fill="#d0d8ff" fill-opacity="0.81"/><circle cx="291.9" cy="35.0" r="0.8" fill="#d0d8ff" fill-opacity="0.27"/><circle cx="61.2" cy="416.1" r="0.65" fill="#d0d8ff" fill-opacity="0.58"/><circle cx="647.8" cy="173.6" r="0.45" fill="#d0d8ff" fill-opacity="0.57"/><circle cx="269.2" cy="351.4" r="0.65" fill="#d0d8ff" fill-opacity="0.39"/><circle cx="610.4" cy="305.5" r="1.0" fill="#d0d8ff" fill-opacity="0.26"/><circle cx="473.9" cy="137.3" r="1.0" fill="#d0d8ff" fill-opacity="0.27"/><circle cx="795.9" cy="174.8" r="0.55" fill="#d0d8ff" fill-opacity="0.40"/><circle cx="394.1" cy="535.5" r="1.0" fill="#d0d8ff" fill-opacity="0.38"/><circle cx="853.3" cy="594.1" r="0.65" fill="#d0d8ff" fill-opacity="0.81"/><circle cx="904.5" cy="513.8" r="0.55" fill="#d0d8ff" fill-opacity="0.72"/><circle cx="953.6" cy="388.6" r="1.0" fill="#d0d8ff" fill-opacity="0.73"/><circle cx="14.6" cy="154.4" r="0.65" fill="#d0d8ff" fill-opacity="0.66"/><circle cx="247.7" cy="369.7" r="0.8" fill="#d0d8ff" fill-opacity="0.33"/><circle cx="166.3" cy="390.4" r="0.45" fill="#d0d8ff" fill-opacity="0.40"/><circle cx="176.3" cy="385.2" r="0.8" fill="#d0d8ff" fill-opacity="0.54"/><circle cx="41.2" cy="114.7" r="0.8" fill="#d0d8ff" fill-opacity="0.82"/><circle cx="655.0" cy="117.4" r="1.0" fill="#d0d8ff" fill-opacity="0.63"/><circle cx="707.9" cy="390.1" r="1.0" fill="#d0d8ff" fill-opacity="0.46"/><circle cx="382.2" cy="237.4" r="0.55" fill="#d0d8ff" fill-opacity="0.45"/><circle cx="922.4" cy="466.5" r="0.8" fill="#d0d8ff" fill-opacity="0.85"/><circle cx="35.0" cy="49.0" r="0.45" fill="#d0d8ff" fill-opacity="0.64"/><circle cx="683.5" cy="563.1" r="0.65" fill="#d0d8ff" fill-opacity="0.74"/><circle cx="852.9" cy="275.5" r="1.0" fill="#d0d8ff" fill-opacity="0.42"/><circle cx="352.2" cy="479.3" r="1.0" fill="#d0d8ff" fill-opacity="0.75"/><circle cx="640.0" cy="102.2" r="1.0" fill="#d0d8ff" fill-opacity="0.30"/><circle cx="506.8" cy="287.0" r="1.0" fill="#d0d8ff" fill-opacity="0.76"/><circle cx="148.0" cy="430.2" r="0.65" fill="#d0d8ff" fill-opacity="0.35"/><circle cx="927.6" cy="173.2" r="0.55" fill="#d0d8ff" fill-opacity="0.25"/><circle cx="377.5" cy="7.3" r="0.8" fill="#d0d8ff" fill-opacity="0.48"/><circle cx="445.8" cy="264.3" r="0.45" fill="#d0d8ff" fill-opacity="0.61"/><circle cx="89.8" cy="567.2" r="0.55" fill="#d0d8ff" fill-opacity="0.46"/><circle cx="23.2" cy="59.7" r="1.0" fill="#d0d8ff" fill-opacity="0.66"/><circle cx="637.4" cy="54.2" r="0.55" fill="#d0d8ff" fill-opacity="0.49"/><circle cx="927.4" cy="223.3" r="0.45" fill="#d0d8ff" fill-opacity="0.84"/><circle cx="731.0" cy="354.5" r="1.0" fill="#d0d8ff" fill-opacity="0.61"/><circle cx="774.0" cy="417.3" r="0.8" fill="#d0d8ff" fill-opacity="0.56"/><circle cx="147.6" cy="323.9" r="0.8" fill="#d0d8ff" fill-opacity="0.37"/><circle cx="153.7" cy="54.0" r="0.65" fill="#d0d8ff" fill-opacity="0.84"/><circle cx="572.8" cy="553.1" r="1.0" fill="#d0d8ff" fill-opacity="0.73"/><circle cx="652.8" cy="28.4" r="1.0" fill="#d0d8ff" fill-opacity="0.53"/><circle cx="97.6" cy="200.0" r="0.65" fill="#d0d8ff" fill-opacity="0.66"/><circle cx="633.4" cy="562.4" r="0.8" fill="#d0d8ff" fill-opacity="0.71"/><circle cx="429.7" cy="280.3" r="0.45" fill="#d0d8ff" fill-opacity="0.57"/><circle cx="658.4" cy="105.2" r="0.55" fill="#d0d8ff" fill-opacity="0.27"/><circle cx="200.3" cy="125.5" r="0.55" fill="#d0d8ff" fill-opacity="0.63"/><circle cx="907.6" cy="598.0" r="0.45" fill="#d0d8ff" fill-opacity="0.49"/><circle cx="603.9" cy="104.1" r="0.55" fill="#d0d8ff" fill-opacity="0.83"/><circle cx="426.4" cy="40.4" r="0.8" fill="#d0d8ff" fill-opacity="0.22"/><circle cx="710.6" cy="302.5" r="0.55" fill="#d0d8ff" fill-opacity="0.26"/><circle cx="812.4" cy="467.9" r="0.55" fill="#d0d8ff" fill-opacity="0.58"/><circle cx="324.5" cy="378.2" r="0.45" fill="#d0d8ff" fill-opacity="0.47"/><circle cx="617.2" cy="303.2" r="1.0" fill="#d0d8ff" fill-opacity="0.41"/><circle cx="753.2" cy="258.7" r="0.45" fill="#d0d8ff" fill-opacity="0.34"/><circle cx="25.7" cy="505.4" r="0.8" fill="#d0d8ff" fill-opacity="0.75"/><circle cx="667.0" cy="579.7" r="1.0" fill="#d0d8ff" fill-opacity="0.74"/><circle cx="361.9" cy="189.4" r="0.65" fill="#d0d8ff" fill-opacity="0.82"/><circle cx="391.4" cy="575.2" r="1.0" fill="#d0d8ff" fill-opacity="0.52"/><circle cx="359.0" cy="295.2" r="0.45" fill="#d0d8ff" fill-opacity="0.46"/><circle cx="476.1" cy="259.3" r="0.45" fill="#d0d8ff" fill-opacity="0.53"/><circle cx="110.7" cy="359.5" r="0.65" fill="#d0d8ff" fill-opacity="0.77"/><circle cx="43.8" cy="527.1" r="0.65" fill="#d0d8ff" fill-opacity="0.63"/><circle cx="639.0" cy="1.7" r="0.55" fill="#d0d8ff" fill-opacity="0.51"/><circle cx="335.9" cy="281.1" r="1.0" fill="#d0d8ff" fill-opacity="0.27"/><circle cx="589.4" cy="199.1" r="1.0" fill="#d0d8ff" fill-opacity="0.55"/><circle cx="381.9" cy="532.3" r="0.45" fill="#d0d8ff" fill-opacity="0.72"/><circle cx="411.5" cy="529.7" r="1.0" fill="#d0d8ff" fill-opacity="0.61"/><circle cx="926.1" cy="374.0" r="1.0" fill="#d0d8ff" fill-opacity="0.51"/><circle cx="43.1" cy="173.7" r="0.55" fill="#d0d8ff" fill-opacity="0.63"/><circle cx="306.3" cy="525.8" r="0.55" fill="#d0d8ff" fill-opacity="0.24"/><circle cx="29.5" cy="388.9" r="0.55" fill="#d0d8ff" fill-opacity="0.72"/><circle cx="700.5" cy="502.3" r="1.0" fill="#d0d8ff" fill-opacity="0.68"/><circle cx="936.4" cy="461.8" r="0.55" fill="#d0d8ff" fill-opacity="0.60"/><circle cx="912.5" cy="467.5" r="0.55" fill="#d0d8ff" fill-opacity="0.82"/><circle cx="420.0" cy="531.8" r="0.55" fill="#d0d8ff" fill-opacity="0.82"/><circle cx="768.1" cy="105.0" r="0.65" fill="#d0d8ff" fill-opacity="0.56"/><circle cx="894.3" cy="11.2" r="0.8" fill="#d0d8ff" fill-opacity="0.38"/><circle cx="50.1" cy="73.3" r="0.45" fill="#d0d8ff" fill-opacity="0.74"/><circle cx="379.7" cy="328.7" r="0.45" fill="#d0d8ff" fill-opacity="0.80"/><circle cx="312.0" cy="42.7" r="0.65" fill="#d0d8ff" fill-opacity="0.45"/><circle cx="517.9" cy="24.3" r="0.8" fill="#d0d8ff" fill-opacity="0.77"/><circle cx="485.0" cy="85.9" r="0.45" fill="#d0d8ff" fill-opacity="0.73"/><circle cx="207.2" cy="563.7" r="0.55" fill="#d0d8ff" fill-opacity="0.73"/><circle cx="862.7" cy="32.5" r="0.65" fill="#d0d8ff" fill-opacity="0.79"/><circle cx="93.3" cy="459.9" r="1.0" fill="#d0d8ff" fill-opacity="0.70"/><circle cx="795.9" cy="590.9" r="0.55" fill="#d0d8ff" fill-opacity="0.41"/><circle cx="880.5" cy="188.1" r="0.55" fill="#d0d8ff" fill-opacity="0.64"/><circle cx="811.5" cy="340.1" r="0.65" fill="#d0d8ff" fill-opacity="0.38"/><circle cx="578.2" cy="110.1" r="0.65" fill="#d0d8ff" fill-opacity="0.60"/><circle cx="850.1" cy="145.4" r="0.45" fill="#d0d8ff" fill-opacity="0.65"/><circle cx="192.8" cy="183.8" r="0.65" fill="#d0d8ff" fill-opacity="0.20"/><circle cx="93.8" cy="169.1" r="0.8" fill="#d0d8ff" fill-opacity="0.70"/><circle cx="770.9" cy="324.2" r="0.45" fill="#d0d8ff" fill-opacity="0.49"/><circle cx="333.6" cy="527.9" r="0.45" fill="#d0d8ff" fill-opacity="0.31"/><circle cx="891.7" cy="4.0" r="0.8" fill="#d0d8ff" fill-opacity="0.79"/><circle cx="79.8" cy="148.1" r="0.8" fill="#d0d8ff" fill-opacity="0.63"/><circle cx="598.3" cy="70.0" r="0.55" fill="#d0d8ff" fill-opacity="0.46"/><circle cx="231.4" cy="473.2" r="0.8" fill="#d0d8ff" fill-opacity="0.66"/><circle cx="508.3" cy="419.6" r="0.8" fill="#d0d8ff" fill-opacity="0.28"/><circle cx="64.1" cy="251.2" r="0.45" fill="#d0d8ff" fill-opacity="0.39"/><circle cx="204.7" cy="195.2" r="0.8" fill="#d0d8ff" fill-opacity="0.38"/><circle cx="290.3" cy="373.5" r="0.45" fill="#d0d8ff" fill-opacity="0.26"/><circle cx="429.9" cy="340.1" r="0.65" fill="#d0d8ff" fill-opacity="0.76"/><circle cx="472.7" cy="237.0" r="0.55" fill="#d0d8ff" fill-opacity="0.35"/><circle cx="488.7" cy="114.5" r="0.8" fill="#d0d8ff" fill-opacity="0.20"/><circle cx="799.1" cy="578.6" r="0.45" fill="#d0d8ff" fill-opacity="0.42"/><circle cx="532.6" cy="434.0" r="0.8" fill="#d0d8ff" fill-opacity="0.25"/><circle cx="631.0" cy="184.6" r="0.65" fill="#d0d8ff" fill-opacity="0.53"/><circle cx="310.2" cy="498.3" r="1.0" fill="#d0d8ff" fill-opacity="0.39"/><circle cx="457.0" cy="578.6" r="0.65" fill="#d0d8ff" fill-opacity="0.29"/><circle cx="612.1" cy="523.5" r="0.45" fill="#d0d8ff" fill-opacity="0.47"/><circle cx="262.5" cy="321.7" r="0.55" fill="#d0d8ff" fill-opacity="0.52"/><circle cx="408.3" cy="12.1" r="0.55" fill="#d0d8ff" fill-opacity="0.85"/><circle cx="667.2" cy="409.4" r="0.55" fill="#d0d8ff" fill-opacity="0.26"/><circle cx="296.5" cy="121.7" r="0.8" fill="#d0d8ff" fill-opacity="0.44"/><circle cx="605.4" cy="219.3" r="0.45" fill="#d0d8ff" fill-opacity="0.27"/><circle cx="294.9" cy="68.9" r="0.8" fill="#d0d8ff" fill-opacity="0.69"/><circle cx="632.1" cy="342.2" r="0.55" fill="#d0d8ff" fill-opacity="0.61"/><circle cx="897.8" cy="354.6" r="0.8" fill="#d0d8ff" fill-opacity="0.55"/><circle cx="315.0" cy="231.3" r="0.8" fill="#d0d8ff" fill-opacity="0.85"/><circle cx="35.5" cy="299.7" r="0.45" fill="#d0d8ff" fill-opacity="0.53"/><circle cx="777.4" cy="33.8" r="0.45" fill="#d0d8ff" fill-opacity="0.39"/><circle cx="850.1" cy="141.8" r="0.8" fill="#d0d8ff" fill-opacity="0.71"/><circle cx="860.6" cy="245.6" r="0.45" fill="#d0d8ff" fill-opacity="0.25"/><circle cx="165.2" cy="124.3" r="0.55" fill="#d0d8ff" fill-opacity="0.26"/><circle cx="878.6" cy="492.0" r="0.45" fill="#d0d8ff" fill-opacity="0.40"/><circle cx="135.4" cy="194.8" r="0.45" fill="#d0d8ff" fill-opacity="0.48"/><circle cx="41.9" cy="292.3" r="0.8" fill="#d0d8ff" fill-opacity="0.22"/><circle cx="598.0" cy="167.5" r="0.55" fill="#d0d8ff" fill-opacity="0.49"/><circle cx="255.2" cy="280.6" r="0.8" fill="#d0d8ff" fill-opacity="0.30"/><circle cx="904.2" cy="540.6" r="0.55" fill="#d0d8ff" fill-opacity="0.69"/><circle cx="569.6" cy="392.4" r="1.0" fill="#d0d8ff" fill-opacity="0.46"/><circle cx="62.3" cy="182.2" r="0.65" fill="#d0d8ff" fill-opacity="0.44"/><circle cx="509.0" cy="383.2" r="0.65" fill="#d0d8ff" fill-opacity="0.27"/><circle cx="367.0" cy="371.7" r="0.45" fill="#d0d8ff" fill-opacity="0.41"/><circle cx="425.1" cy="521.1" r="0.65" fill="#d0d8ff" fill-opacity="0.71"/><circle cx="288.2" cy="139.4" r="0.65" fill="#d0d8ff" fill-opacity="0.66"/><circle cx="199.3" cy="380.2" r="0.8" fill="#d0d8ff" fill-opacity="0.56"/><circle cx="547.8" cy="489.3" r="0.8" fill="#d0d8ff" fill-opacity="0.84"/><circle cx="79.3" cy="519.2" r="0.45" fill="#d0d8ff" fill-opacity="0.57"/><circle cx="563.3" cy="415.5" r="0.65" fill="#d0d8ff" fill-opacity="0.61"/><circle cx="476.0" cy="261.2" r="1.0" fill="#d0d8ff" fill-opacity="0.62"/><circle cx="722.4" cy="293.6" r="0.55" fill="#d0d8ff" fill-opacity="0.22"/><circle cx="311.8" cy="466.5" r="0.65" fill="#d0d8ff" fill-opacity="0.65"/><circle cx="636.3" cy="458.5" r="0.8" fill="#d0d8ff" fill-opacity="0.61"/><circle cx="766.4" cy="374.5" r="0.65" fill="#d0d8ff" fill-opacity="0.75"/><circle cx="511.6" cy="358.7" r="0.55" fill="#d0d8ff" fill-opacity="0.67"/><circle cx="944.4" cy="238.9" r="0.65" fill="#d0d8ff" fill-opacity="0.21"/><circle cx="333.1" cy="437.7" r="0.55" fill="#d0d8ff" fill-opacity="0.58"/><circle cx="395.7" cy="171.2" r="1.0" fill="#d0d8ff" fill-opacity="0.44"/><circle cx="141.2" cy="57.9" r="1.0" fill="#d0d8ff" fill-opacity="0.36"/><circle cx="395.3" cy="385.4" r="0.65" fill="#d0d8ff" fill-opacity="0.50"/><circle cx="731.2" cy="407.2" r="0.65" fill="#d0d8ff" fill-opacity="0.80"/><circle cx="243.7" cy="569.7" r="0.45" fill="#d0d8ff" fill-opacity="0.82"/><circle cx="212.5" cy="137.7" r="0.8" fill="#d0d8ff" fill-opacity="0.71"/><circle cx="251.4" cy="205.3" r="0.65" fill="#d0d8ff" fill-opacity="0.67"/><circle cx="269.5" cy="307.7" r="0.55" fill="#d0d8ff" fill-opacity="0.82"/><circle cx="202.8" cy="70.0" r="0.45" fill="#d0d8ff" fill-opacity="0.44"/><circle cx="485.8" cy="256.3" r="0.8" fill="#d0d8ff" fill-opacity="0.26"/><circle cx="476.9" cy="219.7" r="0.45" fill="#d0d8ff" fill-opacity="0.54"/><circle cx="328.4" cy="550.8" r="1.0" fill="#d0d8ff" fill-opacity="0.71"/><circle cx="173.6" cy="299.3" r="0.55" fill="#d0d8ff" fill-opacity="0.79"/><circle cx="846.6" cy="365.0" r="0.55" fill="#d0d8ff" fill-opacity="0.26"/><circle cx="848.1" cy="20.2" r="0.55" fill="#d0d8ff" fill-opacity="0.66"/><circle cx="125.0" cy="408.4" r="0.8" fill="#d0d8ff" fill-opacity="0.52"/><circle cx="357.0" cy="34.7" r="0.55" fill="#d0d8ff" fill-opacity="0.63"/><circle cx="406.5" cy="589.5" r="0.65" fill="#d0d8ff" fill-opacity="0.32"/><circle cx="39.4" cy="164.5" r="0.55" fill="#d0d8ff" fill-opacity="0.28"/><circle cx="490.5" cy="532.8" r="0.45" fill="#d0d8ff" fill-opacity="0.82"/><circle cx="494.1" cy="89.2" r="0.65" fill="#d0d8ff" fill-opacity="0.44"/><circle cx="207.9" cy="458.9" r="0.8" fill="#d0d8ff" fill-opacity="0.51"/><circle cx="323.1" cy="238.8" r="0.65" fill="#d0d8ff" fill-opacity="0.82"/><circle cx="19.1" cy="294.8" r="0.55" fill="#d0d8ff" fill-opacity="0.52"/><circle cx="521.8" cy="564.7" r="0.8" fill="#d0d8ff" fill-opacity="0.28"/><circle cx="740.1" cy="449.6" r="0.45" fill="#d0d8ff" fill-opacity="0.59"/><circle cx="322.2" cy="89.8" r="1.0" fill="#d0d8ff" fill-opacity="0.32"/><circle cx="691.4" cy="190.4" r="0.8" fill="#d0d8ff" fill-opacity="0.65"/><circle cx="99.7" cy="324.5" r="0.8" fill="#d0d8ff" fill-opacity="0.39"/><circle cx="770.1" cy="277.7" r="0.65" fill="#d0d8ff" fill-opacity="0.38"/><circle cx="287.9" cy="327.1" r="0.8" fill="#d0d8ff" fill-opacity="0.22"/><circle cx="169.8" cy="122.5" r="1.0" fill="#d0d8ff" fill-opacity="0.42"/><circle cx="406.4" cy="584.6" r="0.45" fill="#d0d8ff" fill-opacity="0.82"/><circle cx="505.3" cy="507.5" r="0.55" fill="#d0d8ff" fill-opacity="0.23"/><circle cx="15.1" cy="554.3" r="1.0" fill="#d0d8ff" fill-opacity="0.49"/><circle cx="631.6" cy="151.9" r="0.8" fill="#d0d8ff" fill-opacity="0.80"/><circle cx="882.7" cy="162.3" r="0.55" fill="#d0d8ff" fill-opacity="0.23"/><circle cx="441.0" cy="124.3" r="0.55" fill="#d0d8ff" fill-opacity="0.76"/><circle cx="140.1" cy="538.6" r="1.0" fill="#d0d8ff" fill-opacity="0.63"/><circle cx="257.8" cy="292.0" r="0.45" fill="#d0d8ff" fill-opacity="0.44"/><circle cx="415.6" cy="418.4" r="0.45" fill="#d0d8ff" fill-opacity="0.53"/><circle cx="476.5" cy="350.7" r="0.45" fill="#d0d8ff" fill-opacity="0.75"/><circle cx="387.4" cy="81.6" r="0.55" fill="#d0d8ff" fill-opacity="0.70"/><circle cx="138.8" cy="307.3" r="0.55" fill="#d0d8ff" fill-opacity="0.72"/><circle cx="481.4" cy="558.7" r="0.45" fill="#d0d8ff" fill-opacity="0.38"/><circle cx="228.7" cy="275.9" r="1.0" fill="#d0d8ff" fill-opacity="0.62"/><circle cx="93.6" cy="510.5" r="0.55" fill="#d0d8ff" fill-opacity="0.55"/><circle cx="945.4" cy="129.1" r="0.65" fill="#d0d8ff" fill-opacity="0.21"/><circle cx="221.2" cy="137.1" r="0.55" fill="#d0d8ff" fill-opacity="0.23"/><circle cx="33.1" cy="552.5" r="0.55" fill="#d0d8ff" fill-opacity="0.51"/><circle cx="725.2" cy="181.0" r="0.55" fill="#d0d8ff" fill-opacity="0.67"/><circle cx="136.9" cy="408.8" r="0.8" fill="#d0d8ff" fill-opacity="0.50"/><circle cx="160.4" cy="206.5" r="0.65" fill="#d0d8ff" fill-opacity="0.74"/><circle cx="934.9" cy="71.0" r="0.45" fill="#d0d8ff" fill-opacity="0.34"/><circle cx="112.1" cy="448.6" r="1.0" fill="#d0d8ff" fill-opacity="0.42"/><circle cx="745.2" cy="309.6" r="0.45" fill="#d0d8ff" fill-opacity="0.57"/><circle cx="627.1" cy="353.3" r="0.8" fill="#d0d8ff" fill-opacity="0.52"/><circle cx="547.4" cy="77.4" r="0.8" fill="#d0d8ff" fill-opacity="0.48"/><circle cx="64.0" cy="144.1" r="1.0" fill="#d0d8ff" fill-opacity="0.54"/><circle cx="373.9" cy="256.1" r="1.0" fill="#d0d8ff" fill-opacity="0.44"/><circle cx="86.4" cy="10.2" r="0.8" fill="#d0d8ff" fill-opacity="0.67"/><circle cx="473.9" cy="105.0" r="0.45" fill="#d0d8ff" fill-opacity="0.28"/><circle cx="228.7" cy="9.2" r="0.65" fill="#d0d8ff" fill-opacity="0.77"/><circle cx="831.9" cy="404.1" r="0.55" fill="#d0d8ff" fill-opacity="0.79"/><circle cx="799.7" cy="144.6" r="0.8" fill="#d0d8ff" fill-opacity="0.37"/><circle cx="424.8" cy="70.0" r="0.65" fill="#d0d8ff" fill-opacity="0.32"/><circle cx="109.3" cy="356.2" r="0.8" fill="#d0d8ff" fill-opacity="0.84"/><circle cx="874.7" cy="580.9" r="0.55" fill="#d0d8ff" fill-opacity="0.48"/><circle cx="65.6" cy="485.4" r="0.8" fill="#d0d8ff" fill-opacity="0.63"/><circle cx="753.5" cy="562.0" r="0.55" fill="#d0d8ff" fill-opacity="0.70"/><circle cx="95.3" cy="353.1" r="0.55" fill="#d0d8ff" fill-opacity="0.47"/><circle cx="481.2" cy="430.9" r="1.0" fill="#d0d8ff" fill-opacity="0.85"/><circle cx="218.9" cy="205.6" r="0.65" fill="#d0d8ff" fill-opacity="0.57"/><circle cx="86.3" cy="367.2" r="1.0" fill="#d0d8ff" fill-opacity="0.75"/><circle cx="316.1" cy="566.7" r="0.65" fill="#d0d8ff" fill-opacity="0.82"/><circle cx="833.7" cy="11.4" r="1.0" fill="#d0d8ff" fill-opacity="0.36"/><circle cx="167.5" cy="300.1" r="0.8" fill="#d0d8ff" fill-opacity="0.75"/><circle cx="118.8" cy="336.3" r="0.65" fill="#d0d8ff" fill-opacity="0.31"/><circle cx="512.2" cy="89.3" r="0.65" fill="#d0d8ff" fill-opacity="0.84"/><circle cx="243.5" cy="351.5" r="0.55" fill="#d0d8ff" fill-opacity="0.38"/><circle cx="280.3" cy="420.7" r="1.0" fill="#d0d8ff" fill-opacity="0.34"/><circle cx="158.1" cy="115.4" r="0.55" fill="#d0d8ff" fill-opacity="0.29"/><circle cx="693.3" cy="104.1" r="0.65" fill="#d0d8ff" fill-opacity="0.73"/><circle cx="386.0" cy="285.1" r="0.65" fill="#d0d8ff" fill-opacity="0.46"/><circle cx="863.4" cy="255.3" r="0.65" fill="#d0d8ff" fill-opacity="0.80"/><circle cx="168.5" cy="549.8" r="0.55" fill="#d0d8ff" fill-opacity="0.42"/><circle cx="364.5" cy="162.9" r="0.65" fill="#d0d8ff" fill-opacity="0.29"/><circle cx="954.6" cy="491.4" r="1.0" fill="#d0d8ff" fill-opacity="0.53"/><circle cx="197.8" cy="106.2" r="1.0" fill="#d0d8ff" fill-opacity="0.42"/><circle cx="253.5" cy="404.2" r="0.55" fill="#d0d8ff" fill-opacity="0.69"/><circle cx="65.9" cy="155.9" r="0.65" fill="#d0d8ff" fill-opacity="0.34"/><circle cx="525.8" cy="196.1" r="0.65" fill="#d0d8ff" fill-opacity="0.36"/><circle cx="788.5" cy="472.4" r="0.45" fill="#d0d8ff" fill-opacity="0.64"/><circle cx="667.4" cy="531.0" r="0.45" fill="#d0d8ff" fill-opacity="0.63"/><circle cx="547.5" cy="13.7" r="1.0" fill="#d0d8ff" fill-opacity="0.57"/><circle cx="74.7" cy="377.5" r="0.55" fill="#d0d8ff" fill-opacity="0.76"/><circle cx="231.5" cy="589.0" r="0.65" fill="#d0d8ff" fill-opacity="0.69"/><circle cx="434.4" cy="509.1" r="0.45" fill="#d0d8ff" fill-opacity="0.40"/><circle cx="380.1" cy="467.9" r="1.0" fill="#d0d8ff" fill-opacity="0.71"/><circle cx="284.0" cy="60.5" r="1.0" fill="#d0d8ff" fill-opacity="0.33"/><circle cx="614.7" cy="409.1" r="0.65" fill="#d0d8ff" fill-opacity="0.38"/><circle cx="583.2" cy="140.5" r="0.45" fill="#d0d8ff" fill-opacity="0.71"/><circle cx="585.4" cy="210.0" r="0.8" fill="#d0d8ff" fill-opacity="0.32"/><circle cx="324.8" cy="161.5" r="1.0" fill="#d0d8ff" fill-opacity="0.61"/><circle cx="488.2" cy="107.8" r="0.45" fill="#d0d8ff" fill-opacity="0.77"/><circle cx="528.5" cy="18.4" r="1.0" fill="#d0d8ff" fill-opacity="0.44"/><circle cx="455.4" cy="332.2" r="1.0" fill="#d0d8ff" fill-opacity="0.67"/><circle cx="447.7" cy="25.2" r="0.45" fill="#d0d8ff" fill-opacity="0.74"/><circle cx="621.6" cy="502.0" r="0.45" fill="#d0d8ff" fill-opacity="0.22"/><circle cx="747.5" cy="77.3" r="0.45" fill="#d0d8ff" fill-opacity="0.39"/><circle cx="484.2" cy="94.7" r="0.55" fill="#d0d8ff" fill-opacity="0.78"/><circle cx="518.7" cy="177.1" r="0.8" fill="#d0d8ff" fill-opacity="0.31"/><circle cx="157.5" cy="241.5" r="0.8" fill="#d0d8ff" fill-opacity="0.28"/><circle cx="129.6" cy="194.4" r="0.65" fill="#d0d8ff" fill-opacity="0.36"/><circle cx="765.0" cy="52.7" r="0.8" fill="#d0d8ff" fill-opacity="0.41"/><circle cx="826.3" cy="552.5" r="1.0" fill="#d0d8ff" fill-opacity="0.70"/><circle cx="529.7" cy="376.6" r="1.0" fill="#d0d8ff" fill-opacity="0.76"/><circle cx="244.1" cy="58.5" r="0.65" fill="#d0d8ff" fill-opacity="0.77"/><circle cx="826.0" cy="11.3" r="0.55" fill="#d0d8ff" fill-opacity="0.26"/><circle cx="674.7" cy="477.3" r="0.65" fill="#d0d8ff" fill-opacity="0.72"/><circle cx="303.4" cy="87.3" r="0.45" fill="#d0d8ff" fill-opacity="0.70"/><circle cx="355.2" cy="206.0" r="0.8" fill="#d0d8ff" fill-opacity="0.30"/><circle cx="440.4" cy="487.2" r="0.65" fill="#d0d8ff" fill-opacity="0.42"/><circle cx="677.8" cy="60.8" r="0.45" fill="#d0d8ff" fill-opacity="0.40"/><circle cx="337.7" cy="416.1" r="0.65" fill="#d0d8ff" fill-opacity="0.46"/><circle cx="726.6" cy="333.2" r="0.65" fill="#d0d8ff" fill-opacity="0.44"/><circle cx="131.9" cy="42.2" r="0.45" fill="#d0d8ff" fill-opacity="0.76"/><circle cx="663.3" cy="394.1" r="0.45" fill="#d0d8ff" fill-opacity="0.48"/><circle cx="774.4" cy="317.4" r="1.0" fill="#d0d8ff" fill-opacity="0.56"/><circle cx="172.6" cy="548.1" r="0.55" fill="#d0d8ff" fill-opacity="0.55"/><circle cx="879.4" cy="61.7" r="0.8" fill="#d0d8ff" fill-opacity="0.29"/><circle cx="612.6" cy="484.0" r="0.55" fill="#d0d8ff" fill-opacity="0.65"/><circle cx="49.4" cy="6.4" r="0.55" fill="#d0d8ff" fill-opacity="0.35"/><circle cx="360.8" cy="528.1" r="1.0" fill="#d0d8ff" fill-opacity="0.30"/><circle cx="820.3" cy="455.5" r="1.7" fill="#8090c0" fill-opacity="0.14"/><circle cx="773.3" cy="2.8" r="2.0" fill="#8090c0" fill-opacity="0.07"/><circle cx="302.1" cy="335.4" r="1.9" fill="#8090c0" fill-opacity="0.13"/><circle cx="33.3" cy="261.7" r="1.2" fill="#8090c0" fill-opacity="0.11"/><circle cx="123.5" cy="359.7" r="1.8" fill="#8090c0" fill-opacity="0.08"/><circle cx="622.5" cy="427.1" r="2.2" fill="#8090c0" fill-opacity="0.11"/><circle cx="527.6" cy="330.2" r="1.0" fill="#8090c0" fill-opacity="0.09"/><circle cx="791.7" cy="238.7" r="1.7" fill="#8090c0" fill-opacity="0.05"/><circle cx="471.7" cy="549.4" r="1.6" fill="#8090c0" fill-opacity="0.06"/><circle cx="382.6" cy="139.6" r="1.8" fill="#8090c0" fill-opacity="0.11"/><circle cx="425.2" cy="323.4" r="2.0" fill="#8090c0" fill-opacity="0.13"/><circle cx="554.5" cy="318.2" r="1.6" fill="#8090c0" fill-opacity="0.09"/><circle cx="811.1" cy="591.6" r="1.3" fill="#8090c0" fill-opacity="0.09"/><circle cx="395.2" cy="305.8" r="1.9" fill="#8090c0" fill-opacity="0.10"/><circle cx="879.0" cy="399.7" r="1.3" fill="#8090c0" fill-opacity="0.07"/><circle cx="229.7" cy="204.8" r="1.5" fill="#8090c0" fill-opacity="0.08"/><circle cx="14.5" cy="251.1" r="2.1" fill="#8090c0" fill-opacity="0.12"/><circle cx="372.5" cy="436.5" r="1.9" fill="#8090c0" fill-opacity="0.10"/><circle cx="603.3" cy="101.9" r="1.5" fill="#8090c0" fill-opacity="0.13"/><circle cx="383.6" cy="58.5" r="2.1" fill="#8090c0" fill-opacity="0.08"/><circle cx="608.3" cy="304.1" r="1.0" fill="#8090c0" fill-opacity="0.12"/><circle cx="891.9" cy="520.7" r="1.3" fill="#8090c0" fill-opacity="0.08"/><circle cx="584.3" cy="361.4" r="1.4" fill="#8090c0" fill-opacity="0.10"/><circle cx="874.7" cy="232.4" r="1.9" fill="#8090c0" fill-opacity="0.14"/><circle cx="845.1" cy="198.2" r="1.9" fill="#8090c0" fill-opacity="0.12"/><circle cx="135.9" cy="474.4" r="1.0" fill="#8090c0" fill-opacity="0.13"/><circle cx="821.9" cy="277.0" r="2.2" fill="#8090c0" fill-opacity="0.08"/><circle cx="210.1" cy="301.1" r="1.0" fill="#8090c0" fill-opacity="0.07"/><circle cx="391.1" cy="154.8" r="1.4" fill="#8090c0" fill-opacity="0.10"/><circle cx="71.7" cy="320.0" r="1.8" fill="#8090c0" fill-opacity="0.11"/><circle cx="69.7" cy="333.5" r="1.9" fill="#8090c0" fill-opacity="0.08"/><circle cx="550.3" cy="546.2" r="1.9" fill="#8090c0" fill-opacity="0.08"/><circle cx="23.4" cy="177.2" r="1.0" fill="#8090c0" fill-opacity="0.05"/><circle cx="56.1" cy="331.1" r="1.6" fill="#8090c0" fill-opacity="0.09"/><circle cx="568.2" cy="203.0" r="1.6" fill="#8090c0" fill-opacity="0.07"/><circle cx="93.8" cy="574.8" r="1.9" fill="#8090c0" fill-opacity="0.12"/><circle cx="810.8" cy="269.6" r="1.3" fill="#8090c0" fill-opacity="0.07"/><circle cx="684.0" cy="485.4" r="2.1" fill="#8090c0" fill-opacity="0.08"/><circle cx="783.6" cy="284.6" r="1.9" fill="#8090c0" fill-opacity="0.07"/><circle cx="592.0" cy="344.4" r="2.0" fill="#8090c0" fill-opacity="0.06"/><circle cx="936.4" cy="325.5" r="2.0" fill="#8090c0" fill-opacity="0.06"/><circle cx="762.9" cy="496.2" r="1.4" fill="#8090c0" fill-opacity="0.09"/><circle cx="809.4" cy="177.5" r="1.2" fill="#8090c0" fill-opacity="0.11"/><circle cx="788.0" cy="326.9" r="1.2" fill="#8090c0" fill-opacity="0.09"/><circle cx="566.4" cy="407.6" r="1.9" fill="#8090c0" fill-opacity="0.11"/><circle cx="941.2" cy="16.4" r="2.0" fill="#8090c0" fill-opacity="0.08"/><circle cx="57.6" cy="158.1" r="1.3" fill="#8090c0" fill-opacity="0.06"/><circle cx="431.3" cy="559.2" r="1.8" fill="#8090c0" fill-opacity="0.07"/><circle cx="220.1" cy="59.3" r="1.7" fill="#8090c0" fill-opacity="0.06"/><circle cx="415.7" cy="596.9" r="2.1" fill="#8090c0" fill-opacity="0.12"/><circle cx="450.3" cy="94.5" r="1.5" fill="#8090c0" fill-opacity="0.09"/><circle cx="511.7" cy="407.7" r="1.1" fill="#8090c0" fill-opacity="0.10"/><circle cx="472.3" cy="44.0" r="1.3" fill="#8090c0" fill-opacity="0.12"/><circle cx="815.3" cy="50.4" r="1.8" fill="#8090c0" fill-opacity="0.09"/><circle cx="933.7" cy="226.5" r="1.2" fill="#8090c0" fill-opacity="0.13"/><circle cx="474.3" cy="557.8" r="1.3" fill="#8090c0" fill-opacity="0.06"/><circle cx="573.6" cy="538.4" r="1.2" fill="#8090c0" fill-opacity="0.08"/><circle cx="569.9" cy="488.9" r="1.3" fill="#8090c0" fill-opacity="0.09"/><circle cx="781.5" cy="515.0" r="1.6" fill="#8090c0" fill-opacity="0.09"/><circle cx="515.2" cy="472.8" r="1.2" fill="#8090c0" fill-opacity="0.07"/><circle cx="797.5" cy="198.7" r="1.1" fill="#8090c0" fill-opacity="0.06"/><circle cx="172.3" cy="277.4" r="2.2" fill="#8090c0" fill-opacity="0.13"/><circle cx="448.0" cy="241.9" r="1.7" fill="#8090c0" fill-opacity="0.10"/><circle cx="179.7" cy="590.5" r="2.1" fill="#8090c0" fill-opacity="0.06"/><circle cx="722.4" cy="206.5" r="1.4" fill="#8090c0" fill-opacity="0.07"/><circle cx="620.9" cy="115.6" r="2.1" fill="#8090c0" fill-opacity="0.07"/><circle cx="862.9" cy="564.9" r="2.1" fill="#8090c0" fill-opacity="0.12"/><circle cx="808.2" cy="34.8" r="1.8" fill="#8090c0" fill-opacity="0.05"/><circle cx="676.2" cy="570.6" r="1.0" fill="#8090c0" fill-opacity="0.14"/><circle cx="931.1" cy="501.4" r="1.9" fill="#8090c0" fill-opacity="0.08"/><circle cx="801.6" cy="9.9" r="1.8" fill="#8090c0" fill-opacity="0.11"/><circle cx="431.6" cy="352.7" r="1.2" fill="#8090c0" fill-opacity="0.13"/><circle cx="682.8" cy="278.6" r="1.7" fill="#8090c0" fill-opacity="0.12"/><circle cx="826.1" cy="281.0" r="1.3" fill="#8090c0" fill-opacity="0.13"/><circle cx="17.2" cy="462.5" r="1.1" fill="#8090c0" fill-opacity="0.09"/><circle cx="751.1" cy="314.6" r="2.0" fill="#8090c0" fill-opacity="0.12"/><circle cx="458.5" cy="502.4" r="1.1" fill="#8090c0" fill-opacity="0.13"/><circle cx="257.1" cy="233.7" r="2.1" fill="#8090c0" fill-opacity="0.10"/><circle cx="601.2" cy="573.6" r="1.5" fill="#8090c0" fill-opacity="0.07"/><circle cx="656.1" cy="364.6" r="1.8" fill="#8090c0" fill-opacity="0.10"/><circle cx="663.6" cy="580.1" r="1.7" fill="#8090c0" fill-opacity="0.06"/><circle cx="506.2" cy="380.4" r="1.8" fill="#8090c0" fill-opacity="0.05"/><circle cx="168.5" cy="139.7" r="1.2" fill="#8090c0" fill-opacity="0.14"/><circle cx="374.2" cy="516.1" r="1.4" fill="#8090c0" fill-opacity="0.11"/><circle cx="478.4" cy="495.1" r="1.2" fill="#8090c0" fill-opacity="0.08"/><circle cx="6.8" cy="121.5" r="2.2" fill="#8090c0" fill-opacity="0.07"/><circle cx="430.6" cy="561.8" r="1.3" fill="#8090c0" fill-opacity="0.05"/><circle cx="323.9" cy="232.7" r="1.3" fill="#8090c0" fill-opacity="0.13"/><circle cx="368.0" cy="54.8" r="1.1" fill="#8090c0" fill-opacity="0.10"/><circle cx="464.9" cy="518.3" r="1.1" fill="#8090c0" fill-opacity="0.11"/><circle cx="30.6" cy="22.0" r="1.2" fill="#8090c0" fill-opacity="0.13"/><circle cx="506.0" cy="372.5" r="1.5" fill="#8090c0" fill-opacity="0.07"/><circle cx="330.2" cy="385.2" r="1.4" fill="#8090c0" fill-opacity="0.09"/><circle cx="954.8" cy="269.2" r="2.2" fill="#8090c0" fill-opacity="0.09"/><circle cx="818.5" cy="130.8" r="1.3" fill="#8090c0" fill-opacity="0.08"/><circle cx="864.9" cy="398.7" r="1.7" fill="#8090c0" fill-opacity="0.12"/><circle cx="528.3" cy="389.7" r="1.9" fill="#8090c0" fill-opacity="0.10"/><circle cx="698.2" cy="44.1" r="2.2" fill="#8090c0" fill-opacity="0.12"/><circle cx="612.0" cy="507.2" r="1.2" fill="#8090c0" fill-opacity="0.06"/><circle cx="518.3" cy="219.4" r="2.0" fill="#8090c0" fill-opacity="0.09"/><circle cx="778.6" cy="411.4" r="2.0" fill="#8090c0" fill-opacity="0.06"/><circle cx="251.7" cy="196.1" r="1.2" fill="#8090c0" fill-opacity="0.10"/><circle cx="295.0" cy="356.7" r="1.8" fill="#8090c0" fill-opacity="0.11"/><circle cx="76.7" cy="283.1" r="1.8" fill="#8090c0" fill-opacity="0.12"/><circle cx="462.9" cy="81.5" r="2.1" fill="#8090c0" fill-opacity="0.09"/><circle cx="944.9" cy="3.1" r="1.2" fill="#8090c0" fill-opacity="0.10"/><circle cx="181.4" cy="361.4" r="2.0" fill="#8090c0" fill-opacity="0.10"/><circle cx="628.9" cy="117.4" r="1.7" fill="#8090c0" fill-opacity="0.13"/><circle cx="284.3" cy="531.9" r="1.1" fill="#8090c0" fill-opacity="0.09"/><circle cx="111.0" cy="338.1" r="2.2" fill="#8090c0" fill-opacity="0.13"/><circle cx="934.8" cy="167.0" r="1.2" fill="#8090c0" fill-opacity="0.09"/><circle cx="110.9" cy="249.8" r="1.3" fill="#8090c0" fill-opacity="0.09"/><circle cx="406.0" cy="318.1" r="1.2" fill="#8090c0" fill-opacity="0.13"/><circle cx="143.5" cy="397.2" r="1.2" fill="#8090c0" fill-opacity="0.12"/><circle cx="665.1" cy="595.3" r="1.6" fill="#8090c0" fill-opacity="0.14"/><circle cx="197.7" cy="110.9" r="1.5" fill="#8090c0" fill-opacity="0.09"/><circle cx="663.8" cy="191.6" r="1.8" fill="#8090c0" fill-opacity="0.14"/><circle cx="61.0" cy="557.5" r="1.0" fill="#8090c0" fill-opacity="0.11"/><circle cx="549.3" cy="575.2" r="1.9" fill="#8090c0" fill-opacity="0.06"/><circle cx="353.7" cy="561.1" r="1.5" fill="#8090c0" fill-opacity="0.14"/><circle cx="357.7" cy="438.3" r="1.7" fill="#8090c0" fill-opacity="0.10"/><circle cx="953.6" cy="415.9" r="1.2" fill="#8090c0" fill-opacity="0.11"/><circle cx="869.7" cy="480.6" r="2.1" fill="#8090c0" fill-opacity="0.05"/><circle cx="286.0" cy="122.8" r="1.2" fill="#8090c0" fill-opacity="0.09"/><circle cx="868.5" cy="258.4" r="1.6" fill="#8090c0" fill-opacity="0.12"/><circle cx="68.9" cy="471.7" r="1.5" fill="#8090c0" fill-opacity="0.07"/><circle cx="288.4" cy="581.3" r="1.5" fill="#8090c0" fill-opacity="0.12"/><circle cx="678.9" cy="518.2" r="1.8" fill="#8090c0" fill-opacity="0.05"/><circle cx="475.6" cy="300.3" r="1.8" fill="#8090c0" fill-opacity="0.06"/><circle cx="797.4" cy="179.2" r="1.6" fill="#8090c0" fill-opacity="0.06"/><circle cx="843.0" cy="263.6" r="2.2" fill="#8090c0" fill-opacity="0.09"/><circle cx="264.9" cy="203.0" r="1.7" fill="#8090c0" fill-opacity="0.09"/><circle cx="598.5" cy="51.6" r="1.4" fill="#8090c0" fill-opacity="0.06"/><circle cx="744.7" cy="192.4" r="1.5" fill="#8090c0" fill-opacity="0.10"/><circle cx="784.4" cy="89.5" r="2.2" fill="#8090c0" fill-opacity="0.13"/><circle cx="215.0" cy="198.5" r="1.2" fill="#8090c0" fill-opacity="0.10"/><circle cx="558.3" cy="311.6" r="1.0" fill="#8090c0" fill-opacity="0.10"/><circle cx="799.3" cy="141.5" r="1.8" fill="#8090c0" fill-opacity="0.11"/><circle cx="136.6" cy="599.9" r="1.7" fill="#8090c0" fill-opacity="0.13"/><circle cx="294.8" cy="249.9" r="1.6" fill="#8090c0" fill-opacity="0.08"/><circle cx="482.5" cy="121.2" r="1.6" fill="#8090c0" fill-opacity="0.07"/><circle cx="463.2" cy="106.9" r="1.9" fill="#8090c0" fill-opacity="0.10"/><circle cx="905.6" cy="281.5" r="2.0" fill="#8090c0" fill-opacity="0.14"/><circle cx="483.3" cy="414.0" r="1.3" fill="#8090c0" fill-opacity="0.06"/><circle cx="732.4" cy="60.3" r="1.6" fill="#8090c0" fill-opacity="0.07"/><circle cx="75.0" cy="526.0" r="1.4" fill="#8090c0" fill-opacity="0.13"/><circle cx="872.0" cy="75.8" r="2.0" fill="#8090c0" fill-opacity="0.11"/><circle cx="192.6" cy="298.4" r="1.7" fill="#8090c0" fill-opacity="0.07"/><circle cx="254.4" cy="3.7" r="1.5" fill="#8090c0" fill-opacity="0.12"/><circle cx="694.6" cy="140.7" r="2.0" fill="#8090c0" fill-opacity="0.08"/><circle cx="101.6" cy="174.8" r="2.0" fill="#8090c0" fill-opacity="0.07"/><circle cx="608.6" cy="547.3" r="1.8" fill="#8090c0" fill-opacity="0.11"/><circle cx="874.3" cy="572.2" r="1.2" fill="#8090c0" fill-opacity="0.05"/><circle cx="200.3" cy="472.2" r="1.4" fill="#8090c0" fill-opacity="0.08"/><circle cx="889.7" cy="30.9" r="1.4" fill="#8090c0" fill-opacity="0.09"/><circle cx="220.2" cy="152.6" r="1.2" fill="#8090c0" fill-opacity="0.12"/><circle cx="835.1" cy="68.1" r="1.3" fill="#8090c0" fill-opacity="0.14"/><circle cx="207.0" cy="522.0" r="1.2" fill="#8090c0" fill-opacity="0.08"/><circle cx="309.6" cy="227.3" r="1.2" fill="#8090c0" fill-opacity="0.06"/><circle cx="912.5" cy="241.8" r="1.9" fill="#8090c0" fill-opacity="0.09"/><circle cx="62.3" cy="49.8" r="2.2" fill="#8090c0" fill-opacity="0.06"/><circle cx="707.8" cy="62.7" r="1.3" fill="#8090c0" fill-opacity="0.08"/><circle cx="623.9" cy="463.4" r="2.2" fill="#8090c0" fill-opacity="0.10"/><circle cx="93.6" cy="418.5" r="2.0" fill="#8090c0" fill-opacity="0.06"/><circle cx="486.2" cy="284.3" r="1.9" fill="#8090c0" fill-opacity="0.13"/><circle cx="89.6" cy="196.6" r="1.1" fill="#8090c0" fill-opacity="0.09"/><circle cx="322.6" cy="141.2" r="1.7" fill="#8090c0" fill-opacity="0.10"/><circle cx="44.8" cy="199.5" r="1.4" fill="#8090c0" fill-opacity="0.11"/><circle cx="767.5" cy="494.1" r="2.1" fill="#8090c0" fill-opacity="0.07"/><circle cx="467.5" cy="128.6" r="1.8" fill="#8090c0" fill-opacity="0.05"/><circle cx="128.2" cy="461.0" r="1.8" fill="#8090c0" fill-opacity="0.14"/><circle cx="73.9" cy="105.3" r="1.7" fill="#8090c0" fill-opacity="0.07"/><circle cx="876.7" cy="56.3" r="1.4" fill="#8090c0" fill-opacity="0.07"/><circle cx="938.2" cy="497.2" r="1.2" fill="#8090c0" fill-opacity="0.07"/><circle cx="402.8" cy="304.2" r="1.0" fill="#8090c0" fill-opacity="0.06"/><circle cx="170.6" cy="29.8" r="1.9" fill="#8090c0" fill-opacity="0.08"/><circle cx="699.9" cy="227.2" r="1.5" fill="#8090c0" fill-opacity="0.09"/><circle cx="31.0" cy="546.3" r="1.1" fill="#8090c0" fill-opacity="0.09"/><circle cx="55.3" cy="407.0" r="1.6" fill="#8090c0" fill-opacity="0.08"/><circle cx="576.0" cy="253.7" r="1.1" fill="#8090c0" fill-opacity="0.13"/><circle cx="557.1" cy="7.5" r="1.2" fill="#8090c0" fill-opacity="0.13"/><circle cx="249.6" cy="320.2" r="1.6" fill="#8090c0" fill-opacity="0.13"/><circle cx="871.9" cy="55.6" r="1.1" fill="#8090c0" fill-opacity="0.06"/><circle cx="27.8" cy="520.1" r="1.5" fill="#8090c0" fill-opacity="0.12"/><circle cx="229.1" cy="197.7" r="1.2" fill="#8090c0" fill-opacity="0.08"/><circle cx="649.6" cy="222.8" r="1.4" fill="#8090c0" fill-opacity="0.10"/><circle cx="595.0" cy="15.6" r="2.1" fill="#8090c0" fill-opacity="0.08"/><circle cx="589.9" cy="157.9" r="1.4" fill="#8090c0" fill-opacity="0.08"/><circle cx="219.5" cy="53.5" r="1.6" fill="#8090c0" fill-opacity="0.12"/><circle cx="111.9" cy="309.7" r="2.0" fill="#8090c0" fill-opacity="0.08"/><circle cx="618.0" cy="293.4" r="1.6" fill="#8090c0" fill-opacity="0.11"/><circle cx="402.5" cy="10.7" r="1.4" fill="#8090c0" fill-opacity="0.05"/><circle cx="51.2" cy="567.9" r="1.5" fill="#8090c0" fill-opacity="0.08"/><circle cx="918.0" cy="51.8" r="1.0" fill="#8090c0" fill-opacity="0.10"/><circle cx="341.9" cy="149.9" r="1.2" fill="#8090c0" fill-opacity="0.09"/><circle cx="357.0" cy="228.6" r="1.1" fill="#8090c0" fill-opacity="0.11"/><circle cx="41.4" cy="229.8" r="1.6" fill="#8090c0" fill-opacity="0.05"/><circle cx="140.3" cy="206.9" r="1.8" fill="#8090c0" fill-opacity="0.06"/><circle cx="741.4" cy="115.5" r="2.0" fill="#8090c0" fill-opacity="0.14"/><circle cx="872.8" cy="577.5" r="2.2" fill="#8090c0" fill-opacity="0.07"/><circle cx="918.1" cy="247.2" r="1.8" fill="#8090c0" fill-opacity="0.07"/><circle cx="554.8" cy="215.5" r="1.1" fill="#8090c0" fill-opacity="0.13"/><circle cx="809.0" cy="465.7" r="1.5" fill="#8090c0" fill-opacity="0.13"/><circle cx="581.5" cy="196.7" r="1.9" fill="#8090c0" fill-opacity="0.13"/><circle cx="859.6" cy="426.5" r="2.1" fill="#8090c0" fill-opacity="0.13"/><circle cx="206.6" cy="85.5" r="1.1" fill="#8090c0" fill-opacity="0.12"/><circle cx="556.2" cy="227.2" r="1.4" fill="#8090c0" fill-opacity="0.14"/><circle cx="307.1" cy="543.8" r="1.9" fill="#8090c0" fill-opacity="0.13"/><circle cx="698.3" cy="85.8" r="1.6" fill="#8090c0" fill-opacity="0.07"/><circle cx="286.0" cy="133.2" r="1.7" fill="#8090c0" fill-opacity="0.13"/><circle cx="293.6" cy="323.5" r="1.2" fill="#8090c0" fill-opacity="0.08"/><circle cx="347.4" cy="227.3" r="1.9" fill="#8090c0" fill-opacity="0.09"/><circle cx="56.8" cy="525.1" r="1.8" fill="#8090c0" fill-opacity="0.06"/><circle cx="90.8" cy="89.4" r="2.2" fill="#8090c0" fill-opacity="0.08"/><circle cx="955.4" cy="570.1" r="1.5" fill="#8090c0" fill-opacity="0.12"/><circle cx="198.8" cy="350.4" r="1.1" fill="#8090c0" fill-opacity="0.09"/><circle cx="633.9" cy="175.6" r="1.1" fill="#8090c0" fill-opacity="0.12"/><circle cx="798.2" cy="279.1" r="1.2" fill="#8090c0" fill-opacity="0.14"/><circle cx="627.1" cy="405.4" r="1.5" fill="#8090c0" fill-opacity="0.07"/><circle cx="486.5" cy="43.2" r="1.4" fill="#8090c0" fill-opacity="0.09"/><circle cx="231.5" cy="263.2" r="1.1" fill="#8090c0" fill-opacity="0.06"/><circle cx="940.9" cy="392.3" r="1.4" fill="#8090c0" fill-opacity="0.12"/><circle cx="797.4" cy="507.2" r="1.3" fill="#8090c0" fill-opacity="0.05"/><circle cx="353.1" cy="333.0" r="1.9" fill="#8090c0" fill-opacity="0.10"/><circle cx="254.8" cy="261.3" r="1.6" fill="#8090c0" fill-opacity="0.09"/><circle cx="50.6" cy="43.5" r="1.2" fill="#8090c0" fill-opacity="0.06"/><circle cx="641.3" cy="504.5" r="2.0" fill="#8090c0" fill-opacity="0.06"/><circle cx="21.6" cy="374.6" r="1.8" fill="#8090c0" fill-opacity="0.08"/><circle cx="577.2" cy="121.7" r="1.1" fill="#8090c0" fill-opacity="0.08"/><circle cx="516.6" cy="73.3" r="1.6" fill="#8090c0" fill-opacity="0.07"/><circle cx="912.3" cy="512.9" r="2.0" fill="#8090c0" fill-opacity="0.11"/><circle cx="574.6" cy="146.8" r="1.8" fill="#8090c0" fill-opacity="0.11"/><circle cx="204.0" cy="591.9" r="1.4" fill="#8090c0" fill-opacity="0.08"/><circle cx="752.8" cy="218.9" r="1.7" fill="#8090c0" fill-opacity="0.07"/><circle cx="752.2" cy="334.1" r="1.9" fill="#8090c0" fill-opacity="0.10"/><circle cx="470.5" cy="113.1" r="1.9" fill="#8090c0" fill-opacity="0.10"/><circle cx="953.2" cy="8.5" r="1.7" fill="#8090c0" fill-opacity="0.07"/><circle cx="304.5" cy="308.3" r="1.6" fill="#8090c0" fill-opacity="0.06"/><circle cx="828.0" cy="221.9" r="2.1" fill="#8090c0" fill-opacity="0.06"/><circle cx="338.2" cy="112.7" r="1.6" fill="#8090c0" fill-opacity="0.13"/><circle cx="926.0" cy="474.3" r="1.7" fill="#8090c0" fill-opacity="0.13"/><circle cx="66.0" cy="288.8" r="1.9" fill="#8090c0" fill-opacity="0.07"/><circle cx="460.2" cy="322.9" r="1.1" fill="#8090c0" fill-opacity="0.09"/><circle cx="696.6" cy="347.1" r="1.2" fill="#8090c0" fill-opacity="0.14"/><circle cx="349.3" cy="41.5" r="1.3" fill="#8090c0" fill-opacity="0.13"/><circle cx="523.0" cy="491.4" r="1.7" fill="#8090c0" fill-opacity="0.11"/><circle cx="660.1" cy="599.8" r="1.2" fill="#8090c0" fill-opacity="0.10"/><circle cx="81.6" cy="243.7" r="1.1" fill="#8090c0" fill-opacity="0.09"/><circle cx="865.8" cy="514.3" r="1.8" fill="#8090c0" fill-opacity="0.14"/><circle cx="525.7" cy="512.8" r="1.6" fill="#8090c0" fill-opacity="0.06"/><circle cx="442.6" cy="427.5" r="1.4" fill="#8090c0" fill-opacity="0.12"/><circle cx="816.0" cy="36.7" r="1.6" fill="#8090c0" fill-opacity="0.11"/><circle cx="746.7" cy="553.8" r="1.2" fill="#8090c0" fill-opacity="0.08"/><circle cx="331.7" cy="496.3" r="1.2" fill="#8090c0" fill-opacity="0.13"/><circle cx="878.1" cy="128.9" r="1.6" fill="#8090c0" fill-opacity="0.06"/><circle cx="856.3" cy="295.1" r="1.8" fill="#8090c0" fill-opacity="0.08"/><circle cx="213.9" cy="350.3" r="1.4" fill="#8090c0" fill-opacity="0.11"/><circle cx="931.2" cy="253.1" r="1.4" fill="#8090c0" fill-opacity="0.09"/><circle cx="333.9" cy="367.8" r="2.1" fill="#8090c0" fill-opacity="0.12"/><circle cx="223.5" cy="505.0" r="2.0" fill="#8090c0" fill-opacity="0.13"/><circle cx="442.8" cy="420.4" r="1.9" fill="#8090c0" fill-opacity="0.12"/><circle cx="80.1" cy="43.9" r="1.6" fill="#8090c0" fill-opacity="0.13"/><circle cx="731.8" cy="326.4" r="1.9" fill="#8090c0" fill-opacity="0.13"/><circle cx="454.7" cy="559.9" r="1.1" fill="#8090c0" fill-opacity="0.06"/><circle cx="382.0" cy="37.5" r="2.1" fill="#8090c0" fill-opacity="0.08"/><circle cx="949.3" cy="594.5" r="1.0" fill="#8090c0" fill-opacity="0.13"/><circle cx="61.7" cy="530.3" r="1.3" fill="#8090c0" fill-opacity="0.08"/><circle cx="925.3" cy="273.5" r="1.2" fill="#8090c0" fill-opacity="0.09"/><circle cx="818.6" cy="115.2" r="1.4" fill="#8090c0" fill-opacity="0.08"/><circle cx="257.2" cy="188.1" r="1.2" fill="#8090c0" fill-opacity="0.10"/><circle cx="638.3" cy="296.0" r="1.2" fill="#8090c0" fill-opacity="0.08"/><circle cx="409.8" cy="349.3" r="1.9" fill="#8090c0" fill-opacity="0.12"/><circle cx="623.1" cy="25.0" r="1.1" fill="#8090c0" fill-opacity="0.13"/><circle cx="149.1" cy="462.0" r="1.1" fill="#8090c0" fill-opacity="0.06"/><circle cx="892.9" cy="455.1" r="1.8" fill="#8090c0" fill-opacity="0.08"/><circle cx="489.9" cy="116.4" r="1.1" fill="#8090c0" fill-opacity="0.07"/><circle cx="132.2" cy="306.5" r="2.2" fill="#8090c0" fill-opacity="0.10"/><circle cx="342.8" cy="308.6" r="1.4" fill="#8090c0" fill-opacity="0.14"/><circle cx="672.7" cy="22.4" r="1.8" fill="#8090c0" fill-opacity="0.10"/><circle cx="369.3" cy="425.6" r="2.1" fill="#8090c0" fill-opacity="0.05"/><circle cx="898.6" cy="463.6" r="1.8" fill="#8090c0" fill-opacity="0.12"/><circle cx="889.2" cy="32.4" r="1.8" fill="#8090c0" fill-opacity="0.10"/><circle cx="128.3" cy="514.1" r="2.2" fill="#8090c0" fill-opacity="0.10"/><circle cx="371.7" cy="499.9" r="1.3" fill="#8090c0" fill-opacity="0.14"/><circle cx="107.7" cy="336.3" r="1.5" fill="#8090c0" fill-opacity="0.07"/><circle cx="391.6" cy="473.9" r="2.0" fill="#8090c0" fill-opacity="0.14"/><circle cx="204.6" cy="567.9" r="1.1" fill="#8090c0" fill-opacity="0.06"/><circle cx="758.3" cy="351.8" r="1.6" fill="#8090c0" fill-opacity="0.05"/><circle cx="435.4" cy="234.2" r="1.6" fill="#8090c0" fill-opacity="0.06"/><circle cx="408.0" cy="345.0" r="1.6" fill="#8090c0" fill-opacity="0.05"/><circle cx="352.9" cy="300.3" r="1.7" fill="#8090c0" fill-opacity="0.10"/><circle cx="227.8" cy="296.1" r="1.1" fill="#8090c0" fill-opacity="0.06"/><circle cx="139.9" cy="318.6" r="1.0" fill="#8090c0" fill-opacity="0.09"/><circle cx="594.6" cy="350.3" r="2.1" fill="#8090c0" fill-opacity="0.08"/><circle cx="413.2" cy="503.2" r="1.7" fill="#8090c0" fill-opacity="0.07"/><circle cx="934.4" cy="144.4" r="1.7" fill="#8090c0" fill-opacity="0.10"/><circle cx="121.9" cy="22.1" r="1.7" fill="#8090c0" fill-opacity="0.06"/><circle cx="357.6" cy="457.1" r="2.1" fill="#8090c0" fill-opacity="0.12"/><circle cx="24.6" cy="216.1" r="1.9" fill="#8090c0" fill-opacity="0.06"/><circle cx="398.6" cy="112.1" r="1.2" fill="#8090c0" fill-opacity="0.11"/><circle cx="745.2" cy="265.7" r="1.8" fill="#8090c0" fill-opacity="0.06"/><circle cx="463.0" cy="223.5" r="1.7" fill="#8090c0" fill-opacity="0.10"/><circle cx="721.0" cy="416.0" r="1.7" fill="#8090c0" fill-opacity="0.08"/><circle cx="446.4" cy="121.2" r="1.2" fill="#8090c0" fill-opacity="0.09"/><circle cx="197.8" cy="366.4" r="2.2" fill="#8090c0" fill-opacity="0.07"/><circle cx="396.7" cy="497.3" r="1.6" fill="#8090c0" fill-opacity="0.05"/><circle cx="381.6" cy="526.2" r="1.5" fill="#8090c0" fill-opacity="0.09"/><circle cx="819.8" cy="449.5" r="1.9" fill="#8090c0" fill-opacity="0.07"/><circle cx="333.1" cy="472.2" r="1.3" fill="#8090c0" fill-opacity="0.06"/><circle cx="889.3" cy="55.1" r="1.4" fill="#8090c0" fill-opacity="0.13"/><circle cx="86.4" cy="86.1" r="1.8" fill="#8090c0" fill-opacity="0.13"/><circle cx="309.7" cy="398.5" r="1.2" fill="#8090c0" fill-opacity="0.14"/><circle cx="534.1" cy="501.1" r="1.1" fill="#8090c0" fill-opacity="0.11"/><circle cx="9.8" cy="359.3" r="2.0" fill="#8090c0" fill-opacity="0.09"/><circle cx="525.8" cy="534.9" r="1.2" fill="#8090c0" fill-opacity="0.12"/><circle cx="505.1" cy="247.1" r="1.1" fill="#8090c0" fill-opacity="0.12"/><circle cx="144.1" cy="317.8" r="1.0" fill="#8090c0" fill-opacity="0.14"/><circle cx="730.8" cy="306.6" r="2.1" fill="#8090c0" fill-opacity="0.05"/><circle cx="504.9" cy="41.1" r="2.0" fill="#8090c0" fill-opacity="0.07"/><circle cx="71.9" cy="425.0" r="1.2" fill="#8090c0" fill-opacity="0.09"/><circle cx="765.1" cy="6.7" r="1.9" fill="#8090c0" fill-opacity="0.12"/><circle cx="606.5" cy="547.7" r="1.7" fill="#8090c0" fill-opacity="0.12"/><circle cx="123.3" cy="44.1" r="1.8" fill="#8090c0" fill-opacity="0.06"/><circle cx="185.0" cy="158.3" r="1.8" fill="#8090c0" fill-opacity="0.07"/><circle cx="300.0" cy="303.2" r="1.2" fill="#8090c0" fill-opacity="0.09"/><circle cx="106.6" cy="468.1" r="1.6" fill="#8090c0" fill-opacity="0.06"/><circle cx="472.8" cy="38.9" r="1.3" fill="#8090c0" fill-opacity="0.11"/><circle cx="150.2" cy="130.2" r="1.1" fill="#8090c0" fill-opacity="0.11"/><circle cx="319.3" cy="14.5" r="1.1" fill="#8090c0" fill-opacity="0.08"/><circle cx="895.1" cy="217.2" r="1.4" fill="#8090c0" fill-opacity="0.08"/><circle cx="336.7" cy="591.3" r="2.1" fill="#8090c0" fill-opacity="0.13"/><circle cx="566.4" cy="573.5" r="1.3" fill="#8090c0" fill-opacity="0.07"/><circle cx="779.5" cy="497.9" r="1.2" fill="#8090c0" fill-opacity="0.12"/><circle cx="255.1" cy="49.4" r="1.0" fill="#8090c0" fill-opacity="0.10"/><circle cx="533.8" cy="464.3" r="2.2" fill="#8090c0" fill-opacity="0.06"/><circle cx="870.5" cy="419.9" r="1.6" fill="#8090c0" fill-opacity="0.06"/><circle cx="445.7" cy="371.4" r="1.9" fill="#8090c0" fill-opacity="0.05"/><circle cx="924.6" cy="160.0" r="1.9" fill="#8090c0" fill-opacity="0.14"/><circle cx="698.1" cy="502.5" r="1.8" fill="#8090c0" fill-opacity="0.14"/><circle cx="449.4" cy="456.9" r="1.6" fill="#8090c0" fill-opacity="0.10"/><circle cx="426.3" cy="102.1" r="1.6" fill="#8090c0" fill-opacity="0.06"/><circle cx="252.5" cy="66.7" r="1.5" fill="#8090c0" fill-opacity="0.05"/><circle cx="769.2" cy="153.4" r="1.0" fill="#8090c0" fill-opacity="0.10"/><circle cx="186.4" cy="236.7" r="2.1" fill="#8090c0" fill-opacity="0.13"/><circle cx="919.5" cy="194.3" r="1.2" fill="#8090c0" fill-opacity="0.10"/><circle cx="925.3" cy="370.7" r="1.6" fill="#8090c0" fill-opacity="0.10"/><circle cx="910.5" cy="297.3" r="1.2" fill="#8090c0" fill-opacity="0.08"/><circle cx="263.7" cy="46.4" r="1.8" fill="#8090c0" fill-opacity="0.07"/><circle cx="495.7" cy="550.2" r="1.4" fill="#8090c0" fill-opacity="0.09"/><circle cx="334.7" cy="36.7" r="1.3" fill="#8090c0" fill-opacity="0.09"/><circle cx="143.4" cy="178.9" r="1.7" fill="#8090c0" fill-opacity="0.09"/><circle cx="122.0" cy="309.1" r="1.5" fill="#8090c0" fill-opacity="0.10"/><circle cx="635.7" cy="589.3" r="1.4" fill="#8090c0" fill-opacity="0.05"/><circle cx="83.6" cy="434.9" r="1.5" fill="#8090c0" fill-opacity="0.06"/><circle cx="772.6" cy="335.6" r="1.8" fill="#8090c0" fill-opacity="0.12"/><circle cx="720.4" cy="426.8" r="2.0" fill="#8090c0" fill-opacity="0.13"/><circle cx="694.3" cy="25.0" r="1.1" fill="#8090c0" fill-opacity="0.07"/><circle cx="818.3" cy="136.7" r="2.0" fill="#8090c0" fill-opacity="0.12"/><circle cx="419.2" cy="106.4" r="1.1" fill="#8090c0" fill-opacity="0.13"/><circle cx="76.5" cy="334.1" r="1.1" fill="#8090c0" fill-opacity="0.11"/><circle cx="254.4" cy="449.9" r="1.4" fill="#8090c0" fill-opacity="0.12"/><circle cx="817.0" cy="451.2" r="1.7" fill="#8090c0" fill-opacity="0.05"/><circle cx="512.4" cy="307.0" r="1.7" fill="#8090c0" fill-opacity="0.08"/><circle cx="955.3" cy="394.1" r="2.0" fill="#8090c0" fill-opacity="0.14"/><circle cx="851.6" cy="455.6" r="1.1" fill="#8090c0" fill-opacity="0.11"/><circle cx="885.1" cy="353.4" r="2.2" fill="#8090c0" fill-opacity="0.13"/><circle cx="275.6" cy="221.4" r="1.9" fill="#8090c0" fill-opacity="0.08"/><circle cx="736.1" cy="63.6" r="2.1" fill="#8090c0" fill-opacity="0.10"/><circle cx="915.5" cy="195.7" r="1.2" fill="#8090c0" fill-opacity="0.12"/><circle cx="654.5" cy="266.6" r="1.3" fill="#8090c0" fill-opacity="0.13"/><circle cx="608.5" cy="323.6" r="1.0" fill="#8090c0" fill-opacity="0.07"/><circle cx="673.4" cy="9.9" r="2.0" fill="#8090c0" fill-opacity="0.10"/><circle cx="305.8" cy="172.8" r="1.6" fill="#8090c0" fill-opacity="0.13"/><circle cx="207.4" cy="592.5" r="1.7" fill="#8090c0" fill-opacity="0.13"/><circle cx="539.5" cy="457.5" r="2.0" fill="#8090c0" fill-opacity="0.10"/><circle cx="882.6" cy="82.4" r="1.8" fill="#8090c0" fill-opacity="0.13"/><circle cx="850.6" cy="357.3" r="1.7" fill="#8090c0" fill-opacity="0.09"/><circle cx="226.3" cy="366.8" r="1.1" fill="#8090c0" fill-opacity="0.09"/><circle cx="450.9" cy="72.6" r="1.4" fill="#8090c0" fill-opacity="0.06"/><circle cx="774.9" cy="421.7" r="1.7" fill="#8090c0" fill-opacity="0.09"/><circle cx="759.0" cy="450.4" r="1.4" fill="#8090c0" fill-opacity="0.09"/><circle cx="382.2" cy="579.2" r="1.5" fill="#8090c0" fill-opacity="0.14"/><circle cx="624.0" cy="491.0" r="1.2" fill="#8090c0" fill-opacity="0.08"/><circle cx="592.6" cy="584.1" r="1.2" fill="#8090c0" fill-opacity="0.10"/><circle cx="709.7" cy="331.0" r="1.3" fill="#8090c0" fill-opacity="0.07"/><circle cx="769.9" cy="274.6" r="1.5" fill="#8090c0" fill-opacity="0.11"/><circle cx="783.5" cy="90.2" r="1.6" fill="#8090c0" fill-opacity="0.11"/><circle cx="677.9" cy="36.9" r="2.1" fill="#8090c0" fill-opacity="0.14"/><circle cx="437.1" cy="4.2" r="1.0" fill="#8090c0" fill-opacity="0.05"/><circle cx="409.8" cy="446.5" r="1.5" fill="#8090c0" fill-opacity="0.08"/><circle cx="205.6" cy="576.2" r="1.6" fill="#8090c0" fill-opacity="0.07"/><circle cx="297.2" cy="321.1" r="1.6" fill="#8090c0" fill-opacity="0.08"/><circle cx="736.3" cy="175.5" r="2.0" fill="#8090c0" fill-opacity="0.10"/><circle cx="105.0" cy="509.1" r="1.8" fill="#8090c0" fill-opacity="0.09"/><circle cx="574.0" cy="263.2" r="1.4" fill="#8090c0" fill-opacity="0.12"/><circle cx="396.0" cy="234.6" r="1.6" fill="#8090c0" fill-opacity="0.08"/><circle cx="859.7" cy="84.0" r="1.1" fill="#8090c0" fill-opacity="0.08"/><circle cx="874.2" cy="399.2" r="1.6" fill="#8090c0" fill-opacity="0.11"/><circle cx="629.1" cy="135.3" r="1.4" fill="#8090c0" fill-opacity="0.05"/><circle cx="264.3" cy="499.0" r="1.3" fill="#8090c0" fill-opacity="0.11"/><circle cx="721.1" cy="539.7" r="1.3" fill="#8090c0" fill-opacity="0.09"/><circle cx="1.6" cy="532.2" r="1.0" fill="#8090c0" fill-opacity="0.07"/><circle cx="77.6" cy="519.5" r="1.8" fill="#8090c0" fill-opacity="0.12"/><circle cx="591.2" cy="386.7" r="1.9" fill="#8090c0" fill-opacity="0.07"/><circle cx="752.3" cy="591.3" r="1.2" fill="#8090c0" fill-opacity="0.07"/><circle cx="70.8" cy="509.6" r="1.9" fill="#8090c0" fill-opacity="0.07"/><circle cx="814.5" cy="22.8" r="2.2" fill="#8090c0" fill-opacity="0.06"/><circle cx="146.2" cy="40.2" r="1.8" fill="#8090c0" fill-opacity="0.06"/><circle cx="594.2" cy="181.1" r="2.0" fill="#8090c0" fill-opacity="0.05"/><circle cx="274.3" cy="533.2" r="1.9" fill="#8090c0" fill-opacity="0.05"/><circle cx="525.9" cy="75.6" r="1.9" fill="#8090c0" fill-opacity="0.14"/><circle cx="360.2" cy="413.3" r="2.0" fill="#8090c0" fill-opacity="0.11"/><circle cx="109.3" cy="75.4" r="1.9" fill="#8090c0" fill-opacity="0.10"/><circle cx="697.8" cy="95.2" r="1.6" fill="#8090c0" fill-opacity="0.13"/><circle cx="22.9" cy="152.3" r="1.6" fill="#8090c0" fill-opacity="0.08"/><circle cx="433.1" cy="98.3" r="2.0" fill="#8090c0" fill-opacity="0.10"/><circle cx="840.9" cy="77.5" r="1.5" fill="#8090c0" fill-opacity="0.14"/><circle cx="710.7" cy="274.6" r="2.2" fill="#8090c0" fill-opacity="0.14"/><circle cx="179.8" cy="297.7" r="1.2" fill="#8090c0" fill-opacity="0.12"/><circle cx="28.1" cy="514.9" r="2.0" fill="#8090c0" fill-opacity="0.07"/><circle cx="648.9" cy="134.7" r="1.6" fill="#8090c0" fill-opacity="0.06"/><circle cx="207.0" cy="59.1" r="2.1" fill="#8090c0" fill-opacity="0.09"/><circle cx="876.7" cy="422.9" r="1.6" fill="#8090c0" fill-opacity="0.06"/><circle cx="806.8" cy="18.2" r="1.2" fill="#8090c0" fill-opacity="0.13"/><circle cx="290.8" cy="87.6" r="1.7" fill="#8090c0" fill-opacity="0.10"/><circle cx="570.6" cy="486.8" r="1.2" fill="#8090c0" fill-opacity="0.10"/><circle cx="126.8" cy="559.3" r="1.3" fill="#8090c0" fill-opacity="0.12"/><circle cx="736.3" cy="359.4" r="2.1" fill="#8090c0" fill-opacity="0.14"/><circle cx="290.9" cy="240.4" r="2.2" fill="#8090c0" fill-opacity="0.08"/><circle cx="53.1" cy="575.1" r="1.4" fill="#8090c0" fill-opacity="0.13"/><circle cx="269.6" cy="433.8" r="1.1" fill="#8090c0" fill-opacity="0.12"/><circle cx="858.8" cy="355.1" r="2.1" fill="#8090c0" fill-opacity="0.11"/><circle cx="721.8" cy="327.0" r="1.6" fill="#8090c0" fill-opacity="0.12"/><circle cx="169.3" cy="524.0" r="1.2" fill="#8090c0" fill-opacity="0.08"/><circle cx="934.6" cy="108.8" r="1.5" fill="#8090c0" fill-opacity="0.12"/><circle cx="749.7" cy="47.4" r="1.1" fill="#8090c0" fill-opacity="0.06"/><circle cx="892.2" cy="112.0" r="2.2" fill="#8090c0" fill-opacity="0.10"/><circle cx="309.5" cy="143.8" r="1.6" fill="#8090c0" fill-opacity="0.07"/><circle cx="185.0" cy="24.6" r="1.7" fill="#8090c0" fill-opacity="0.11"/><circle cx="762.0" cy="476.5" r="1.7" fill="#8090c0" fill-opacity="0.06"/><circle cx="563.5" cy="331.0" r="1.0" fill="#8090c0" fill-opacity="0.09"/><circle cx="229.9" cy="309.3" r="2.1" fill="#8090c0" fill-opacity="0.07"/><circle cx="23.6" cy="281.0" r="1.8" fill="#8090c0" fill-opacity="0.08"/><circle cx="528.1" cy="33.5" r="1.5" fill="#8090c0" fill-opacity="0.12"/><circle cx="125.3" cy="63.3" r="2.0" fill="#8090c0" fill-opacity="0.10"/><circle cx="267.5" cy="238.4" r="1.0" fill="#8090c0" fill-opacity="0.06"/><circle cx="698.6" cy="146.3" r="1.3" fill="#8090c0" fill-opacity="0.10"/><circle cx="919.7" cy="185.5" r="2.1" fill="#8090c0" fill-opacity="0.06"/><circle cx="839.3" cy="585.2" r="1.1" fill="#8090c0" fill-opacity="0.08"/><circle cx="910.7" cy="582.6" r="1.1" fill="#8090c0" fill-opacity="0.10"/><circle cx="804.8" cy="17.1" r="1.2" fill="#8090c0" fill-opacity="0.11"/><circle cx="312.7" cy="191.7" r="1.0" fill="#8090c0" fill-opacity="0.05"/><circle cx="379.0" cy="314.6" r="1.5" fill="#8090c0" fill-opacity="0.14"/><circle cx="333.5" cy="129.8" r="1.2" fill="#8090c0" fill-opacity="0.08"/><circle cx="720.3" cy="540.5" r="2.1" fill="#8090c0" fill-opacity="0.14"/><circle cx="595.8" cy="140.6" r="1.7" fill="#8090c0" fill-opacity="0.12"/><circle cx="885.7" cy="286.7" r="1.7" fill="#8090c0" fill-opacity="0.09"/><circle cx="678.5" cy="497.8" r="2.1" fill="#8090c0" fill-opacity="0.13"/><circle cx="470.9" cy="3.0" r="2.1" fill="#8090c0" fill-opacity="0.07"/><circle cx="818.6" cy="240.7" r="2.1" fill="#8090c0" fill-opacity="0.07"/><circle cx="703.2" cy="88.6" r="2.0" fill="#8090c0" fill-opacity="0.10"/><circle cx="401.0" cy="317.2" r="1.2" fill="#8090c0" fill-opacity="0.13"/><circle cx="343.0" cy="570.7" r="1.9" fill="#8090c0" fill-opacity="0.08"/><circle cx="721.5" cy="248.0" r="1.4" fill="#8090c0" fill-opacity="0.05"/><circle cx="202.8" cy="352.8" r="1.8" fill="#8090c0" fill-opacity="0.06"/><circle cx="886.2" cy="558.0" r="1.9" fill="#8090c0" fill-opacity="0.13"/><circle cx="346.1" cy="492.2" r="1.3" fill="#8090c0" fill-opacity="0.10"/><circle cx="224.1" cy="194.9" r="2.0" fill="#8090c0" fill-opacity="0.10"/><circle cx="764.8" cy="62.9" r="1.9" fill="#8090c0" fill-opacity="0.08"/><circle cx="668.0" cy="244.1" r="1.6" fill="#8090c0" fill-opacity="0.07"/><circle cx="840.2" cy="415.1" r="1.2" fill="#8090c0" fill-opacity="0.07"/><circle cx="306.3" cy="217.0" r="2.2" fill="#8090c0" fill-opacity="0.13"/><circle cx="400.2" cy="492.7" r="1.8" fill="#8090c0" fill-opacity="0.06"/><circle cx="608.5" cy="358.8" r="1.9" fill="#8090c0" fill-opacity="0.10"/><circle cx="68.8" cy="418.1" r="1.4" fill="#8090c0" fill-opacity="0.10"/><circle cx="588.0" cy="560.6" r="1.5" fill="#8090c0" fill-opacity="0.07"/><circle cx="351.0" cy="105.9" r="1.9" fill="#8090c0" fill-opacity="0.12"/><circle cx="302.3" cy="359.5" r="1.4" fill="#8090c0" fill-opacity="0.14"/><circle cx="84.0" cy="407.3" r="1.4" fill="#8090c0" fill-opacity="0.07"/><circle cx="546.8" cy="460.6" r="1.3" fill="#8090c0" fill-opacity="0.12"/><circle cx="727.4" cy="252.8" r="1.2" fill="#8090c0" fill-opacity="0.09"/><circle cx="401.0" cy="508.6" r="1.7" fill="#8090c0" fill-opacity="0.06"/><circle cx="128.1" cy="433.3" r="2.1" fill="#8090c0" fill-opacity="0.12"/><circle cx="23.5" cy="91.2" r="1.5" fill="#8090c0" fill-opacity="0.11"/><circle cx="934.5" cy="181.9" r="1.6" fill="#8090c0" fill-opacity="0.14"/><circle cx="813.7" cy="118.9" r="1.1" fill="#8090c0" fill-opacity="0.13"/><circle cx="904.9" cy="2.8" r="2.1" fill="#8090c0" fill-opacity="0.06"/><circle cx="590.7" cy="106.4" r="1.0" fill="#8090c0" fill-opacity="0.06"/><circle cx="241.0" cy="117.1" r="2.1" fill="#8090c0" fill-opacity="0.09"/><circle cx="954.8" cy="553.4" r="1.4" fill="#8090c0" fill-opacity="0.07"/><circle cx="326.4" cy="322.5" r="1.9" fill="#8090c0" fill-opacity="0.06"/><circle cx="676.9" cy="307.2" r="1.3" fill="#8090c0" fill-opacity="0.06"/><circle cx="341.8" cy="91.0" r="1.7" fill="#8090c0" fill-opacity="0.08"/><circle cx="448.6" cy="5.6" r="1.1" fill="#8090c0" fill-opacity="0.09"/><circle cx="325.5" cy="214.7" r="1.8" fill="#8090c0" fill-opacity="0.12"/><circle cx="525.5" cy="152.7" r="1.9" fill="#8090c0" fill-opacity="0.07"/><circle cx="321.3" cy="37.1" r="1.5" fill="#8090c0" fill-opacity="0.12"/><circle cx="639.4" cy="120.8" r="1.2" fill="#8090c0" fill-opacity="0.07"/><circle cx="147.8" cy="276.2" r="1.1" fill="#8090c0" fill-opacity="0.11"/><circle cx="620.5" cy="433.1" r="2.1" fill="#8090c0" fill-opacity="0.09"/><circle cx="124.4" cy="587.1" r="1.8" fill="#8090c0" fill-opacity="0.11"/><circle cx="144.5" cy="312.0" r="1.1" fill="#8090c0" fill-opacity="0.12"/><circle cx="533.9" cy="548.3" r="1.1" fill="#8090c0" fill-opacity="0.13"/><circle cx="428.4" cy="84.5" r="2.1" fill="#8090c0" fill-opacity="0.07"/><circle cx="259.1" cy="101.6" r="2.2" fill="#8090c0" fill-opacity="0.09"/><circle cx="465.8" cy="291.7" r="1.7" fill="#8090c0" fill-opacity="0.12"/><circle cx="382.4" cy="332.3" r="1.4" fill="#8090c0" fill-opacity="0.07"/><circle cx="763.6" cy="472.1" r="1.2" fill="#8090c0" fill-opacity="0.12"/><circle cx="413.6" cy="92.4" r="1.1" fill="#8090c0" fill-opacity="0.07"/><circle cx="397.1" cy="591.1" r="1.8" fill="#8090c0" fill-opacity="0.12"/><circle cx="52.7" cy="133.1" r="1.8" fill="#8090c0" fill-opacity="0.08"/><circle cx="695.5" cy="19.8" r="2.0" fill="#8090c0" fill-opacity="0.10"/><circle cx="674.7" cy="190.5" r="1.4" fill="#8090c0" fill-opacity="0.11"/><circle cx="14.4" cy="98.1" r="1.8" fill="#8090c0" fill-opacity="0.08"/><circle cx="736.6" cy="451.3" r="1.5" fill="#8090c0" fill-opacity="0.11"/><circle cx="450.4" cy="205.9" r="1.3" fill="#8090c0" fill-opacity="0.06"/><circle cx="144.9" cy="564.1" r="1.3" fill="#8090c0" fill-opacity="0.11"/><circle cx="781.8" cy="174.6" r="1.2" fill="#8090c0" fill-opacity="0.13"/><circle cx="303.3" cy="41.5" r="1.8" fill="#8090c0" fill-opacity="0.13"/><circle cx="141.7" cy="136.7" r="1.2" fill="#8090c0" fill-opacity="0.13"/><circle cx="308.2" cy="191.5" r="1.2" fill="#8090c0" fill-opacity="0.07"/><circle cx="640.3" cy="250.4" r="1.8" fill="#8090c0" fill-opacity="0.10"/><circle cx="296.8" cy="231.3" r="1.8" fill="#8090c0" fill-opacity="0.05"/><circle cx="469.7" cy="368.3" r="1.6" fill="#8090c0" fill-opacity="0.06"/><circle cx="561.8" cy="433.2" r="2.2" fill="#8090c0" fill-opacity="0.06"/><circle cx="442.3" cy="128.1" r="1.4" fill="#8090c0" fill-opacity="0.08"/><circle cx="373.7" cy="372.2" r="1.6" fill="#8090c0" fill-opacity="0.06"/><circle cx="43.4" cy="353.5" r="1.2" fill="#8090c0" fill-opacity="0.09"/><circle cx="349.4" cy="227.0" r="1.6" fill="#8090c0" fill-opacity="0.13"/><circle cx="558.8" cy="316.9" r="2.2" fill="#8090c0" fill-opacity="0.11"/><circle cx="18.3" cy="261.6" r="1.6" fill="#8090c0" fill-opacity="0.06"/><circle cx="221.3" cy="277.8" r="1.8" fill="#8090c0" fill-opacity="0.11"/><circle cx="67.6" cy="419.7" r="2.1" fill="#8090c0" fill-opacity="0.09"/><circle cx="144.9" cy="12.6" r="1.3" fill="#8090c0" fill-opacity="0.13"/><circle cx="144.9" cy="598.9" r="1.1" fill="#8090c0" fill-opacity="0.13"/><circle cx="707.4" cy="177.1" r="1.1" fill="#8090c0" fill-opacity="0.08"/><circle cx="932.5" cy="190.1" r="1.4" fill="#8090c0" fill-opacity="0.06"/><circle cx="670.2" cy="177.2" r="1.7" fill="#8090c0" fill-opacity="0.07"/><circle cx="773.1" cy="235.8" r="1.9" fill="#8090c0" fill-opacity="0.07"/><circle cx="684.6" cy="355.2" r="1.6" fill="#8090c0" fill-opacity="0.12"/><circle cx="143.9" cy="503.8" r="1.3" fill="#8090c0" fill-opacity="0.06"/><circle cx="251.6" cy="431.9" r="2.0" fill="#8090c0" fill-opacity="0.08"/><circle cx="357.4" cy="498.0" r="1.2" fill="#8090c0" fill-opacity="0.14"/><circle cx="696.6" cy="575.3" r="1.2" fill="#8090c0" fill-opacity="0.08"/><circle cx="296.4" cy="466.2" r="1.2" fill="#8090c0" fill-opacity="0.05"/><circle cx="437.0" cy="174.0" r="1.8" fill="#8090c0" fill-opacity="0.12"/><circle cx="8.4" cy="476.5" r="1.4" fill="#8090c0" fill-opacity="0.12"/><circle cx="148.7" cy="340.6" r="1.8" fill="#8090c0" fill-opacity="0.12"/><circle cx="153.3" cy="254.6" r="1.4" fill="#8090c0" fill-opacity="0.10"/><circle cx="649.4" cy="536.6" r="1.6" fill="#8090c0" fill-opacity="0.10"/><circle cx="201.1" cy="408.5" r="2.0" fill="#8090c0" fill-opacity="0.05"/><circle cx="664.7" cy="446.3" r="1.1" fill="#8090c0" fill-opacity="0.14"/><circle cx="821.2" cy="535.8" r="1.7" fill="#8090c0" fill-opacity="0.12"/><circle cx="271.4" cy="310.8" r="2.1" fill="#8090c0" fill-opacity="0.12"/><circle cx="204.7" cy="217.0" r="1.5" fill="#8090c0" fill-opacity="0.05"/><circle cx="428.9" cy="371.2" r="1.2" fill="#8090c0" fill-opacity="0.10"/><circle cx="149.0" cy="519.2" r="1.7" fill="#8090c0" fill-opacity="0.09"/><circle cx="931.9" cy="472.6" r="2.0" fill="#8090c0" fill-opacity="0.09"/><circle cx="465.1" cy="142.6" r="1.9" fill="#8090c0" fill-opacity="0.13"/><circle cx="227.8" cy="24.9" r="1.7" fill="#8090c0" fill-opacity="0.12"/><circle cx="621.6" cy="196.1" r="1.7" fill="#8090c0" fill-opacity="0.07"/><circle cx="800.3" cy="507.5" r="1.7" fill="#8090c0" fill-opacity="0.12"/><circle cx="100.4" cy="137.9" r="1.4" fill="#8090c0" fill-opacity="0.05"/><circle cx="72.6" cy="134.0" r="1.9" fill="#8090c0" fill-opacity="0.11"/><circle cx="466.1" cy="234.0" r="1.5" fill="#8090c0" fill-opacity="0.13"/><circle cx="234.0" cy="484.0" r="1.3" fill="#8090c0" fill-opacity="0.13"/><circle cx="147.0" cy="122.8" r="1.8" fill="#8090c0" fill-opacity="0.07"/><circle cx="76.3" cy="475.7" r="1.6" fill="#8090c0" fill-opacity="0.10"/><circle cx="899.0" cy="80.9" r="2.0" fill="#8090c0" fill-opacity="0.13"/><circle cx="753.1" cy="458.4" r="1.1" fill="#8090c0" fill-opacity="0.10"/><circle cx="478.6" cy="439.2" r="1.8" fill="#8090c0" fill-opacity="0.14"/><circle cx="724.0" cy="422.4" r="1.3" fill="#8090c0" fill-opacity="0.05"/><circle cx="49.8" cy="432.5" r="1.7" fill="#8090c0" fill-opacity="0.14"/><circle cx="901.1" cy="114.1" r="1.8" fill="#8090c0" fill-opacity="0.07"/><circle cx="559.8" cy="45.8" r="1.8" fill="#8090c0" fill-opacity="0.09"/><circle cx="734.6" cy="404.9" r="1.5" fill="#8090c0" fill-opacity="0.10"/><circle cx="401.1" cy="344.1" r="1.4" fill="#8090c0" fill-opacity="0.07"/><circle cx="390.4" cy="105.3" r="2.0" fill="#8090c0" fill-opacity="0.06"/><circle cx="951.4" cy="473.0" r="2.0" fill="#8090c0" fill-opacity="0.09"/><circle cx="204.6" cy="117.1" r="1.1" fill="#8090c0" fill-opacity="0.12"/><circle cx="289.8" cy="190.2" r="2.0" fill="#8090c0" fill-opacity="0.11"/><circle cx="432.4" cy="38.2" r="1.1" fill="#8090c0" fill-opacity="0.08"/><circle cx="752.5" cy="321.0" r="1.3" fill="#8090c0" fill-opacity="0.09"/><circle cx="476.2" cy="63.0" r="2.0" fill="#8090c0" fill-opacity="0.08"/><circle cx="320.8" cy="164.5" r="1.2" fill="#8090c0" fill-opacity="0.06"/><circle cx="384.8" cy="427.8" r="2.1" fill="#8090c0" fill-opacity="0.13"/><circle cx="839.0" cy="20.8" r="2.1" fill="#8090c0" fill-opacity="0.14"/><circle cx="433.4" cy="189.4" r="1.6" fill="#8090c0" fill-opacity="0.13"/><circle cx="947.0" cy="557.2" r="2.0" fill="#8090c0" fill-opacity="0.13"/><circle cx="538.4" cy="321.0" r="1.4" fill="#8090c0" fill-opacity="0.08"/><circle cx="831.7" cy="540.9" r="1.1" fill="#8090c0" fill-opacity="0.13"/><circle cx="693.3" cy="389.6" r="1.3" fill="#8090c0" fill-opacity="0.06"/><circle cx="569.9" cy="146.1" r="1.7" fill="#8090c0" fill-opacity="0.11"/><circle cx="228.9" cy="380.3" r="2.0" fill="#8090c0" fill-opacity="0.09"/><circle cx="535.6" cy="557.6" r="2.1" fill="#8090c0" fill-opacity="0.13"/><circle cx="902.3" cy="167.7" r="2.1" fill="#8090c0" fill-opacity="0.11"/><circle cx="695.8" cy="375.1" r="1.6" fill="#8090c0" fill-opacity="0.12"/><circle cx="504.5" cy="458.9" r="1.8" fill="#8090c0" fill-opacity="0.10"/><circle cx="553.7" cy="113.2" r="1.8" fill="#8090c0" fill-opacity="0.09"/><circle cx="935.2" cy="299.3" r="2.1" fill="#8090c0" fill-opacity="0.09"/><circle cx="271.7" cy="441.8" r="2.2" fill="#8090c0" fill-opacity="0.14"/><circle cx="238.6" cy="522.2" r="2.1" fill="#8090c0" fill-opacity="0.14"/><circle cx="839.7" cy="43.9" r="1.7" fill="#8090c0" fill-opacity="0.14"/><circle cx="913.3" cy="451.0" r="1.5" fill="#8090c0" fill-opacity="0.14"/><circle cx="97.3" cy="366.4" r="1.2" fill="#8090c0" fill-opacity="0.13"/><circle cx="84.1" cy="523.1" r="2.1" fill="#8090c0" fill-opacity="0.06"/><circle cx="628.0" cy="268.7" r="1.1" fill="#8090c0" fill-opacity="0.11"/><circle cx="814.2" cy="138.1" r="1.2" fill="#8090c0" fill-opacity="0.12"/><circle cx="86.3" cy="74.7" r="1.7" fill="#8090c0" fill-opacity="0.06"/><circle cx="204.9" cy="429.7" r="1.7" fill="#8090c0" fill-opacity="0.06"/><circle cx="878.8" cy="411.8" r="1.5" fill="#8090c0" fill-opacity="0.12"/><circle cx="95.9" cy="513.8" r="2.2" fill="#8090c0" fill-opacity="0.08"/><circle cx="325.4" cy="303.8" r="2.0" fill="#8090c0" fill-opacity="0.12"/><circle cx="349.3" cy="493.1" r="1.0" fill="#8090c0" fill-opacity="0.13"/><circle cx="910.1" cy="599.3" r="2.0" fill="#8090c0" fill-opacity="0.06"/><circle cx="492.0" cy="596.0" r="1.7" fill="#8090c0" fill-opacity="0.13"/><circle cx="912.0" cy="84.2" r="2.0" fill="#8090c0" fill-opacity="0.11"/><circle cx="917.8" cy="590.0" r="1.7" fill="#8090c0" fill-opacity="0.10"/><circle cx="110.9" cy="198.4" r="2.0" fill="#8090c0" fill-opacity="0.05"/><circle cx="467.8" cy="79.6" r="1.1" fill="#8090c0" fill-opacity="0.06"/><circle cx="244.1" cy="308.3" r="2.1" fill="#8090c0" fill-opacity="0.07"/><circle cx="200.3" cy="394.6" r="1.3" fill="#8090c0" fill-opacity="0.06"/><circle cx="495.2" cy="446.3" r="1.3" fill="#8090c0" fill-opacity="0.12"/><circle cx="136.9" cy="553.0" r="1.6" fill="#8090c0" fill-opacity="0.10"/><circle cx="601.8" cy="177.7" r="1.8" fill="#8090c0" fill-opacity="0.06"/><circle cx="51.5" cy="218.3" r="1.9" fill="#8090c0" fill-opacity="0.06"/><circle cx="307.8" cy="169.4" r="1.1" fill="#8090c0" fill-opacity="0.14"/><circle cx="530.9" cy="69.9" r="1.5" fill="#8090c0" fill-opacity="0.13"/><circle cx="808.7" cy="238.4" r="1.2" fill="#8090c0" fill-opacity="0.12"/><circle cx="380.8" cy="183.5" r="2.0" fill="#8090c0" fill-opacity="0.08"/><circle cx="364.5" cy="127.0" r="1.9" fill="#8090c0" fill-opacity="0.13"/><circle cx="19.9" cy="548.4" r="2.1" fill="#8090c0" fill-opacity="0.10"/><circle cx="331.0" cy="362.0" r="1.1" fill="#8090c0" fill-opacity="0.14"/><circle cx="286.7" cy="23.4" r="1.8" fill="#8090c0" fill-opacity="0.14"/><circle cx="147.8" cy="554.5" r="1.3" fill="#8090c0" fill-opacity="0.10"/><circle cx="670.9" cy="484.0" r="1.4" fill="#8090c0" fill-opacity="0.13"/><circle cx="87.3" cy="539.7" r="1.7" fill="#8090c0" fill-opacity="0.09"/><circle cx="568.5" cy="273.4" r="1.1" fill="#8090c0" fill-opacity="0.12"/><circle cx="826.7" cy="286.8" r="2.1" fill="#8090c0" fill-opacity="0.08"/><circle cx="193.5" cy="326.9" r="2.0" fill="#8090c0" fill-opacity="0.13"/><circle cx="30.7" cy="255.5" r="1.2" fill="#8090c0" fill-opacity="0.14"/><circle cx="152.0" cy="7.7" r="1.5" fill="#8090c0" fill-opacity="0.12"/><circle cx="73.9" cy="303.3" r="1.1" fill="#8090c0" fill-opacity="0.11"/><circle cx="935.0" cy="531.9" r="1.7" fill="#8090c0" fill-opacity="0.12"/><circle cx="702.2" cy="430.6" r="1.4" fill="#8090c0" fill-opacity="0.12"/><circle cx="436.7" cy="66.9" r="1.2" fill="#8090c0" fill-opacity="0.14"/><circle cx="637.1" cy="431.5" r="2.0" fill="#8090c0" fill-opacity="0.08"/><circle cx="654.3" cy="321.6" r="1.5" fill="#8090c0" fill-opacity="0.11"/><circle cx="484.2" cy="245.4" r="1.2" fill="#8090c0" fill-opacity="0.06"/><circle cx="627.7" cy="571.6" r="1.7" fill="#8090c0" fill-opacity="0.10"/><circle cx="319.0" cy="23.5" r="1.5" fill="#8090c0" fill-opacity="0.12"/><circle cx="141.3" cy="316.4" r="1.2" fill="#8090c0" fill-opacity="0.12"/><circle cx="496.0" cy="234.4" r="1.9" fill="#8090c0" fill-opacity="0.11"/><circle cx="378.9" cy="521.0" r="1.8" fill="#8090c0" fill-opacity="0.12"/><circle cx="372.3" cy="516.5" r="1.7" fill="#8090c0" fill-opacity="0.10"/><circle cx="862.5" cy="593.5" r="2.1" fill="#8090c0" fill-opacity="0.11"/><circle cx="745.9" cy="427.9" r="1.5" fill="#8090c0" fill-opacity="0.09"/><circle cx="404.2" cy="534.8" r="1.5" fill="#8090c0" fill-opacity="0.08"/><circle cx="755.0" cy="85.2" r="1.3" fill="#8090c0" fill-opacity="0.08"/><circle cx="955.8" cy="314.3" r="1.2" fill="#8090c0" fill-opacity="0.08"/><circle cx="689.1" cy="476.1" r="1.7" fill="#8090c0" fill-opacity="0.11"/><circle cx="466.3" cy="235.0" r="1.9" fill="#8090c0" fill-opacity="0.10"/><circle cx="725.6" cy="165.5" r="1.2" fill="#8090c0" fill-opacity="0.10"/><circle cx="290.2" cy="8.1" r="1.1" fill="#8090c0" fill-opacity="0.09"/><circle cx="323.6" cy="199.4" r="1.1" fill="#8090c0" fill-opacity="0.13"/><circle cx="760.0" cy="153.7" r="1.2" fill="#8090c0" fill-opacity="0.14"/><circle cx="878.8" cy="424.0" r="1.4" fill="#8090c0" fill-opacity="0.10"/><circle cx="116.2" cy="552.8" r="2.2" fill="#8090c0" fill-opacity="0.13"/><circle cx="407.3" cy="252.6" r="1.7" fill="#8090c0" fill-opacity="0.09"/><circle cx="826.2" cy="457.7" r="2.1" fill="#8090c0" fill-opacity="0.11"/><circle cx="152.0" cy="362.0" r="1.1" fill="#8090c0" fill-opacity="0.12"/><circle cx="143.4" cy="528.7" r="1.9" fill="#8090c0" fill-opacity="0.12"/><circle cx="644.4" cy="514.9" r="1.1" fill="#8090c0" fill-opacity="0.12"/><circle cx="613.6" cy="399.8" r="1.3" fill="#8090c0" fill-opacity="0.08"/><circle cx="250.3" cy="546.7" r="1.2" fill="#8090c0" fill-opacity="0.07"/><circle cx="403.9" cy="514.8" r="2.2" fill="#8090c0" fill-opacity="0.07"/><circle cx="12.9" cy="482.1" r="2.0" fill="#8090c0" fill-opacity="0.09"/><circle cx="613.3" cy="402.7" r="1.8" fill="#8090c0" fill-opacity="0.13"/><circle cx="452.7" cy="564.6" r="1.9" fill="#8090c0" fill-opacity="0.10"/><circle cx="342.8" cy="64.8" r="1.2" fill="#8090c0" fill-opacity="0.08"/><circle cx="463.1" cy="536.2" r="1.1" fill="#8090c0" fill-opacity="0.10"/><circle cx="190.5" cy="211.5" r="1.6" fill="#8090c0" fill-opacity="0.08"/><circle cx="739.2" cy="579.7" r="1.6" fill="#8090c0" fill-opacity="0.08"/><circle cx="241.6" cy="358.0" r="1.1" fill="#8090c0" fill-opacity="0.05"/><circle cx="644.3" cy="370.1" r="2.2" fill="#8090c0" fill-opacity="0.09"/><circle cx="94.5" cy="496.4" r="1.7" fill="#8090c0" fill-opacity="0.14"/><circle cx="322.0" cy="181.5" r="1.2" fill="#8090c0" fill-opacity="0.06"/><circle cx="76.9" cy="490.7" r="1.3" fill="#8090c0" fill-opacity="0.07"/><circle cx="939.9" cy="90.4" r="1.7" fill="#8090c0" fill-opacity="0.07"/><circle cx="860.0" cy="464.3" r="1.6" fill="#8090c0" fill-opacity="0.07"/><circle cx="563.2" cy="108.6" r="1.8" fill="#8090c0" fill-opacity="0.09"/><circle cx="680.8" cy="456.2" r="1.3" fill="#8090c0" fill-opacity="0.11"/><circle cx="174.8" cy="106.5" r="2.1" fill="#8090c0" fill-opacity="0.05"/><circle cx="811.7" cy="281.4" r="1.0" fill="#8090c0" fill-opacity="0.06"/><circle cx="673.9" cy="93.5" r="1.3" fill="#8090c0" fill-opacity="0.07"/><circle cx="771.6" cy="573.6" r="1.2" fill="#8090c0" fill-opacity="0.12"/><circle cx="192.9" cy="447.5" r="2.0" fill="#8090c0" fill-opacity="0.08"/><circle cx="70.8" cy="596.5" r="1.8" fill="#8090c0" fill-opacity="0.08"/><circle cx="443.6" cy="339.0" r="1.9" fill="#8090c0" fill-opacity="0.07"/><circle cx="290.6" cy="239.5" r="1.8" fill="#8090c0" fill-opacity="0.12"/><path d="M38.5 0 H75.5 L74.5 25 H39.5 Z" fill="#0a78c8"/><path d="M47 0V25M57 0V25M66 0V25" stroke="#0868b0" stroke-width="0.8"/><path d="M0 586 L20 587 L60 596 L140 640 L300 760 L480 840 L683 853 L699 867 L740 872 L775 880 L785 883 L0 883 Z" fill="#06080c"/><path d="M683 853 L699 867 L740 872 L775 880 L785 883 L956 883 L956 853 Z" fill="url(#teal)"/><path d="M736 872 L744 864 L750 871 Z" fill="#3a6068" opacity="0.7"/><path d="M0 587 L18 588 L45 594" stroke="#4a5060" stroke-width="2.5" fill="none" opacity="0.6" filter="url(#sb)"/><g filter="url(#sb)"><ellipse cx="27" cy="723" rx="12" ry="1.5" transform="rotate(28 27 723)" fill="#2a3a48" opacity="0.6"/><ellipse cx="58" cy="745" rx="22" ry="3.5" transform="rotate(28 58 745)" fill="#4a6a80" opacity="0.85"/><ellipse cx="50" cy="748" rx="10" ry="2" transform="rotate(20 50 748)" fill="#5a7a90" opacity="0.6"/><ellipse cx="9" cy="778" rx="11" ry="2.5" transform="rotate(28 9 778)" fill="#3a5060" opacity="0.7"/><ellipse cx="20" cy="795" rx="18" ry="2.5" transform="rotate(15 20 795)" fill="#3d5566" opacity="0.7"/><ellipse cx="38" cy="803" rx="20" ry="2.5" transform="rotate(12 38 803)" fill="#3d5566" opacity="0.6"/><ellipse cx="48" cy="792" rx="8" ry="2" transform="rotate(-10 48 792)" fill="#4a6070" opacity="0.5"/><ellipse cx="118" cy="784" rx="16" ry="3.5" transform="rotate(35 118 784)" fill="#4a6a80" opacity="0.8"/><ellipse cx="126" cy="795" rx="10" ry="2" transform="rotate(30 126 795)" fill="#3a5a70" opacity="0.6"/><ellipse cx="25" cy="827" rx="26" ry="2.5" transform="rotate(6 25 827)" fill="#3a4a58" opacity="0.65"/><ellipse cx="91" cy="813" rx="13" ry="2" transform="rotate(10 91 813)" fill="#34485a" opacity="0.6"/><ellipse cx="105" cy="828" rx="19" ry="2" transform="rotate(6 105 828)" fill="#3a4a58" opacity="0.6"/><ellipse cx="13" cy="856" rx="15" ry="3" transform="rotate(12 13 856)" fill="#2e4656" opacity="0.7"/><ellipse cx="108" cy="851" rx="25" ry="3" transform="rotate(10 108 851)" fill="#2e4a5a" opacity="0.7"/><ellipse cx="40" cy="876" rx="40" ry="2" transform="rotate(3 40 876)" fill="#2a3a4a" opacity="0.6"/><ellipse cx="100" cy="880" rx="30" ry="2" transform="rotate(0 100 880)" fill="#2a3a4a" opacity="0.5"/><ellipse cx="200" cy="870" rx="30" ry="2" transform="rotate(5 200 870)" fill="#2a3a48" opacity="0.5"/><ellipse cx="300" cy="875" rx="25" ry="1.5" transform="rotate(3 300 875)" fill="#2a3a48" opacity="0.4"/><ellipse cx="500" cy="858" rx="22" ry="2.5" transform="rotate(6 500 858)" fill="#6a8298" opacity="0.8"/><ellipse cx="545" cy="862" rx="28" ry="3" transform="rotate(8 545 862)" fill="#8a9cb0" opacity="0.8"/><ellipse cx="585" cy="864" rx="20" ry="3" transform="rotate(12 585 864)" fill="#7a90a8" opacity="0.8"/><ellipse cx="470" cy="866" rx="15" ry="1.5" transform="rotate(3 470 866)" fill="#506478" opacity="0.6"/><ellipse cx="560" cy="876" rx="22" ry="2" transform="rotate(-4 560 876)" fill="#6a8298" opacity="0.7"/><ellipse cx="655" cy="858" rx="20" ry="1.5" transform="rotate(35 655 858)" fill="#7a8a98" opacity="0.7"/><ellipse cx="672" cy="856" rx="14" ry="1.5" transform="rotate(40 672 856)" fill="#8a9aa8" opacity="0.6"/><ellipse cx="620" cy="858" rx="24" ry="2.5" transform="rotate(20 620 858)" fill="#7890a8" opacity="0.65"/><ellipse cx="640" cy="875" rx="24" ry="2.5" transform="rotate(-5 640 875)" fill="#8aa0b8" opacity="0.7"/><ellipse cx="610" cy="880" rx="30" ry="1.5" transform="rotate(0 610 880)" fill="#506070" opacity="0.6"/><ellipse cx="665" cy="860" rx="17" ry="1.5" transform="rotate(25 665 860)" fill="#8090a0" opacity="0.5"/><ellipse cx="735" cy="868" rx="11" ry="2.5" transform="rotate(-25 735 868)" fill="#4a6070" opacity="0.6"/><ellipse cx="57.9" cy="802.4" rx="15.1" ry="1.5" transform="rotate(4 57.9 802.4)" fill="#4a5a68" opacity="0.38"/><ellipse cx="110.6" cy="787.1" rx="11.4" ry="1.1" transform="rotate(13 110.6 787.1)" fill="#34485a" opacity="0.34"/><ellipse cx="111.4" cy="826.9" rx="4.5" ry="2.2" transform="rotate(11 111.4 826.9)" fill="#4a5a68" opacity="0.56"/><ellipse cx="83.5" cy="852.2" rx="4.8" ry="0.8" transform="rotate(10 83.5 852.2)" fill="#4a5a68" opacity="0.31"/><ellipse cx="59.6" cy="780.6" rx="14.1" ry="1.5" transform="rotate(19 59.6 780.6)" fill="#243240" opacity="0.30"/><ellipse cx="2.7" cy="819.8" rx="8.9" ry="1.6" transform="rotate(11 2.7 819.8)" fill="#2a3a48" opacity="0.58"/><ellipse cx="37.3" cy="742.0" rx="7.5" ry="0.9" transform="rotate(23 37.3 742.0)" fill="#243240" opacity="0.34"/><ellipse cx="33.6" cy="712.2" rx="4.2" ry="1.8" transform="rotate(6 33.6 712.2)" fill="#2a3a48" opacity="0.49"/><ellipse cx="137.1" cy="772.7" rx="4.9" ry="1.7" transform="rotate(23 137.1 772.7)" fill="#3d5566" opacity="0.43"/><ellipse cx="36.7" cy="702.8" rx="8.9" ry="2.1" transform="rotate(4 36.7 702.8)" fill="#2a3a48" opacity="0.30"/><ellipse cx="59.7" cy="789.1" rx="12.2" ry="1.1" transform="rotate(15 59.7 789.1)" fill="#34485a" opacity="0.47"/><ellipse cx="47.6" cy="772.3" rx="15.9" ry="0.8" transform="rotate(26 47.6 772.3)" fill="#4a5a68" opacity="0.42"/><ellipse cx="122.7" cy="738.6" rx="8.7" ry="2.0" transform="rotate(19 122.7 738.6)" fill="#2a3a48" opacity="0.32"/><ellipse cx="12.0" cy="780.8" rx="4.1" ry="1.7" transform="rotate(25 12.0 780.8)" fill="#243240" opacity="0.33"/><ellipse cx="3.5" cy="806.6" rx="6.9" ry="1.6" transform="rotate(1 3.5 806.6)" fill="#243240" opacity="0.35"/><ellipse cx="78.1" cy="852.3" rx="5.6" ry="1.3" transform="rotate(6 78.1 852.3)" fill="#3d5566" opacity="0.66"/><ellipse cx="112.7" cy="745.7" rx="6.3" ry="1.8" transform="rotate(28 112.7 745.7)" fill="#34485a" opacity="0.57"/><ellipse cx="48.2" cy="788.3" rx="4.9" ry="0.9" transform="rotate(3 48.2 788.3)" fill="#4a5a68" opacity="0.69"/><ellipse cx="25.8" cy="828.9" rx="7.1" ry="2.0" transform="rotate(5 25.8 828.9)" fill="#3d5566" opacity="0.51"/><ellipse cx="129.4" cy="878.8" rx="5.5" ry="1.5" transform="rotate(6 129.4 878.8)" fill="#4a5a68" opacity="0.55"/><ellipse cx="32.0" cy="867.9" rx="6.4" ry="0.8" transform="rotate(-0 32.0 867.9)" fill="#243240" opacity="0.40"/><ellipse cx="-3.0" cy="751.6" rx="10.4" ry="2.2" transform="rotate(3 -3.0 751.6)" fill="#34485a" opacity="0.66"/><ellipse cx="137.1" cy="820.2" rx="12.3" ry="1.6" transform="rotate(-3 137.1 820.2)" fill="#2a3a48" opacity="0.67"/><ellipse cx="61.2" cy="765.4" rx="7.7" ry="0.8" transform="rotate(18 61.2 765.4)" fill="#2a3a48" opacity="0.49"/><ellipse cx="99.6" cy="758.4" rx="16.0" ry="0.9" transform="rotate(16 99.6 758.4)" fill="#2a3a48" opacity="0.66"/><ellipse cx="100.6" cy="828.8" rx="13.5" ry="2.1" transform="rotate(1 100.6 828.8)" fill="#243240" opacity="0.66"/><ellipse cx="120.7" cy="776.3" rx="13.5" ry="2.0" transform="rotate(17 120.7 776.3)" fill="#4a5a68" opacity="0.56"/><ellipse cx="46.9" cy="702.3" rx="4.9" ry="0.9" transform="rotate(3 46.9 702.3)" fill="#3d5566" opacity="0.65"/><ellipse cx="99.2" cy="771.1" rx="12.8" ry="1.6" transform="rotate(13 99.2 771.1)" fill="#4a5a68" opacity="0.33"/><ellipse cx="102.5" cy="705.5" rx="11.2" ry="1.5" transform="rotate(7 102.5 705.5)" fill="#2a3a48" opacity="0.50"/><ellipse cx="82.2" cy="868.4" rx="7.1" ry="0.8" transform="rotate(0 82.2 868.4)" fill="#4a5a68" opacity="0.38"/><ellipse cx="15.4" cy="865.7" rx="11.9" ry="1.4" transform="rotate(10 15.4 865.7)" fill="#3d5566" opacity="0.46"/><ellipse cx="27.6" cy="816.1" rx="13.6" ry="1.9" transform="rotate(-2 27.6 816.1)" fill="#34485a" opacity="0.45"/><ellipse cx="77.5" cy="757.9" rx="5.6" ry="1.5" transform="rotate(25 77.5 757.9)" fill="#2a3a48" opacity="0.58"/><ellipse cx="132.5" cy="750.7" rx="6.0" ry="1.4" transform="rotate(8 132.5 750.7)" fill="#34485a" opacity="0.63"/><ellipse cx="47.4" cy="795.2" rx="12.1" ry="1.8" transform="rotate(25 47.4 795.2)" fill="#4a5a68" opacity="0.48"/><ellipse cx="1.2" cy="705.8" rx="14.5" ry="0.9" transform="rotate(21 1.2 705.8)" fill="#4a5a68" opacity="0.44"/><ellipse cx="87.4" cy="803.2" rx="11.7" ry="1.4" transform="rotate(-2 87.4 803.2)" fill="#3d5566" opacity="0.39"/><ellipse cx="11.1" cy="708.6" rx="11.6" ry="1.4" transform="rotate(19 11.1 708.6)" fill="#3d5566" opacity="0.68"/><ellipse cx="92.7" cy="736.5" rx="9.7" ry="1.1" transform="rotate(0 92.7 736.5)" fill="#243240" opacity="0.51"/><ellipse cx="-4.6" cy="741.4" rx="13.3" ry="1.6" transform="rotate(28 -4.6 741.4)" fill="#4a5a68" opacity="0.55"/><ellipse cx="103.4" cy="772.0" rx="13.5" ry="2.1" transform="rotate(3 103.4 772.0)" fill="#243240" opacity="0.35"/><ellipse cx="58.0" cy="814.5" rx="14.9" ry="1.3" transform="rotate(5 58.0 814.5)" fill="#4a5a68" opacity="0.62"/><ellipse cx="131.6" cy="784.9" rx="11.8" ry="1.1" transform="rotate(22 131.6 784.9)" fill="#2a3a48" opacity="0.39"/><ellipse cx="125.0" cy="879.4" rx="15.7" ry="1.6" transform="rotate(8 125.0 879.4)" fill="#3d5566" opacity="0.40"/><ellipse cx="97.7" cy="702.9" rx="10.1" ry="0.9" transform="rotate(10 97.7 702.9)" fill="#243240" opacity="0.61"/><ellipse cx="63.1" cy="705.2" rx="13.7" ry="0.9" transform="rotate(24 63.1 705.2)" fill="#34485a" opacity="0.51"/><ellipse cx="93.0" cy="867.6" rx="9.6" ry="2.2" transform="rotate(10 93.0 867.6)" fill="#4a5a68" opacity="0.64"/><ellipse cx="93.4" cy="873.1" rx="9.9" ry="2.1" transform="rotate(-4 93.4 873.1)" fill="#34485a" opacity="0.48"/><ellipse cx="73.8" cy="852.1" rx="10.7" ry="1.0" transform="rotate(4 73.8 852.1)" fill="#4a5a68" opacity="0.40"/><ellipse cx="90.7" cy="874.7" rx="14.4" ry="1.7" transform="rotate(0 90.7 874.7)" fill="#34485a" opacity="0.69"/><ellipse cx="68.6" cy="804.9" rx="6.4" ry="1.6" transform="rotate(4 68.6 804.9)" fill="#4a5a68" opacity="0.45"/><ellipse cx="70.7" cy="708.0" rx="15.0" ry="1.6" transform="rotate(30 70.7 708.0)" fill="#2a3a48" opacity="0.50"/><ellipse cx="93.6" cy="712.1" rx="10.5" ry="1.4" transform="rotate(29 93.6 712.1)" fill="#243240" opacity="0.41"/><ellipse cx="61.0" cy="723.2" rx="9.2" ry="1.9" transform="rotate(27 61.0 723.2)" fill="#243240" opacity="0.51"/><ellipse cx="6.3" cy="776.8" rx="4.4" ry="1.2" transform="rotate(21 6.3 776.8)" fill="#2a3a48" opacity="0.31"/><ellipse cx="13.3" cy="702.2" rx="7.4" ry="1.8" transform="rotate(7 13.3 702.2)" fill="#243240" opacity="0.34"/><ellipse cx="99.6" cy="722.5" rx="10.1" ry="1.2" transform="rotate(6 99.6 722.5)" fill="#4a5a68" opacity="0.65"/><ellipse cx="-6.5" cy="815.8" rx="13.9" ry="1.7" transform="rotate(4 -6.5 815.8)" fill="#4a5a68" opacity="0.56"/><ellipse cx="69.4" cy="855.8" rx="11.3" ry="2.0" transform="rotate(-1 69.4 855.8)" fill="#3d5566" opacity="0.66"/><ellipse cx="37.4" cy="757.6" rx="15.1" ry="1.1" transform="rotate(30 37.4 757.6)" fill="#2a3a48" opacity="0.35"/><ellipse cx="25.9" cy="833.0" rx="7.1" ry="0.9" transform="rotate(9 25.9 833.0)" fill="#243240" opacity="0.52"/><ellipse cx="95.7" cy="736.7" rx="11.5" ry="1.9" transform="rotate(3 95.7 736.7)" fill="#4a5a68" opacity="0.57"/><ellipse cx="126.7" cy="877.2" rx="5.4" ry="1.5" transform="rotate(8 126.7 877.2)" fill="#4a5a68" opacity="0.70"/><ellipse cx="114.9" cy="846.9" rx="9.8" ry="0.8" transform="rotate(8 114.9 846.9)" fill="#4a5a68" opacity="0.51"/><ellipse cx="75.3" cy="726.8" rx="6.2" ry="1.1" transform="rotate(25 75.3 726.8)" fill="#3d5566" opacity="0.67"/><ellipse cx="4.3" cy="711.3" rx="15.4" ry="1.4" transform="rotate(23 4.3 711.3)" fill="#3d5566" opacity="0.46"/><ellipse cx="54.0" cy="764.9" rx="6.5" ry="1.3" transform="rotate(19 54.0 764.9)" fill="#2a3a48" opacity="0.64"/><ellipse cx="17.2" cy="783.1" rx="12.9" ry="1.4" transform="rotate(6 17.2 783.1)" fill="#34485a" opacity="0.34"/><ellipse cx="108.9" cy="759.2" rx="5.0" ry="2.0" transform="rotate(26 108.9 759.2)" fill="#243240" opacity="0.53"/><ellipse cx="18.6" cy="807.0" rx="8.1" ry="1.9" transform="rotate(-0 18.6 807.0)" fill="#2a3a48" opacity="0.60"/><ellipse cx="106.7" cy="849.1" rx="8.9" ry="2.1" transform="rotate(10 106.7 849.1)" fill="#3d5566" opacity="0.61"/><ellipse cx="104.8" cy="774.3" rx="12.7" ry="0.9" transform="rotate(10 104.8 774.3)" fill="#243240" opacity="0.34"/><ellipse cx="123.2" cy="881.3" rx="14.8" ry="0.9" transform="rotate(-0 123.2 881.3)" fill="#3d5566" opacity="0.44"/><ellipse cx="89.0" cy="804.2" rx="10.4" ry="1.3" transform="rotate(12 89.0 804.2)" fill="#34485a" opacity="0.58"/><ellipse cx="104.3" cy="879.4" rx="4.3" ry="1.7" transform="rotate(8 104.3 879.4)" fill="#3d5566" opacity="0.48"/><ellipse cx="65.7" cy="839.3" rx="11.8" ry="0.8" transform="rotate(-1 65.7 839.3)" fill="#3d5566" opacity="0.66"/><ellipse cx="72.5" cy="792.9" rx="15.6" ry="1.6" transform="rotate(30 72.5 792.9)" fill="#243240" opacity="0.62"/><ellipse cx="1.4" cy="809.3" rx="13.1" ry="0.9" transform="rotate(11 1.4 809.3)" fill="#34485a" opacity="0.45"/><ellipse cx="135.5" cy="856.6" rx="10.5" ry="1.6" transform="rotate(2 135.5 856.6)" fill="#243240" opacity="0.47"/><ellipse cx="69.0" cy="809.4" rx="8.4" ry="1.2" transform="rotate(6 69.0 809.4)" fill="#4a5a68" opacity="0.67"/><ellipse cx="89.5" cy="836.8" rx="4.3" ry="1.9" transform="rotate(5 89.5 836.8)" fill="#34485a" opacity="0.46"/><ellipse cx="92.6" cy="709.7" rx="7.8" ry="1.4" transform="rotate(17 92.6 709.7)" fill="#3d5566" opacity="0.33"/><ellipse cx="125.8" cy="778.6" rx="9.7" ry="2.2" transform="rotate(7 125.8 778.6)" fill="#4a5a68" opacity="0.34"/><ellipse cx="111.5" cy="866.4" rx="5.7" ry="2.1" transform="rotate(-1 111.5 866.4)" fill="#2a3a48" opacity="0.32"/><ellipse cx="52.6" cy="721.6" rx="14.3" ry="1.3" transform="rotate(5 52.6 721.6)" fill="#3d5566" opacity="0.48"/><ellipse cx="90.2" cy="783.4" rx="7.1" ry="1.6" transform="rotate(13 90.2 783.4)" fill="#4a5a68" opacity="0.63"/><ellipse cx="10.5" cy="753.1" rx="5.5" ry="1.5" transform="rotate(15 10.5 753.1)" fill="#3d5566" opacity="0.61"/><ellipse cx="83.7" cy="765.7" rx="7.3" ry="1.8" transform="rotate(17 83.7 765.7)" fill="#4a5a68" opacity="0.38"/><ellipse cx="31.8" cy="743.8" rx="15.4" ry="1.5" transform="rotate(20 31.8 743.8)" fill="#34485a" opacity="0.65"/><ellipse cx="155.0" cy="857.6" rx="7.8" ry="1.1" transform="rotate(4 155.0 857.6)" fill="#2a3a48" opacity="0.33"/><ellipse cx="288.0" cy="876.4" rx="16.8" ry="0.8" transform="rotate(-1 288.0 876.4)" fill="#3d5566" opacity="0.42"/><ellipse cx="330.2" cy="865.1" rx="10.9" ry="0.8" transform="rotate(8 330.2 865.1)" fill="#2a3a48" opacity="0.41"/><ellipse cx="590.9" cy="878.6" rx="14.8" ry="1.1" transform="rotate(6 590.9 878.6)" fill="#243240" opacity="0.53"/><ellipse cx="338.5" cy="873.6" rx="17.8" ry="1.0" transform="rotate(3 338.5 873.6)" fill="#34485a" opacity="0.40"/><ellipse cx="338.7" cy="858.6" rx="16.3" ry="0.7" transform="rotate(-4 338.7 858.6)" fill="#5a6a78" opacity="0.45"/><ellipse cx="587.1" cy="868.5" rx="15.5" ry="0.6" transform="rotate(-0 587.1 868.5)" fill="#5a6a78" opacity="0.28"/><ellipse cx="302.2" cy="875.6" rx="13.7" ry="0.9" transform="rotate(-3 302.2 875.6)" fill="#3d5566" opacity="0.48"/><ellipse cx="315.2" cy="880.5" rx="8.5" ry="1.1" transform="rotate(4 315.2 880.5)" fill="#3d5566" opacity="0.40"/><ellipse cx="580.3" cy="864.2" rx="8.4" ry="1.1" transform="rotate(9 580.3 864.2)" fill="#5a6a78" opacity="0.34"/><ellipse cx="334.5" cy="865.9" rx="9.1" ry="1.1" transform="rotate(1 334.5 865.9)" fill="#34485a" opacity="0.51"/><ellipse cx="338.1" cy="866.5" rx="6.2" ry="1.3" transform="rotate(-2 338.1 866.5)" fill="#2a3a48" opacity="0.52"/><ellipse cx="623.7" cy="863.6" rx="4.3" ry="1.2" transform="rotate(3 623.7 863.6)" fill="#5a6a78" opacity="0.35"/><ellipse cx="145.4" cy="878.7" rx="9.9" ry="1.3" transform="rotate(-0 145.4 878.7)" fill="#5a6a78" opacity="0.28"/><ellipse cx="178.5" cy="875.9" rx="16.6" ry="0.7" transform="rotate(5 178.5 875.9)" fill="#34485a" opacity="0.28"/><ellipse cx="587.7" cy="867.4" rx="14.0" ry="1.2" transform="rotate(9 587.7 867.4)" fill="#3d5566" opacity="0.52"/><ellipse cx="352.7" cy="865.1" rx="17.6" ry="1.4" transform="rotate(2 352.7 865.1)" fill="#5a6a78" opacity="0.53"/><ellipse cx="173.4" cy="872.7" rx="4.6" ry="1.5" transform="rotate(10 173.4 872.7)" fill="#3d5566" opacity="0.55"/><ellipse cx="581.9" cy="878.5" rx="16.4" ry="1.7" transform="rotate(5 581.9 878.5)" fill="#5a6a78" opacity="0.38"/><ellipse cx="138.7" cy="859.0" rx="16.9" ry="1.7" transform="rotate(-1 138.7 859.0)" fill="#34485a" opacity="0.60"/><ellipse cx="342.2" cy="860.5" rx="6.9" ry="1.1" transform="rotate(-1 342.2 860.5)" fill="#2a3a48" opacity="0.42"/><ellipse cx="540.0" cy="864.2" rx="6.2" ry="1.7" transform="rotate(9 540.0 864.2)" fill="#243240" opacity="0.26"/><ellipse cx="401.0" cy="877.6" rx="8.4" ry="0.8" transform="rotate(0 401.0 877.6)" fill="#5a6a78" opacity="0.33"/><ellipse cx="532.5" cy="872.1" rx="7.1" ry="0.8" transform="rotate(-1 532.5 872.1)" fill="#34485a" opacity="0.57"/><ellipse cx="655.1" cy="872.9" rx="17.2" ry="1.3" transform="rotate(8 655.1 872.9)" fill="#243240" opacity="0.56"/><ellipse cx="642.2" cy="865.2" rx="11.7" ry="1.7" transform="rotate(2 642.2 865.2)" fill="#34485a" opacity="0.39"/><ellipse cx="254.1" cy="859.6" rx="15.2" ry="1.8" transform="rotate(7 254.1 859.6)" fill="#3d5566" opacity="0.53"/><ellipse cx="165.3" cy="881.0" rx="16.5" ry="1.6" transform="rotate(9 165.3 881.0)" fill="#243240" opacity="0.53"/><ellipse cx="530.3" cy="872.4" rx="6.2" ry="0.8" transform="rotate(-0 530.3 872.4)" fill="#3d5566" opacity="0.57"/><ellipse cx="584.2" cy="859.5" rx="14.4" ry="1.3" transform="rotate(3 584.2 859.5)" fill="#2a3a48" opacity="0.30"/><ellipse cx="562.1" cy="856.0" rx="15.5" ry="1.6" transform="rotate(7 562.1 856.0)" fill="#2a3a48" opacity="0.37"/><ellipse cx="475.5" cy="870.3" rx="16.5" ry="1.4" transform="rotate(-4 475.5 870.3)" fill="#5a6a78" opacity="0.44"/><ellipse cx="414.8" cy="856.5" rx="6.6" ry="0.8" transform="rotate(5 414.8 856.5)" fill="#243240" opacity="0.32"/><ellipse cx="435.7" cy="870.2" rx="6.2" ry="1.6" transform="rotate(-0 435.7 870.2)" fill="#3d5566" opacity="0.39"/><ellipse cx="442.9" cy="882.9" rx="13.3" ry="0.7" transform="rotate(-4 442.9 882.9)" fill="#34485a" opacity="0.29"/><ellipse cx="352.6" cy="868.5" rx="17.5" ry="1.6" transform="rotate(5 352.6 868.5)" fill="#2a3a48" opacity="0.55"/><ellipse cx="529.5" cy="868.8" rx="8.1" ry="0.7" transform="rotate(7 529.5 868.8)" fill="#34485a" opacity="0.57"/><ellipse cx="217.7" cy="872.9" rx="17.1" ry="1.5" transform="rotate(9 217.7 872.9)" fill="#243240" opacity="0.44"/><ellipse cx="181.4" cy="861.1" rx="9.3" ry="0.7" transform="rotate(-0 181.4 861.1)" fill="#3d5566" opacity="0.45"/><ellipse cx="536.2" cy="865.0" rx="15.6" ry="0.7" transform="rotate(-3 536.2 865.0)" fill="#2a3a48" opacity="0.30"/><ellipse cx="484.1" cy="860.8" rx="6.7" ry="0.6" transform="rotate(2 484.1 860.8)" fill="#2a3a48" opacity="0.29"/><ellipse cx="151.0" cy="882.7" rx="10.1" ry="1.5" transform="rotate(0 151.0 882.7)" fill="#243240" opacity="0.57"/><ellipse cx="210.5" cy="861.5" rx="6.1" ry="1.4" transform="rotate(2 210.5 861.5)" fill="#243240" opacity="0.47"/><ellipse cx="537.9" cy="872.6" rx="8.4" ry="1.5" transform="rotate(-1 537.9 872.6)" fill="#5a6a78" opacity="0.44"/><ellipse cx="278.2" cy="861.1" rx="8.3" ry="1.1" transform="rotate(3 278.2 861.1)" fill="#34485a" opacity="0.43"/><ellipse cx="572.2" cy="878.3" rx="12.6" ry="0.8" transform="rotate(6 572.2 878.3)" fill="#3d5566" opacity="0.44"/><ellipse cx="329.4" cy="869.5" rx="6.0" ry="1.5" transform="rotate(10 329.4 869.5)" fill="#5a6a78" opacity="0.60"/><ellipse cx="526.7" cy="881.3" rx="11.9" ry="0.6" transform="rotate(5 526.7 881.3)" fill="#2a3a48" opacity="0.30"/><ellipse cx="399.2" cy="867.3" rx="8.7" ry="0.7" transform="rotate(8 399.2 867.3)" fill="#3d5566" opacity="0.41"/><ellipse cx="202.1" cy="882.3" rx="5.9" ry="1.7" transform="rotate(3 202.1 882.3)" fill="#5a6a78" opacity="0.27"/><ellipse cx="642.7" cy="860.6" rx="14.4" ry="1.7" transform="rotate(0 642.7 860.6)" fill="#34485a" opacity="0.29"/><ellipse cx="592.3" cy="863.8" rx="16.6" ry="0.9" transform="rotate(4 592.3 863.8)" fill="#34485a" opacity="0.31"/><ellipse cx="438.2" cy="858.1" rx="4.4" ry="0.8" transform="rotate(10 438.2 858.1)" fill="#34485a" opacity="0.36"/><ellipse cx="506.9" cy="875.9" rx="9.3" ry="1.3" transform="rotate(7 506.9 875.9)" fill="#2a3a48" opacity="0.31"/><ellipse cx="362.5" cy="856.9" rx="11.4" ry="0.7" transform="rotate(1 362.5 856.9)" fill="#3d5566" opacity="0.43"/><ellipse cx="279.9" cy="871.3" rx="8.6" ry="1.4" transform="rotate(-4 279.9 871.3)" fill="#34485a" opacity="0.39"/><ellipse cx="410.1" cy="858.8" rx="8.8" ry="1.7" transform="rotate(9 410.1 858.8)" fill="#5a6a78" opacity="0.52"/><ellipse cx="551.7" cy="869.1" rx="17.9" ry="1.6" transform="rotate(8 551.7 869.1)" fill="#243240" opacity="0.54"/><ellipse cx="198.4" cy="859.1" rx="17.1" ry="1.0" transform="rotate(3 198.4 859.1)" fill="#243240" opacity="0.57"/><ellipse cx="311.6" cy="857.5" rx="14.2" ry="1.7" transform="rotate(6 311.6 857.5)" fill="#5a6a78" opacity="0.36"/></g><rect x="930" y="260" width="26" height="623" fill="url(#rs)"/></svg><div class="win" style="left:15px;top:25px"><div class="in"><div class="title">Plain Text Mode.stc *</div><svg class="ov" width="804" height="110" viewBox="0 0 804 110"><path d="M736.8 15 L740 18.2 L743.2 15 M760.8 18.2 L764 15 L767.2 18.2 " fill="none" stroke="#6b6b6b" stroke-width="2" stroke-linecap="butt"/><path d="M785.2 13.2 L790.8 18.8 M790.8 13.2 L785.2 18.8" fill="none" stroke="#6b6b6b" stroke-width="2.2" stroke-linecap="round"/><path d="M30.5 72.4 H19 Q16.25 72.4 16.25 75.2 V88.8 Q16.25 91.6 19 91.6 H32.3 Q35.1 91.6 35.1 88.8 V77.2" fill="none" stroke="#666" stroke-width="1.5"/><path d="M23.2 84.5 L35.2 72.6" stroke="#666" stroke-width="1.8" stroke-linecap="round"/><path d="M37.5 69.2 L38.7 70.4 L37.5 71.6 L36.3 70.4 Z" fill="#666"/><path d="M107.5 88 V73.5 Q107.5 71.2 109.8 71.2 H113.5 Q114.8 71.2 115.6 72.1 L116.6 73 H130 Q132.5 73 132.5 75.5 V88 Q132.5 90.5 130 90.5 H110 Q107.5 90.5 107.5 88 Z M107.5 77.8 H132.5" fill="none" stroke="#666" stroke-width="1.5" stroke-linejoin="round"/><path d="M206.5 85.5 L211.5 73.5 Q212.3 71.5 214.5 71.5 H223.5 Q225.7 71.5 226.5 73.5 L231.5 85.5" fill="none" stroke="#666" stroke-width="1.5" stroke-linejoin="round"/><rect x="206.5" y="81" width="25.5" height="9.3" rx="4.6" fill="none" stroke="#666" stroke-width="1.5"/><path d="M216.6 84.3 V87" stroke="#666" stroke-width="0.9"/><path d="M219.2 84.3 V87" stroke="#666" stroke-width="0.9"/><path d="M221.8 84.3 V87" stroke="#666" stroke-width="0.9"/><path d="M224.4 84.3 V87" stroke="#666" stroke-width="0.9"/><path d="M227.2 84.3 V87" stroke="#666" stroke-width="0.9"/><g fill="none" stroke="#666" stroke-width="1.6" stroke-linecap="round" stroke-linejoin="round"><path d="M321.7 66.5 L338.2 95.2"/><path d="M319.4 74.4 H322.3 M330.3 74.4 H340.5 M334.2 68.3 L340.5 74.4 L334.2 80.4"/><path d="M319.6 88 H330.5 M337.5 88 H340.5 M325.9 81.8 L319.6 88 L325.9 94.1"/></g><g fill="none" stroke="#666" stroke-width="1.6" stroke-linejoin="round"><path d="M478.6 80.5 V70.6 Q478.6 68 481.2 68 H488.2 L496.5 76.3 V89 Q496.5 91.8 493.7 91.8 H486"/><path d="M488.2 68 V75 Q488.2 76.8 490 76.8 H496.5"/></g><rect x="482.30" y="87.90" width="2.6" height="2.6" transform="rotate(0 483.60 89.20)" fill="#666"/><rect x="480.84" y="91.44" width="2.6" height="2.6" transform="rotate(45 482.14 92.74)" fill="#666"/><rect x="477.30" y="92.90" width="2.6" height="2.6" transform="rotate(90 478.60 94.20)" fill="#666"/><rect x="473.76" y="91.44" width="2.6" height="2.6" transform="rotate(135 475.06 92.74)" fill="#666"/><rect x="472.30" y="87.90" width="2.6" height="2.6" transform="rotate(180 473.60 89.20)" fill="#666"/><rect x="473.76" y="84.36" width="2.6" height="2.6" transform="rotate(225 475.06 85.66)" fill="#666"/><rect x="477.30" y="82.90" width="2.6" height="2.6" transform="rotate(270 478.60 84.20)" fill="#666"/><rect x="480.84" y="84.36" width="2.6" height="2.6" transform="rotate(315 482.14 85.66)" fill="#666"/><circle cx="478.6" cy="89.2" r="3.3" fill="none" stroke="#666" stroke-width="2.6"/><path d="M606 70.8 L626 91 M626 70.8 L606 91" stroke="#666" stroke-width="1.6" stroke-linecap="round"/><path d="M780 79 H790 L785 84 Z" fill="#333"/></svg><div class="menu" style="left:10px">File</div><div class="menu" style="left:51px">Edit</div><div class="menu" style="left:94px">Connection</div><div class="menu" style="left:190.5px">Macros</div><div class="menu" style="left:259px">View</div><div class="menu" style="left:309.5px">Remote</div><div class="menu" style="left:380.3px">Window</div><div class="menu" style="left:453px">Help</div><div class="tool" style="left:55.5px">New</div><div class="tool" style="left:148px">Open</div><div class="tool" style="left:247px">Save</div><div class="tool" style="left:359px">Disconnect</div><div class="tool" style="left:513px">Options</div><div class="tool" style="left:644.5px">Clear Data</div><div style="position:absolute;left:1px;top:101px;width:801px;height:425px;background:#fff;border-top:1px solid #c4c4c4;border-bottom:1px solid #c4c4c4;border-left:1px solid #e0e0e0"></div><div class="mono" style="position:absolute;left:4px;top:102px;line-height:20px">This is a test</div><svg class="ov" style="top:545px" width="40" height="20"><path d="M9.5 7 L14 11.5 L18.5 7" fill="none" stroke="#333" stroke-width="2"/></svg><div class="st" style="top:536px">/dev/ttyAMA0 / 115200 8-N-1</div><div class="st" style="top:554px">Connected 00:01:58, 33,256 / 33,256 bytes</div></div></div><div class="win" style="left:73px;top:147px"><div class="in"><div class="title">Hex Mode.stc *</div><svg class="ov" width="804" height="110" viewBox="0 0 804 110"><path d="M736.8 15 L740 18.2 L743.2 15 M760.8 18.2 L764 15 L767.2 18.2 " fill="none" stroke="#6b6b6b" stroke-width="2" stroke-linecap="butt"/><path d="M785.2 13.2 L790.8 18.8 M790.8 13.2 L785.2 18.8" fill="none" stroke="#6b6b6b" stroke-width="2.2" stroke-linecap="round"/><path d="M30.5 72.4 H19 Q16.25 72.4 16.25 75.2 V88.8 Q16.25 91.6 19 91.6 H32.3 Q35.1 91.6 35.1 88.8 V77.2" fill="none" stroke="#666" stroke-width="1.5"/><path d="M23.2 84.5 L35.2 72.6" stroke="#666" stroke-width="1.8" stroke-linecap="round"/><path d="M37.5 69.2 L38.7 70.4 L37.5 71.6 L36.3 70.4 Z" fill="#666"/><path d="M107.5 88 V73.5 Q107.5 71.2 109.8 71.2 H113.5 Q114.8 71.2 115.6 72.1 L116.6 73 H130 Q132.5 73 132.5 75.5 V88 Q132.5 90.5 130 90.5 H110 Q107.5 90.5 107.5 88 Z M107.5 77.8 H132.5" fill="none" stroke="#666" stroke-width="1.5" stroke-linejoin="round"/><path d="M206.5 85.5 L211.5 73.5 Q212.3 71.5 214.5 71.5 H223.5 Q225.7 71.5 226.5 73.5 L231.5 85.5" fill="none" stroke="#666" stroke-width="1.5" stroke-linejoin="round"/><rect x="206.5" y="81" width="25.5" height="9.3" rx="4.6" fill="none" stroke="#666" stroke-width="1.5"/><path d="M216.6 84.3 V87" stroke="#666" stroke-width="0.9"/><path d="M219.2 84.3 V87" stroke="#666" stroke-width="0.9"/><path d="M221.8 84.3 V87" stroke="#666" stroke-width="0.9"/><path d="M224.4 84.3 V87" stroke="#666" stroke-width="0.9"/><path d="M227.2 84.3 V87" stroke="#666" stroke-width="0.9"/><g fill="none" stroke="#666" stroke-width="1.6" stroke-linecap="round" stroke-linejoin="round"><path d="M321.7 66.5 L338.2 95.2"/><path d="M319.4 74.4 H322.3 M330.3 74.4 H340.5 M334.2 68.3 L340.5 74.4 L334.2 80.4"/><path d="M319.6 88 H330.5 M337.5 88 H340.5 M325.9 81.8 L319.6 88 L325.9 94.1"/></g><g fill="none" stroke="#666" stroke-width="1.6" stroke-linejoin="round"><path d="M478.6 80.5 V70.6 Q478.6 68 481.2 68 H488.2 L496.5 76.3 V89 Q496.5 91.8 493.7 91.8 H486"/><path d="M488.2 68 V75 Q488.2 76.8 490 76.8 H496.5"/></g><rect x="482.30" y="87.90" width="2.6" height="2.6" transform="rotate(0 483.60 89.20)" fill="#666"/><rect x="480.84" y="91.44" width="2.6" height="2.6" transform="rotate(45 482.14 92.74)" fill="#666"/><rect x="477.30" y="92.90" width="2.6" height="2.6" transform="rotate(90 478.60 94.20)" fill="#666"/><rect x="473.76" y="91.44" width="2.6" height="2.6" transform="rotate(135 475.06 92.74)" fill="#666"/><rect x="472.30" y="87.90" width="2.6" height="2.6" transform="rotate(180 473.60 89.20)" fill="#666"/><rect x="473.76" y="84.36" width="2.6" height="2.6" transform="rotate(225 475.06 85.66)" fill="#666"/><rect x="477.30" y="82.90" width="2.6" height="2.6" transform="rotate(270 478.60 84.20)" fill="#666"/><rect x="480.84" y="84.36" width="2.6" height="2.6" transform="rotate(315 482.14 85.66)" fill="#666"/><circle cx="478.6" cy="89.2" r="3.3" fill="none" stroke="#666" stroke-width="2.6"/><path d="M606 70.8 L626 91 M626 70.8 L606 91" stroke="#666" stroke-width="1.6" stroke-linecap="round"/><path d="M780 79 H790 L785 84 Z" fill="#333"/></svg><div class="menu" style="left:10px">File</div><div class="menu" style="left:51px">Edit</div><div class="menu" style="left:94px">Connection</div><div class="menu" style="left:190.5px">Macros</div><div class="menu" style="left:259px">View</div><div class="menu" style="left:309.5px">Remote</div><div class="menu" style="left:380.3px">Window</div><div class="menu" style="left:453px">Help</div><div class="tool" style="left:55.5px">New</div><div class="tool" style="left:148px">Open</div><div class="tool" style="left:247px">Save</div><div class="tool" style="left:359px">Disconnect</div><div class="tool" style="left:513px">Options</div><div class="tool" style="left:644.5px">Clear Data</div><div style="position:absolute;left:1px;top:101px;width:785px;height:423px;background:#fff;border:1px solid #c4c4c4;border-left:none;overflow:hidden"><div style="position:absolute;left:0;top:0px;width:784px;height:23px;background:#eef2fd"></div><div style="position:absolute;left:0;top:23px;width:784px;height:23px;background:#ffffff"></div><div style="position:absolute;left:0;top:46px;width:784px;height:23px;background:#eef2fd"></div><div style="position:absolute;left:0;top:69px;width:784px;height:23px;background:#ffffff"></div><div style="position:absolute;left:0;top:92px;width:784px;height:23px;background:#eef2fd"></div><div style="position:absolute;left:0;top:115px;width:784px;height:23px;background:#ffffff"></div><div style="position:absolute;left:0;top:138px;width:784px;height:23px;background:#eef2fd"></div><div style="position:absolute;left:0;top:161px;width:784px;height:23px;background:#ffffff"></div><div style="position:absolute;left:0;top:184px;width:784px;height:23px;background:#eef2fd"></div><div style="position:absolute;left:0;top:207px;width:784px;height:23px;background:#ffffff"></div><div style="position:absolute;left:0;top:230px;width:784px;height:23px;background:#eef2fd"></div><div style="position:absolute;left:0;top:253px;width:784px;height:23px;background:#ffffff"></div><div style="position:absolute;left:0;top:276px;width:784px;height:23px;background:#eef2fd"></div><div style="position:absolute;left:0;top:299px;width:784px;height:23px;background:#ffffff"></div><div style="position:absolute;left:0;top:322px;width:784px;height:23px;background:#eef2fd"></div><div style="position:absolute;left:0;top:345px;width:784px;height:23px;background:#ffffff"></div><div style="position:absolute;left:0;top:368px;width:784px;height:23px;background:#eef2fd"></div><div style="position:absolute;left:0;top:391px;width:784px;height:23px;background:#ffffff"></div><div style="position:absolute;left:0;top:414px;width:784px;height:23px;background:#eef2fd"></div><div style="position:absolute;left:0;top:437px;width:784px;height:23px;background:#ffffff"></div><div style="position:absolute;left:579px;top:0;width:1px;height:23px;background:#d0d0d0"></div></div><div class="mono" style="position:absolute;left:11px;top:104px;line-height:20px">54 68 69 73 20 69 73 20 61 20 74 65 73 74</div><div class="mono" style="position:absolute;left:590px;top:104px;line-height:20px">This is a test</div><div style="position:absolute;left:787px;top:102px;width:15px;height:421px;background:#dedede"></div><svg class="ov" style="top:102px;left:787px" width="15" height="20"><path d="M12 4.6 L15.2 9.3 H8.8 Z" fill="#b4b4b4"/></svg><div style="position:absolute;left:1px;top:523px;width:802px;height:1px;background:#c4c4c4"></div><svg class="ov" style="top:545px" width="40" height="20"><path d="M9.5 7 L14 11.5 L18.5 7" fill="none" stroke="#333" stroke-width="2"/></svg><div class="st" style="top:536px">/dev/ttyAMA0 / 115200 8-N-1</div><div class="st" style="top:554px">Connected 00:01:58, 33,256 / 33,256 bytes</div></div></div><div class="win" style="left:133px;top:271px"><div class="in"><div class="title">Chart Mode.stc *</div><svg class="ov" width="804" height="110" viewBox="0 0 804 110"><path d="M736.8 15 L740 18.2 L743.2 15 M760.8 18.2 L764 15 L767.2 18.2 " fill="none" stroke="#6b6b6b" stroke-width="2" stroke-linecap="butt"/><path d="M785.2 13.2 L790.8 18.8 M790.8 13.2 L785.2 18.8" fill="none" stroke="#6b6b6b" stroke-width="2.2" stroke-linecap="round"/><path d="M30.5 72.4 H19 Q16.25 72.4 16.25 75.2 V88.8 Q16.25 91.6 19 91.6 H32.3 Q35.1 91.6 35.1 88.8 V77.2" fill="none" stroke="#666" stroke-width="1.5"/><path d="M23.2 84.5 L35.2 72.6" stroke="#666" stroke-width="1.8" stroke-linecap="round"/><path d="M37.5 69.2 L38.7 70.4 L37.5 71.6 L36.3 70.4 Z" fill="#666"/><path d="M107.5 88 V73.5 Q107.5 71.2 109.8 71.2 H113.5 Q114.8 71.2 115.6 72.1 L116.6 73 H130 Q132.5 73 132.5 75.5 V88 Q132.5 90.5 130 90.5 H110 Q107.5 90.5 107.5 88 Z M107.5 77.8 H132.5" fill="none" stroke="#666" stroke-width="1.5" stroke-linejoin="round"/><path d="M206.5 85.5 L211.5 73.5 Q212.3 71.5 214.5 71.5 H223.5 Q225.7 71.5 226.5 73.5 L231.5 85.5" fill="none" stroke="#666" stroke-width="1.5" stroke-linejoin="round"/><rect x="206.5" y="81" width="25.5" height="9.3" rx="4.6" fill="none" stroke="#666" stroke-width="1.5"/><path d="M216.6 84.3 V87" stroke="#666" stroke-width="0.9"/><path d="M219.2 84.3 V87" stroke="#666" stroke-width="0.9"/><path d="M221.8 84.3 V87" stroke="#666" stroke-width="0.9"/><path d="M224.4 84.3 V87" stroke="#666" stroke-width="0.9"/><path d="M227.2 84.3 V87" stroke="#666" stroke-width="0.9"/><g fill="none" stroke="#666" stroke-width="1.6" stroke-linecap="round" stroke-linejoin="round"><path d="M321.7 66.5 L338.2 95.2"/><path d="M319.4 74.4 H322.3 M330.3 74.4 H340.5 M334.2 68.3 L340.5 74.4 L334.2 80.4"/><path d="M319.6 88 H330.5 M337.5 88 H340.5 M325.9 81.8 L319.6 88 L325.9 94.1"/></g><g fill="none" stroke="#666" stroke-width="1.6" stroke-linejoin="round"><path d="M478.6 80.5 V70.6 Q478.6 68 481.2 68 H488.2 L496.5 76.3 V89 Q496.5 91.8 493.7 91.8 H486"/><path d="M488.2 68 V75 Q488.2 76.8 490 76.8 H496.5"/></g><rect x="482.30" y="87.90" width="2.6" height="2.6" transform="rotate(0 483.60 89.20)" fill="#666"/><rect x="480.84" y="91.44" width="2.6" height="2.6" transform="rotate(45 482.14 92.74)" fill="#666"/><rect x="477.30" y="92.90" width="2.6" height="2.6" transform="rotate(90 478.60 94.20)" fill="#666"/><rect x="473.76" y="91.44" width="2.6" height="2.6" transform="rotate(135 475.06 92.74)" fill="#666"/><rect x="472.30" y="87.90" width="2.6" height="2.6" transform="rotate(180 473.60 89.20)" fill="#666"/><rect x="473.76" y="84.36" width="2.6" height="2.6" transform="rotate(225 475.06 85.66)" fill="#666"/><rect x="477.30" y="82.90" width="2.6" height="2.6" transform="rotate(270 478.60 84.20)" fill="#666"/><rect x="480.84" y="84.36" width="2.6" height="2.6" transform="rotate(315 482.14 85.66)" fill="#666"/><circle cx="478.6" cy="89.2" r="3.3" fill="none" stroke="#666" stroke-width="2.6"/><path d="M606 70.8 L626 91 M626 70.8 L606 91" stroke="#666" stroke-width="1.6" stroke-linecap="round"/><path d="M780 79 H790 L785 84 Z" fill="#333"/></svg><div class="menu" style="left:10px">File</div><div class="menu" style="left:51px">Edit</div><div class="menu" style="left:94px">Connection</div><div class="menu" style="left:190.5px">Macros</div><div class="menu" style="left:259px">View</div><div class="menu" style="left:309.5px">Remote</div><div class="menu" style="left:380.3px">Window</div><div class="menu" style="left:453px">Help</div><div class="tool" style="left:55.5px">New</div><div class="tool" style="left:148px">Open</div><div class="tool" style="left:247px">Save</div><div class="tool" style="left:359px">Disconnect</div><div class="tool" style="left:513px">Options</div><div class="tool" style="left:644.5px">Clear Data</div><div id="chart" style="position:absolute;left:2px;top:101px;width:800px;height:426px;background:#bfbfbf;border-top:1px solid #a9a9a9;border-bottom:1px solid #b0b0b0"></div><svg class="ov" style="top:545px" width="40" height="20"><path d="M9.5 7 L14 11.5 L18.5 7" fill="none" stroke="#333" stroke-width="2"/></svg><div class="st" style="top:536px">/dev/ttyAMA0 / 115200 8-N-1</div><div class="st" style="top:554px">Connected 00:01:58, 33,256 / 33,256 bytes</div><div class="ledoff" style="left:573px;top:537px"></div><div class="led" style="left:593.2px;top:537.7px;font-weight:bold;color:#2a2a2a">TX</div><div class="ledoff" style="left:573px;top:555px"></div><div class="led" style="left:593.2px;top:555.7px;font-weight:normal;color:#555">RX</div><div class="ledon" style="left:629px;top:537px"></div><div class="led" style="left:649.2px;top:537.7px;font-weight:bold;color:#2a2a2a">RTS</div><div class="ledon" style="left:629px;top:555px"></div><div class="led" style="left:649.2px;top:555.7px;font-weight:normal;color:#555">CTS</div><div class="ledon" style="left:685px;top:537px"></div><div class="led" style="left:705.2px;top:537.7px;font-weight:bold;color:#2a2a2a">DTR</div><div class="ledoff" style="left:685px;top:555px"></div><div class="led" style="left:705.2px;top:555.7px;font-weight:normal;color:#555">DSR</div><div class="ledoff" style="left:741px;top:537px"></div><div class="led" style="left:761.2px;top:537.7px;font-weight:normal;color:#555">DCD</div><div class="ledoff" style="left:741px;top:555px"></div><div class="led" style="left:761.2px;top:555.7px;font-weight:normal;color:#555">RI</div></div></div><svg style="position:absolute;left:135px;top:373px" width="800" height="424" viewBox="135 373 800 424"><rect x="195.5" y="419.5" width="720" height="344" fill="#fff"/><path d="M246.5 419.5V763.5M297.5 419.5V763.5M349.5 419.5V763.5M400.5 419.5V763.5M452.5 419.5V763.5M503.5 419.5V763.5M555.5 419.5V763.5M606.5 419.5V763.5M657.5 419.5V763.5M709.5 419.5V763.5M760.5 419.5V763.5M812.5 419.5V763.5M863.5 419.5V763.5M195.5 729.5H915.5M195.5 694.5H915.5M195.5 660.5H915.5M195.5 625.5H915.5M195.5 591.5H915.5M195.5 557.5H915.5M195.5 522.5H915.5M195.5 488.5H915.5M195.5 453.5H915.5" stroke="#c6c6c6" stroke-width="1" fill="none"/><path d="M246.5 419.5V424.5M246.5 763.5V758.5M297.5 419.5V424.5M297.5 763.5V758.5M349.5 419.5V424.5M349.5 763.5V758.5M400.5 419.5V424.5M400.5 763.5V758.5M452.5 419.5V424.5M452.5 763.5V758.5M503.5 419.5V424.5M503.5 763.5V758.5M555.5 419.5V424.5M555.5 763.5V758.5M606.5 419.5V424.5M606.5 763.5V758.5M657.5 419.5V424.5M657.5 763.5V758.5M709.5 419.5V424.5M709.5 763.5V758.5M760.5 419.5V424.5M760.5 763.5V758.5M812.5 419.5V424.5M812.5 763.5V758.5M863.5 419.5V424.5M863.5 763.5V758.5M195.5 729.5H200.5M915.5 729.5H910.5M195.5 694.5H200.5M915.5 694.5H910.5M195.5 660.5H200.5M915.5 660.5H910.5M195.5 625.5H200.5M915.5 625.5H910.5M195.5 591.5H200.5M915.5 591.5H910.5M195.5 557.5H200.5M915.5 557.5H910.5M195.5 522.5H200.5M915.5 522.5H910.5M195.5 488.5H200.5M915.5 488.5H910.5M195.5 453.5H200.5M915.5 453.5H910.5" stroke="#111" stroke-width="1" fill="none"/><rect x="195.5" y="419.5" width="720" height="344" fill="none" stroke="#111" stroke-width="1"/><polyline points="195.5,570.1 199.9,572 203.2,571.8 207.6,570.5 212,567.5 216.4,566.6 219,564.8 229.5,564.8 234,562.8 236.1,563.9 240.5,562.4 246,563.3 249.3,562.4 254.8,562.2 258.1,560.4 261.4,561.3 263.6,560.4 266.9,561.1 272.4,559.5 275.7,560 279,555.1 285.6,544.6 288.9,545.3 293.3,544.2 296.5,542.2 303.1,542.8 308.6,545.5 316.3,542 321.8,544.2 324,543.3 327.3,546.4 330.6,545.5 335,547.7 339.4,546.4 343.8,548.8 347.1,549 350.4,551.4 354.8,551.4 359.2,553.4 365.7,554.5 370.1,556.9 375.6,556.9 378.9,558.2 387.7,558.2 392.5,556.2 400,555" fill="none" stroke="#2323ff" stroke-width="1.3" stroke-linejoin="round"/><polyline points="195.5,685.3 202.9,685.3 205.9,686.5 208.9,686.7 212.9,688.5 216.8,689.3 218.8,689.9 229.8,689.9 231.7,690.7 236.7,690.9 239.7,692.1 249.6,692.1 252.6,693.3 257.6,692.3 259.6,693.3 262.6,692.3 265.5,693.3 271.5,693.5 273.5,694.5 279.5,694.5 284.4,692.3 293.4,692.3 296.4,690.9 304.3,690.9 307.3,689.7 309.3,689.9 311.3,690.9 314.3,689.7 327.2,689.7 329.2,688.7 332.1,689.7 339.1,689.7 342.1,688.7 345.1,689.7 355,689.7 358,690.7 362,692.1 375,692.1 379,692.8 388.9,693.4 391.9,694.4 396.9,694.4 399.9,693.2 403.8,692.4 409.8,691.8 413.8,689.8 458.5,689.8 462.5,688.6 465.5,690.2 473.4,690.2 476.4,688.6 483.3,688.6 486.3,689.8 503.2,689.8 507.2,688.6 517.1,688.6 520.1,687.4 534,687.4 538,688.8 542,688.8 546,687.4 562.9,687.4 566,683.8 575.9,679.5 578.9,679.5 583.9,677.3 588.8,677.3 596.8,673.9 608.7,673.9 612.7,672.5 617.7,672.5 620.6,671.3 630.6,671.3 633.6,670.1 640.5,670.1 643.5,669.3 651.5,669.3 653.4,670.3 724,670.3 727,671.5 739.9,671.5 742.9,670.3 751.3,670.4 759.1,676.7 766.2,677.3 769.3,679.8 774,683.2 778.7,684 789.7,684 792.1,685.3 794.4,684 822.7,684 825,685.3 829,684 832.9,683.2 840.7,683.2 843.5,682 846.2,683.2 848.6,682 858.8,682 861.9,683.2 866.6,683.2 869,682 881.5,682 884.7,683.2" fill="none" stroke="#ff3e2e" stroke-width="1.3" stroke-linejoin="round"/><rect x="200.5" y="424.5" width="87" height="35" fill="#fff" stroke="#111" stroke-width="1"/><path d="M247 431.5H284" stroke="#2323ff" stroke-width="1.3"/><path d="M247 444.5H284" stroke="#ff3e2e" stroke-width="1.3"/><g font-family="Liberation Sans" font-size="11" fill="#222" text-anchor="end"><text x="241.5" y="437">RH (%)</text><text x="241.5" y="450">T (?C)</text></g><g font-family="Liberation Sans" font-size="12.5" fill="#222" text-anchor="end"><text x="190.5" y="768.9">20</text><text x="190.5" y="734.9">23</text><text x="190.5" y="699.9">26</text><text x="190.5" y="665.9">29</text><text x="190.5" y="630.9">32</text><text x="190.5" y="596.9">35</text><text x="190.5" y="562.9">38</text><text x="190.5" y="527.9">41</text><text x="190.5" y="493.9">44</text><text x="190.5" y="458.9">47</text><text x="190.5" y="424.9">50</text></g><g font-family="Liberation Sans" font-size="12.5" fill="#222" text-anchor="middle"><text x="195.5" y="777.5">0</text><text x="246.5" y="777.5">20</text><text x="297.5" y="777.5">40</text><text x="349.5" y="777.5">60</text><text x="400.5" y="777.5">80</text><text x="452.5" y="777.5">100</text><text x="503.5" y="777.5">120</text><text x="555.5" y="777.5">140</text><text x="606.5" y="777.5">160</text><text x="657.5" y="777.5">180</text><text x="709.5" y="777.5">200</text><text x="760.5" y="777.5">220</text><text x="812.5" y="777.5">240</text><text x="863.5" y="777.5">260</text><text x="915.5" y="777.5">280</text></g><text x="535" y="408.8" font-family="Liberation Sans" font-size="17" letter-spacing="0.45" fill="#1a1a1a" text-anchor="middle">Climate Data</text><text transform="translate(160.3 591) rotate(-90)" font-family="Liberation Sans" font-size="14.4" fill="#222" text-anchor="middle">Humidity / Temperature</text></svg><div id="dlg" style="position:absolute;left:393px;top:434px;width:505px;height:207px;background:#efefef;border:1px solid #c4c4c4;border-top:none;border-radius:4px 4px 1px 1px;overflow:hidden"><div style="position:absolute;left:-1px;top:0;width:505px;height:30px;background:#7f8b93"></div><div style="position:absolute;left:-1px;top:6.6px;width:505px;text-align:center;font-size:16.7px;line-height:20px;color:#eef0f2;transform:scaleX(.954)">Send String (Hex Mode.stc)</div><svg style="position:absolute;left:-1px;top:0" width="505" height="30"><path d="M437.8 15 L441 18.2 L444.2 15 M461.8 18.2 L465 15 L468.2 18.2 " fill="none" stroke="#f2f2f2" stroke-width="2"/><path d="M486.2 13.2 L491.8 18.8 M491.8 13.2 L486.2 18.8" fill="none" stroke="#f2f2f2" stroke-width="2.2" stroke-linecap="round"/></svg><div style="position:absolute;left:25px;top:54.5px;width:15px;height:15px;border-radius:50%;background:#fff;border:1px solid #c4c4c4"></div><div class="dl" style="left:44.5px;top:52px">Plain</div><div style="position:absolute;left:104px;top:54.5px;width:15px;height:15px;border-radius:50%;background:#fff;border:1px solid #c4c4c4"></div><div style="position:absolute;left:108.7px;top:59.2px;width:5.6px;height:5.6px;border-radius:50%;background:#263030"></div><div class="dl" style="left:123.5px;top:52px">Hex</div><div style="position:absolute;left:401px;top:50px;width:81px;height:24px;background:#e0e0e0;border:1px solid #b4b4b4;border-radius:2px"></div><div style="position:absolute;left:403px;top:52px;width:77px;height:20px;border:1px dashed #8a8a8a"></div><div class="dl" style="left:422.5px;top:51px">Send</div><div style="position:absolute;left:21px;top:82px;width:462px;height:103px;background:#fff;border:1px solid #b0b0b0"></div><div class="mono" style="position:absolute;left:23.5px;top:84px;line-height:20px">54 68 69 73 20 69 73 20 61 20 74 65 73 74</div></div></body></html>
